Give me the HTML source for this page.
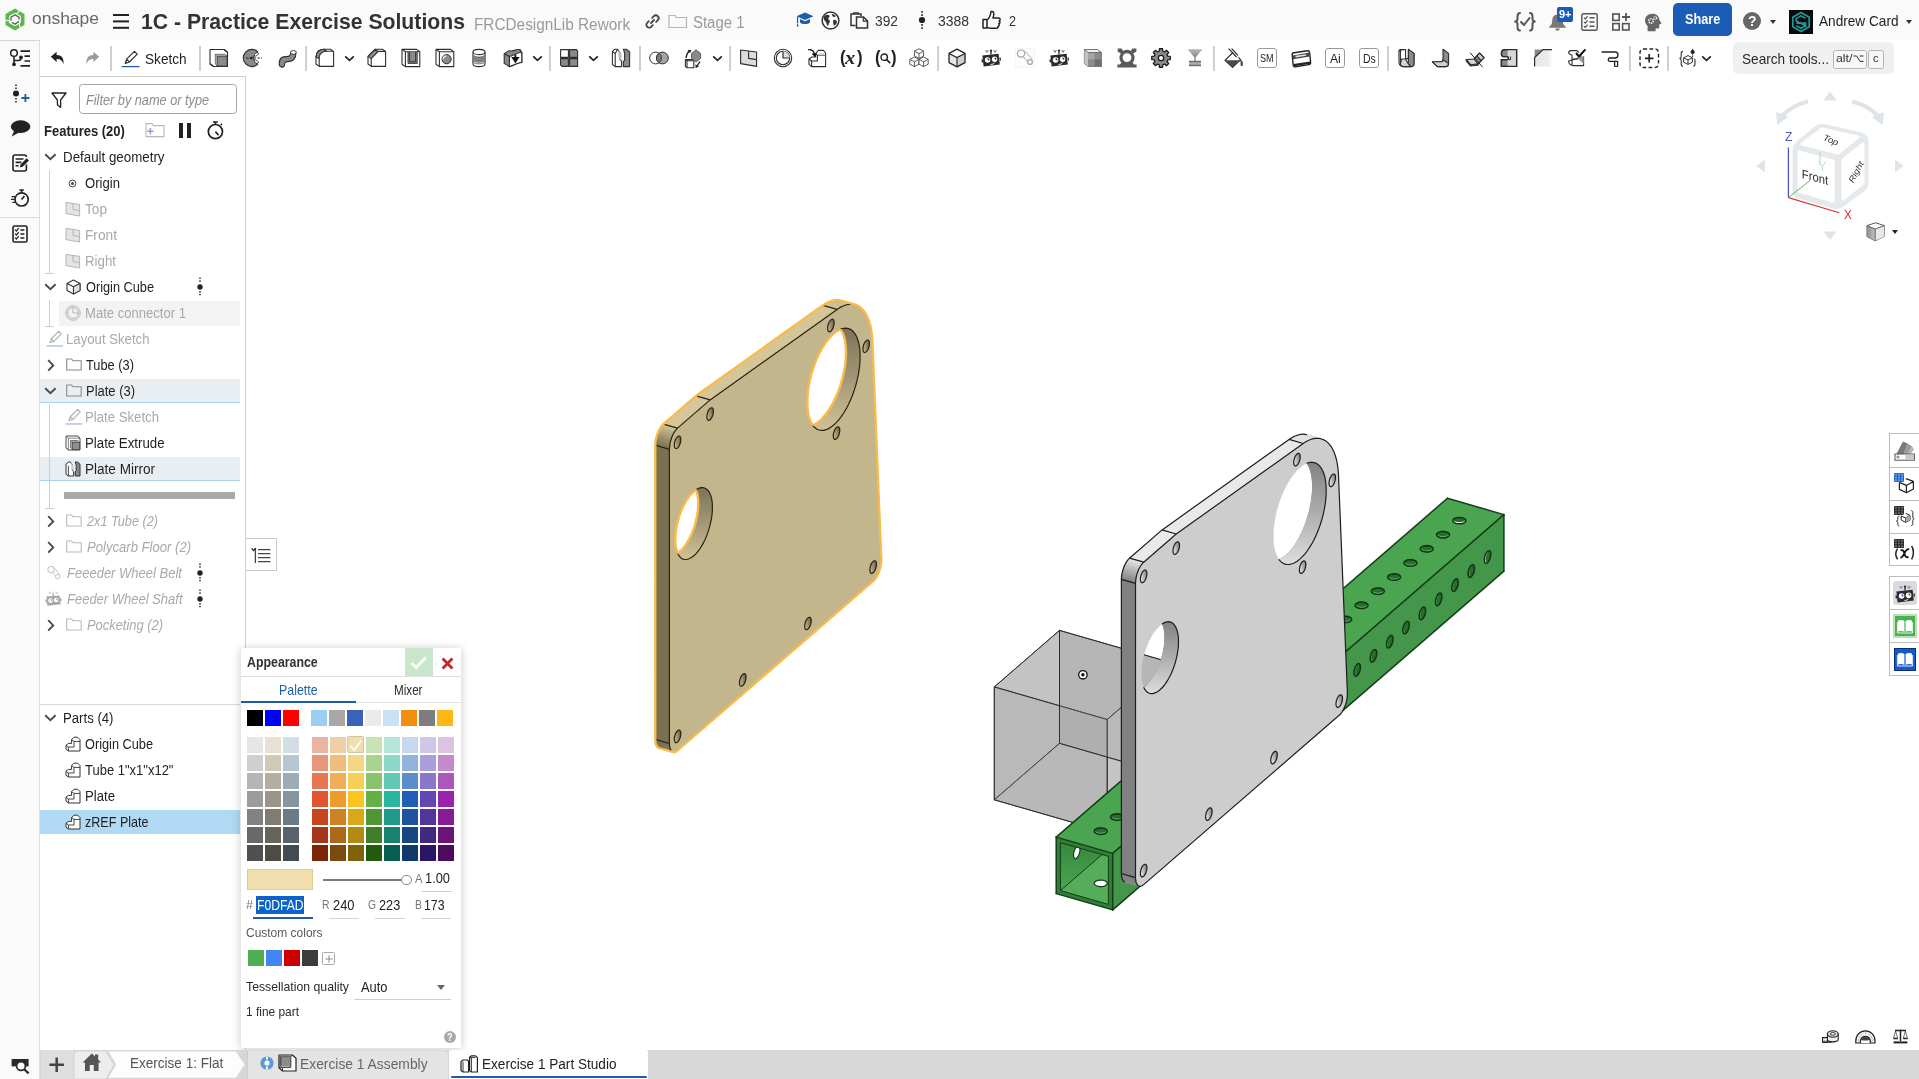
<!DOCTYPE html>
<html lang="en"><head><meta charset="utf-8"><title>1C - Practice Exercise Solutions</title>
<style>
html,body{margin:0;padding:0}
body{will-change:transform;width:1919px;height:1079px;overflow:hidden;position:relative;background:#fff;font-family:"Liberation Sans",sans-serif;font-size:14px;color:#1f1f1f}
.t{position:absolute;white-space:nowrap;line-height:1.2;transform-origin:0 50%}
.a{position:absolute}
svg{position:absolute;overflow:visible}
</style></head><body>

<!-- topbar -->
<div class="a" style="left:0;top:0;width:1919px;height:40px;background:#fafafa"></div>
<svg style="left:4.6px;top:8.4px" width="20" height="23" viewBox="0 0 20 23">
<path d="M10.0 0.5 L19.5 6.0 L19.5 17.0 L10.0 22.5 L0.5 17.0 L0.5 6.0Z M10.0 4.8 L15.8 8.1 L15.8 14.8 L10.0 18.2 L4.2 14.9 L4.2 8.1Z" fill="#5ab949" fill-rule="evenodd"/><path d="M10.9 6.6 L16.0 1.1" stroke="#fafafa" stroke-width="1.1"/><path d="M13.8 14.7 L16.0 21.9" stroke="#fafafa" stroke-width="1.1"/><path d="M5.3 13.2 L-2.0 11.5" stroke="#fafafa" stroke-width="1.1"/>
<path d="M6.0 12.8 L6.0 9.2 L10.0 6.9 L14.0 9.2 L14.0 11.4 M14.0 13.4 L10.0 16.1 L7.0 14.4" fill="none" stroke="#666" stroke-width="1.4"/>
</svg>
<span class="t" style="left:31.5px;top:8.7px;font-size:16.5px;color:#666;transform:scaleX(1.058);">onshape</span>
<div class="a" style="left:113px;top:14px;width:16px;height:2.3px;background:#222;box-shadow:0 6.4px 0 #222,0 12.8px 0 #222"></div>
<span class="t" style="left:141px;top:7.8px;font-size:22.5px;color:#333;font-weight:700;transform:scaleX(0.942);">1C - Practice Exercise Solutions</span>
<span class="t" style="left:474px;top:15.4px;font-size:16px;color:#9a9a9a;transform:scaleX(0.959);">FRCDesignLib Rework</span>
<svg style="left:644px;top:13px" width="17" height="17" viewBox="0 0 17 17" fill="none" stroke="#444" stroke-width="1.8" stroke-linecap="round">
<path d="M7 10 L10 7"/><path d="M8.2 4.8 L9.8 3.2 a2.8 2.8 0 0 1 4 4 L12.2 8.8"/><path d="M8.8 12.2 L7.2 13.8 a2.8 2.8 0 0 1 -4 -4 L4.8 8.2"/></svg>
<svg style="left:668px;top:14px" width="20" height="15" viewBox="0 0 20 15" fill="none" stroke="#b5b5b5" stroke-width="1.2"><path d="M1 13.5 V1.5 H7 L8.5 3.5 H18.5 V13.5Z"/></svg>
<span class="t" style="left:692.5px;top:13.2px;font-size:16px;color:#9a9a9a;transform:scaleX(0.934);">Stage 1</span>
<svg style="left:796px;top:12px" width="18" height="16" viewBox="0 0 18 16"><path d="M9 0.5 L17.5 4.2 L9 8 L0.5 4.2Z" fill="#1b5faa"/><path d="M4 7 V10.5 C6 12.6 12 12.6 14 10.5 V7 L9 9.3Z" fill="#1b5faa"/><path d="M1.6 5 V11" stroke="#1b5faa" stroke-width="1.2"/><path d="M0.6 14.5 L1.6 10.5 L2.6 14.5Z" fill="#1b5faa"/></svg>
<svg style="left:821px;top:10.5px" width="19" height="19" viewBox="0 0 19 19"><circle cx="9.5" cy="9.5" r="8.4" fill="#fafafa" stroke="#333" stroke-width="1.5"/><path d="M3 5.5 C5 3 7.5 3.5 8.5 4.5 C9 6 7.5 6.5 7 8 C8.5 9 9.5 10 8.5 11.5 C7.5 13 7.5 14.5 6.5 15 C5.5 13.5 5.5 11.5 4.5 10.5 C3 9.5 2.5 7.5 3 5.5Z" fill="#333"/><path d="M11 3 C12.5 3 14 4 15 5 C14 6 12.5 6.5 12 5.5 C11.3 4.6 10.6 3.8 11 3Z M12.5 9 C14 8.5 15.5 9.5 16 11 C15.5 13 14 14.5 12.8 14.8 C12.6 13 11.5 11 12.5 9Z" fill="#333"/></svg>
<svg style="left:850px;top:11.5px" width="19" height="17" viewBox="0 0 19 17" fill="none" stroke="#333" stroke-width="1.5"><path d="M5.5 13.5 H1 V2 H11 V4"/><path d="M3.8 2 V0.9 H8.2 V2" stroke-width="1.4"/><path d="M6.5 5 H13.5 L17.5 9 V16 H6.5Z"/><path d="M13.3 5 V9.2 H17.5" stroke-width="1.2"/></svg>
<span class="t" style="left:875.4px;top:11.5px;font-size:15px;color:#333;transform:scaleX(0.919);">392</span>
<svg style="left:916px;top:10px" width="12" height="20" viewBox="0 0 12 20"><circle cx="6" cy="10" r="3.1" fill="#222"/><path d="M6 1 V6 M6 14 V19" stroke="#222" stroke-width="1.6" stroke-dasharray="1.7 1.5"/></svg>
<span class="t" style="left:938px;top:11.5px;font-size:15px;color:#333;transform:scaleX(0.929);">3388</span>
<svg style="left:982px;top:10px" width="20" height="20" viewBox="0 0 20 20" fill="none" stroke="#222" stroke-width="1.5" stroke-linejoin="round"><path d="M1 9.5 H5 V18 H1Z"/><path d="M5 10 C7.5 8 8.5 5.5 8.8 2.2 C9 1 11.6 1 11.8 3.4 C12 5.2 11.5 6.6 11 8 H16.5 C18.6 8 18.6 10.6 17.2 11 C18.4 11.6 18.1 13.6 16.7 13.8 C17.6 14.6 17.2 16.3 15.9 16.4 C16.4 17.3 15.8 18.3 14.6 18.3 H8.5 C7 18.3 6 17.5 5 17.2"/></svg>
<span class="t" style="left:1008.8px;top:11.5px;font-size:15px;color:#333;transform:scaleX(0.839);">2</span>
<svg style="left:1514px;top:12px" width="22" height="20" viewBox="0 0 22 20" fill="none" stroke="#555" stroke-width="2" stroke-linecap="round" stroke-linejoin="round"><path d="M6 1 C3.5 1 3.5 2.5 3.5 4.5 V7 C3.5 8.5 2.5 9.3 1.2 9.5 C2.5 9.8 3.5 10.5 3.5 12 V15 C3.5 17 3.5 18.5 6 18.5"/><path d="M16 1 C18.5 1 18.5 2.5 18.5 4.5 V7 C18.5 8.5 19.5 9.3 20.8 9.5 C19.5 9.8 18.5 10.5 18.5 12 V15 C18.5 17 18.5 18.5 16 18.5"/><path d="M7 10 L10 13 L15.5 6"/></svg>
<svg style="left:1548px;top:14px" width="19" height="17" viewBox="0 0 19 17"><path d="M9.5 0.5 C5.5 0.5 4.2 3.8 4.2 7 C4.2 10 3 11.5 1.2 12.8 V13.8 H17.8 V12.8 C16 11.5 14.8 10 14.8 7 C14.8 3.8 13.5 0.5 9.5 0.5Z" fill="#777"/><path d="M7.3 14.6 a2.2 2.2 0 0 0 4.4 0Z" fill="#777"/></svg>
<div class="a" style="left:1557px;top:6.5px;width:16px;height:15.5px;background:#1a5ab8;border-radius:2px"></div>
<span class="t" style="left:1559px;top:7.7px;font-size:10.5px;color:#fff;font-weight:700;transform:scaleX(1.044);">9+</span>
<svg style="left:1581px;top:13px" width="17" height="18" viewBox="0 0 17 18" fill="none" stroke="#555" stroke-width="1.4"><rect x="0.8" y="0.8" width="15.4" height="16.4" rx="1.5"/><path d="M8.5 4.8 H13.5 M8.5 9 H13.5 M8.5 13.2 H13.5" stroke-width="1.5"/><path d="M3 4.6 L4.3 6 L6.6 3.2 M3 8.8 L4.3 10.2 L6.6 7.4 M3 13 L4.3 14.4 L6.6 11.6" stroke-width="1.2"/></svg>
<svg style="left:1612px;top:13px" width="19" height="18" viewBox="0 0 19 18" fill="none" stroke="#555" stroke-width="1.6"><rect x="0.8" y="1" width="6.4" height="6.4"/><rect x="0.8" y="10.6" width="6.4" height="6.4"/><rect x="10.6" y="10.6" width="6.4" height="6.4"/><path d="M14 0 V8 M10 4 H18" stroke-width="1.8"/></svg>
<svg style="left:1644px;top:12.5px" width="19" height="19" viewBox="0 0 19 19"><path d="M8.5 0.8 C3.8 0.8 1 4 1 7.6 C1 10.3 2.3 11.8 3.6 13 V18.2 H11.6 V15.6 H13.6 C14.8 15.6 15.2 15 15.2 14 V11.6 L17.6 10.4 L15.4 7 C15.2 3.4 12.6 0.8 8.5 0.8Z" fill="#666"/><circle cx="7" cy="8" r="2.3" fill="none" stroke="#fafafa" stroke-width="1.5" stroke-dasharray="1.3 0.9"/><circle cx="11.3" cy="5" r="1.4" fill="none" stroke="#fafafa" stroke-width="1.2" stroke-dasharray="1 0.7"/></svg>
<div class="a" style="left:1673px;top:3px;width:59px;height:33px;background:#1b5cb6;border-radius:5px"></div>
<span class="t" style="left:1685.2px;top:9.9px;font-size:15.5px;color:#fff;font-weight:700;transform:scaleX(0.819);">Share</span>
<div class="a" style="left:1743px;top:12px;width:18px;height:18px;border-radius:9px;background:#666"></div>
<span class="t" style="left:1747.8px;top:12.5px;font-size:14.5px;color:#fafafa;font-weight:700;transform:scaleX(0.971);">?</span>
<div class="a" style="left:1769.5px;top:19.8px;border:3.8px solid transparent;border-top:4.2px solid #333;border-bottom:0"></div>
<svg style="left:1789px;top:10px" width="24" height="24" viewBox="0 0 24 24"><rect width="24" height="24" fill="#0a0a0a"/><path d="M12 2.6 L20.2 7.3 V16.7 L12 21.4 L3.8 16.7 V7.3Z" fill="none" stroke="#1f9a9c" stroke-width="1.7"/><path d="M16.5 8.2 L12 5.8 L7.2 8.4 V11 L16.6 15.6 V13 L7.3 13.3 M7.3 15.8 L12 18.3 L16.6 15.6" fill="none" stroke="#1f9a9c" stroke-width="1.6"/></svg>
<span class="t" style="left:1819px;top:12px;font-size:15px;color:#222;transform:scaleX(0.908);">Andrew Card</span>
<div class="a" style="left:1906px;top:19.8px;border:3.8px solid transparent;border-top:4.2px solid #333;border-bottom:0"></div>
<!-- toolbar -->
<div class="a" style="left:0;top:40px;width:39.4px;height:1039px;background:#fafafa;border-right:1px solid #dedede"></div>
<div class="a" style="left:0;top:40px;width:40px;height:1px;background:#d4d4d4"></div>
<svg style="left:9px;top:48px" width="22" height="20" viewBox="0 0 22 20"><circle cx="5" cy="5" r="3.3" fill="none" stroke="#222" stroke-width="1.5"/><path d="M5 8.3 V15.5 M5 12.5 H9.5 C11.5 12.5 12 11.5 12 10" fill="none" stroke="#222" stroke-width="1.6"/><circle cx="5" cy="16.3" r="1.9" fill="#222"/><circle cx="12" cy="9.3" r="1.9" fill="#222"/><path d="M11.5 3.2 H21 M15.5 8.2 H21 M15.5 13 H21 M11.5 17.8 H21" stroke="#222" stroke-width="1.7"/></svg>
<svg style="left:49.5px;top:50.6px" width="15" height="14" viewBox="0 0 15 14"><path d="M0.8 5.8 L6.6 0.8 V3.9 C11.6 3.9 14.2 7 13.4 13.4 C12.4 9.6 10.4 8 6.6 8 V11Z" fill="#222"/></svg>
<svg style="left:85px;top:50.6px" width="15" height="14" viewBox="0 0 15 14"><path d="M14.2 5.8 L8.4 0.8 V3.9 C3.4 3.9 0.8 7 1.6 13.4 C2.6 9.6 4.6 8 8.4 8 V11Z" fill="#9c9c9c"/></svg>
<div class="a" style="left:110.2px;top:45.5px;width:1.6px;height:25px;background:#cfcfcf"></div>
<svg style="left:120.5px;top:49.5px" width="19" height="18" viewBox="0 0 19 18"><path d="M4.2 13.4 L5.6 9.2 L13.4 1.4 L16.2 4.2 L8.4 12Z M5.6 9.2 L8.4 12" fill="none" stroke="#333" stroke-width="1.2" stroke-linejoin="round"/><path d="M4.2 13.4 L5 11.4 L6.2 12.6Z" fill="#333"/><path d="M0.5 16.6 H18.5" stroke="#1b5faa" stroke-width="1.3"/></svg>
<span class="t" style="left:144.7px;top:50.1px;font-size:15.5px;color:#222;transform:scaleX(0.878);">Sketch</span>
<div class="a" style="left:199px;top:45.5px;width:1.6px;height:25px;background:#cfcfcf"></div>
<svg style="left:209px;top:48px" width="20" height="20" viewBox="0 0 20 20"><path d="M1 1.5 H15 L18.5 4.2 V18.5 H4.5 L1 15.8Z" fill="#fff" fill="none" stroke="#2e2e2e" stroke-width="1.1" stroke-linejoin="round"/><path d="M15 1.5 L18.5 4.2 M1 15.8 L4.5 18.5 M4.5 18.5" fill="none" stroke="#2e2e2e" stroke-width="1.1" stroke-linejoin="round"/><rect x="8" y="8" width="10.2" height="10.2" fill="#8a8a8a" stroke="#2e2e2e" stroke-width="1"/><path d="M6.4 6.4 H15.4 L18.2 8 M6.4 6.4 V15.4 L8 18.2 M6.4 6.4 L8 8" fill="none" stroke="#2e2e2e" stroke-width="0.9"/><path d="M6.4 6.4 H15.4 L18.2 8 H8Z M6.4 6.4 V15.4 L8 18.2 V8Z" fill="#a5a5a5"/></svg>
<svg style="left:243px;top:48px" width="20" height="20" viewBox="0 0 20 20"><path d="M14.6 3.6 A8.6 8.6 0 1 0 14.6 16.4 L9.8 10Z" fill="#8a8a8a" stroke="#2e2e2e" stroke-width="1.1"/><ellipse cx="13.4" cy="6.3" rx="2.3" ry="1.3" transform="rotate(-38 13.4 6.3)" fill="#fff" stroke="#2e2e2e" stroke-width="0.8"/><ellipse cx="13.4" cy="13.7" rx="2.3" ry="1.3" transform="rotate(38 13.4 13.7)" fill="#fff" stroke="#2e2e2e" stroke-width="0.8"/><path d="M3 10 H19" stroke="#222" stroke-width="1" stroke-dasharray="2.4 1.4"/><path d="M6.2 10 L9 8.4 V11.6Z" fill="#222"/></svg>
<svg style="left:276.5px;top:48.5px" width="21" height="20" viewBox="0 0 21 20"><path d="M2.2 14.5 C2.2 8.5 6 7.6 9.5 7.6 C12.5 7.6 13.8 6.5 13.8 3.2 L19 3.2 C19 9 17 12.6 11 12.6 C8.4 12.6 7.6 13.4 7.6 15.2 C7.6 19.4 2.2 19 2.2 14.5Z" fill="#8a8a8a" stroke="#2e2e2e" stroke-width="1.1"/><ellipse cx="16.4" cy="3.4" rx="2.7" ry="1.9" fill="#fff" stroke="#2e2e2e" stroke-width="0.9"/></svg>
<div class="a" style="left:305.2px;top:45.5px;width:1.6px;height:25px;background:#cfcfcf"></div>
<svg style="left:315px;top:48px" width="20" height="20" viewBox="0 0 20 20"><path d="M1 9 C1 4 4.5 1.3 9 1.3 H15.5 L18.6 3.6 V18.4 H4.2 L1 16Z" fill="#fff" fill="none" stroke="#2e2e2e" stroke-width="1.1" stroke-linejoin="round"/><path d="M1 9 C1 4 4.5 1.3 9 1.3 L11.6 3.2 C7.5 3.2 4.2 5.6 4.2 10.6Z" fill="#8a8a8a" fill="none" stroke="#2e2e2e" stroke-width="1.1" stroke-linejoin="round"/><path d="M4.2 10.6 V18.4 M11.6 3.2 H18.6" fill="none" stroke="#2e2e2e" stroke-width="1.1" stroke-linejoin="round"/></svg>
<svg style="left:344.2px;top:54.8px" width="11" height="7" viewBox="0 0 11 7"><path d="M1.2 1.4 L5.5 5.4 L9.8 1.4" fill="none" stroke="#222" stroke-width="1.7"/></svg>
<svg style="left:367px;top:48px" width="20" height="20" viewBox="0 0 20 20"><path d="M1 8.4 L8 1.3 H15.5 L18.6 3.6 V18.4 H4.2 L1 16Z" fill="#fff" fill="none" stroke="#2e2e2e" stroke-width="1.1" stroke-linejoin="round"/><path d="M1 8.4 L8 1.3 L11.2 3.4 L4.2 10.6Z" fill="#8a8a8a" fill="none" stroke="#2e2e2e" stroke-width="1.1" stroke-linejoin="round"/><path d="M4.2 10.6 V18.4 M11.2 3.4 H18.6" fill="none" stroke="#2e2e2e" stroke-width="1.1" stroke-linejoin="round"/></svg>
<svg style="left:401px;top:48px" width="20" height="20" viewBox="0 0 20 20"><path d="M1 1.4 H15.6 L18.8 3.8 V18.6 H4.4 L1 16.2Z" fill="#fff" fill="none" stroke="#2e2e2e" stroke-width="1.1" stroke-linejoin="round"/><path d="M4.4 3.8 H18.8 M4.4 3.8 V18.6 M1 1.4 L4.4 3.8" fill="none" stroke="#2e2e2e" stroke-width="1.1" stroke-linejoin="round"/><path d="M7 3.8 H16.2 V15.4 H7Z" fill="#8a8a8a"/><path d="M7 3.8 V15.4 H16.2 V3.8 M8.6 3.8 V13.8 H14.6 V3.8" fill="none" stroke="#2e2e2e" stroke-width="0.9"/></svg>
<svg style="left:435px;top:48px" width="20" height="20" viewBox="0 0 20 20"><path d="M1 1.4 H15.6 L18.8 3.8 V18.6 H4.4 L1 16.2Z" fill="#fff" fill="none" stroke="#2e2e2e" stroke-width="1.1" stroke-linejoin="round"/><path d="M4.4 3.8 H18.8 M4.4 3.8 V18.6 M1 1.4 L4.4 3.8" fill="none" stroke="#2e2e2e" stroke-width="1.1" stroke-linejoin="round"/><circle cx="11.6" cy="11.2" r="4.6" fill="#8a8a8a" stroke="#2e2e2e" stroke-width="1"/><path d="M8.2 11.6 A3.2 3.2 0 0 1 11.4 8" fill="none" stroke="#e8e8e8" stroke-width="1.4"/></svg>
<svg style="left:469px;top:48px" width="20" height="20" viewBox="0 0 20 20"><path d="M4 4 V16 A6 2.6 0 0 0 16 16 V4" fill="#fff" fill="none" stroke="#2e2e2e" stroke-width="1.1" stroke-linejoin="round"/><ellipse cx="10" cy="4" rx="6" ry="2.6" fill="#fff" fill="none" stroke="#2e2e2e" stroke-width="1.1" stroke-linejoin="round"/><path d="M4.2 6.6 A6 2.4 0 0 0 15.8 6.6 V12.6 A6 2.4 0 0 1 4.2 12.6Z" fill="#a8a8a8"/><path d="M4 7 A6 2.4 0 0 0 16 7 M4 8.6 A6 2.4 0 0 0 16 8.6 M4 10.2 A6 2.4 0 0 0 16 10.2 M4 11.8 A6 2.4 0 0 0 16 11.8 M4 13.4 A6 2.4 0 0 0 16 13.4" fill="none" stroke="#555" stroke-width="0.8"/></svg>
<svg style="left:503px;top:48px" width="20" height="20" viewBox="0 0 20 20"><path d="M1.2 5.6 L6 2.6 C9 4.6 12.6 0.6 17 1.6 L18.8 4.6 V14.6 C15.5 13.4 12 17.6 6.4 18.6 L1.2 15.4Z" fill="#8a8a8a" fill="none" stroke="#2e2e2e" stroke-width="1.1" stroke-linejoin="round"/><path d="M6.4 8.4 C10 8 13.6 4 18.8 4.6 V14.6 C15.5 13.4 12 17.6 6.4 18.6Z" fill="#fff" fill="none" stroke="#2e2e2e" stroke-width="1.1" stroke-linejoin="round"/><path d="M1.2 5.6 L6.4 8.4" fill="none" stroke="#2e2e2e" stroke-width="1.1" stroke-linejoin="round"/><path d="M12.4 6.6 V11.4 M10 10 L12.4 13.6 L14.8 10Z" fill="#111" stroke="#111" stroke-width="1.9"/></svg>
<svg style="left:532.2px;top:54.8px" width="11" height="7" viewBox="0 0 11 7"><path d="M1.2 1.4 L5.5 5.4 L9.8 1.4" fill="none" stroke="#222" stroke-width="1.7"/></svg>
<div class="a" style="left:549px;top:45.5px;width:1.6px;height:25px;background:#cfcfcf"></div>
<svg style="left:559px;top:48px" width="20" height="20" viewBox="0 0 20 20"><path d="M1.6 1.6 H9.4 V9.4 H1.6Z" fill="#fff" fill="none" stroke="#2e2e2e" stroke-width="1.1" stroke-linejoin="round"/><path d="M10.6 1.6 H17.4 L18.6 3 V9.4 H10.6Z M1.6 10.6 H9.4 V18.4 H3 L1.6 17Z M10.6 10.6 H18.6 V18.4 H10.6Z" fill="#8a8a8a" fill="none" stroke="#2e2e2e" stroke-width="1.1" stroke-linejoin="round"/></svg>
<svg style="left:588.2px;top:54.8px" width="11" height="7" viewBox="0 0 11 7"><path d="M1.2 1.4 L5.5 5.4 L9.8 1.4" fill="none" stroke="#222" stroke-width="1.7"/></svg>
<svg style="left:611px;top:48px" width="20" height="20" viewBox="0 0 20 20"><path d="M1.4 3.4 L4 1.2 H6.6 L9 5 V11.6 L10.6 13 V18.6 H4.2 L1.4 16.4Z" fill="#fff" fill="none" stroke="#2e2e2e" stroke-width="1.1" stroke-linejoin="round"/><path d="M4.2 5.6 V18.6 M1.4 3.4 L4.2 5.6 L6.6 1.4" fill="none" stroke="#2e2e2e" stroke-width="1.1" stroke-linejoin="round"/><path d="M12.4 1.2 H15.4 L18.6 4 V18.6 H12.4 V13.4 L13.6 12.4 V5Z" fill="#8a8a8a" fill="none" stroke="#2e2e2e" stroke-width="1.1" stroke-linejoin="round"/><path d="M7 2 L10.6 6.4 V13 L7.4 9.4Z" fill="#c8c8c8" opacity="0.8"/></svg>
<div class="a" style="left:639.2px;top:45.5px;width:1.6px;height:25px;background:#cfcfcf"></div>
<svg style="left:649px;top:48px" width="20" height="20" viewBox="0 0 20 20"><circle cx="6.6" cy="10" r="5.9" fill="#fff" stroke="#2e2e2e" stroke-width="1"/><circle cx="13.4" cy="10" r="5.9" fill="#9a9a9a" fill-opacity="0.9" stroke="#2e2e2e" stroke-width="1"/><path d="M10 5.2 A5.9 5.9 0 0 1 10 14.8 A5.9 5.9 0 0 1 10 5.2Z" fill="#7a7a7a" stroke="#2e2e2e" stroke-width="0.8"/></svg>
<svg style="left:683px;top:48.5px" width="20" height="20" viewBox="0 0 20 20"><path d="M2.4 10.6 H9.2 L10.8 11.8 V18.8 H4 L2.4 17.6Z" fill="#fff" fill="none" stroke="#2e2e2e" stroke-width="1.1" stroke-linejoin="round"/><path d="M4 11.8 H10.8 M4 11.8 V18.8 M2.4 10.6 L4 11.8" fill="none" stroke="#2e2e2e" stroke-width="1.1" stroke-linejoin="round"/><path d="M13 0.8 L17.6 4.4 V9.4 L13 13 L8.6 9.4 V4.4Z" fill="#8a8a8a" stroke="#555" stroke-width="0.9"/><path d="M3 9 C3.4 5.6 4.6 3.4 6.4 2" fill="none" stroke="#222" stroke-width="1.3"/><path d="M4.6 1 L8.4 1 L7 4.2Z" fill="#222"/><path d="M17 12.6 L14 17" stroke="#222" stroke-width="1.3"/><path d="M12.4 15.2 L12.6 19 L16 17.4Z" fill="#222"/></svg>
<svg style="left:712.2px;top:54.8px" width="11" height="7" viewBox="0 0 11 7"><path d="M1.2 1.4 L5.5 5.4 L9.8 1.4" fill="none" stroke="#222" stroke-width="1.7"/></svg>
<div class="a" style="left:729.2px;top:45.5px;width:1.6px;height:25px;background:#cfcfcf"></div>
<svg style="left:739px;top:48px" width="20" height="20" viewBox="0 0 20 20"><path d="M1.6 2 L17.6 4 V18.4 L1.6 15.6Z" fill="#dcdcdc" fill="none" stroke="#2e2e2e" stroke-width="1.1" stroke-linejoin="round"/><path d="M9.6 3 V10.4 L17.6 11.6" fill="none" stroke="#2e2e2e" stroke-width="1.1" stroke-linejoin="round"/></svg>
<svg style="left:773px;top:48px" width="20" height="20" viewBox="0 0 20 20"><circle cx="10" cy="10" r="8.7" fill="#fff" stroke="#2e2e2e" stroke-width="1.1"/><circle cx="10" cy="10" r="6.7" fill="#fff" stroke="#2e2e2e" stroke-width="1.1"/><path d="M10 10 V3.3 A6.7 6.7 0 0 1 16.7 10Z" fill="#dcdcdc"/><path d="M10 3.5 V10 H16.5" fill="none" stroke="#2e2e2e" stroke-width="1.2"/></svg>
<svg style="left:807px;top:48px" width="20" height="20" viewBox="0 0 20 20"><path d="M2 11 L5 9 H8.6 V5.6 L11.4 2.4 H16.4 L18.6 5 V18.6 H4.6 L2 16.4Z" fill="#fff" fill="none" stroke="#2e2e2e" stroke-width="1.1" stroke-linejoin="round"/><path d="M2 11 L4.6 13 H10.4 V7.4 H18.6 M4.6 13 V18.6 M10.4 7.4 L8.6 5.6" fill="none" stroke="#2e2e2e" stroke-width="1.1" stroke-linejoin="round"/><path d="M10.4 7.4 L12.8 5 H16.4 L18.6 7.4Z" fill="#d0d0d0"/><path d="M1.2 1.6 C5 1.4 7 3 7.4 6.4" fill="none" stroke="#111" stroke-width="1.4"/><path d="M4.6 5.6 L7.6 9 L10 5.4Z" fill="#111"/></svg>
<span class="t" style="left:840.2px;top:46.2px;font-size:19px;color:#222;font-weight:700;transform:scaleX(0.885);">(</span>
<span class="t" style="left:857.4px;top:46.2px;font-size:19px;color:#222;font-weight:700;transform:scaleX(0.885);">)</span>
<span class="t" style="left:845.4px;top:47px;font-size:19px;color:#222;font-weight:700;font-style:italic;transform:scaleX(1.088);font-family:'Liberation Serif',serif;">x</span>
<span class="t" style="left:874.6px;top:46.2px;font-size:19px;color:#222;font-weight:700;transform:scaleX(0.885);">(</span>
<span class="t" style="left:891.2px;top:46.2px;font-size:19px;color:#222;font-weight:700;transform:scaleX(0.885);">)</span>
<svg style="left:879.7px;top:52.7px" width="11" height="11" viewBox="0 0 11 11"><circle cx="4.2" cy="4.2" r="3.2" fill="none" stroke="#222" stroke-width="1.4"/><path d="M6.6 6.6 L10.2 10.2" stroke="#222" stroke-width="1.7"/></svg>
<svg style="left:909px;top:48px" width="20" height="20" viewBox="0 0 20 20"><g fill="#fff" stroke="#4a4a4a" stroke-width="0.9" stroke-linejoin="round"><path d="M10 0.8 L14.6 3.2 V8 L10 10.4 L5.4 8 V3.2Z M5.4 3.2 L10 5.6 L14.6 3.2 M10 5.6 V10.4"/><path d="M5.4 9 L10 11.4 V16.2 L5.4 18.6 L0.8 16.2 V11.4Z M0.8 11.4 L5.4 13.8 L10 11.4 M5.4 13.8 V18.6"/><path d="M14.6 9 L19.2 11.4 V16.2 L14.6 18.6 L10 16.2 V11.4Z M10 11.4 L14.6 13.8 L19.2 11.4 M14.6 13.8 V18.6"/></g></svg>
<div class="a" style="left:937.2px;top:45.5px;width:1.6px;height:25px;background:#cfcfcf"></div>
<svg style="left:947px;top:48px" width="20" height="20" viewBox="0 0 20 20"><path d="M10 1.2 L18 5.4 V14.6 L10 18.8 L2 14.6 V5.4Z" fill="#fff"/><path d="M2 5.4 L10 9.6 V18.8 L2 14.6Z" fill="#e6e6e6"/><path d="M10 9.6 L18 5.4 V14.6 L10 18.8Z" fill="#cfcfcf"/><path d="M2 5.4 L10 9.6 L18 5.4 M10 9.6 V18.8" fill="none" stroke="#222" stroke-width="1.1"/><path d="M10 1.2 L18 5.4 V14.6 L10 18.8 L2 14.6 V5.4Z" fill="none" stroke="#222" stroke-width="1.3" stroke-linejoin="round"/></svg>
<svg style="left:980.5px;top:48.5px" width="21" height="19" viewBox="0 0 21 19"><path d="M1.4 6.4 L17.6 4.8 L18.8 15.6 L2.6 17.6Z" fill="#2b2b2b"/><path d="M0.4 10.4 L1.8 10.2 L2.2 13.4 L0.8 13.6Z M18.4 8.6 L19.7 8.4 L20 11.6 L18.8 11.8Z" fill="#2b2b2b"/><circle cx="6.6" cy="11" r="2.7" fill="#fff"/><circle cx="13.6" cy="10.2" r="2.7" fill="#fff"/><path d="M6.6 11 L6.6 9.2 A1.8 1.8 0 0 1 8.2 11.6Z M13.6 10.2 L13.6 8.4 A1.8 1.8 0 0 1 15.2 10.8Z" fill="#2b2b2b"/><path d="M9.4 15.4 C11.4 15.6 13 14.8 13.6 13.6" fill="none" stroke="#fff" stroke-width="0.9"/><path d="M10 5.4 V1.4" stroke="#2b2b2b" stroke-width="1.3"/><circle cx="10" cy="1.6" r="1.1" fill="#2b2b2b"/><path d="M4.6 1 L6 3.4 L7.4 1 M12.6 1 L14 3.4 L15.4 1" fill="none" stroke="#666" stroke-width="0.9"/></svg>
<svg style="left:1015px;top:48px" width="20" height="20" viewBox="0 0 20 20"><rect x="0.5" y="0.5" width="19" height="19" fill="#fcfcfc" stroke="#f0f0f0" stroke-width="0.6"/><path d="M3.4 3.6 L13.8 14.6 M9 2.4 L17.4 11.2" stroke="#a8a8a8" stroke-width="1"/><circle cx="6" cy="5.6" r="3.6" fill="#fff" stroke="#a0a0a0" stroke-width="1.2"/><circle cx="15" cy="14" r="2.4" fill="#fff" stroke="#a0a0a0" stroke-width="1.2"/></svg>
<svg style="left:1048.5px;top:48.5px" width="21" height="19" viewBox="0 0 21 19"><path d="M1.4 6.4 L17.6 4.8 L18.8 15.6 L2.6 17.6Z" fill="#2b2b2b"/><path d="M0.4 10.4 L1.8 10.2 L2.2 13.4 L0.8 13.6Z M18.4 8.6 L19.7 8.4 L20 11.6 L18.8 11.8Z" fill="#2b2b2b"/><circle cx="6.6" cy="11" r="2.7" fill="#fff"/><circle cx="13.6" cy="10.2" r="2.7" fill="#fff"/><path d="M6.6 11 L6.6 9.2 A1.8 1.8 0 0 1 8.2 11.6Z M13.6 10.2 L13.6 8.4 A1.8 1.8 0 0 1 15.2 10.8Z" fill="#2b2b2b"/><path d="M9.4 15.4 C11.4 15.6 13 14.8 13.6 13.6" fill="none" stroke="#fff" stroke-width="0.9"/><path d="M10 5.4 V1.4" stroke="#2b2b2b" stroke-width="1.3"/><circle cx="10" cy="1.6" r="1.1" fill="#2b2b2b"/><path d="M4.6 1 L6 3.4 L7.4 1 M12.6 1 L14 3.4 L15.4 1" fill="none" stroke="#666" stroke-width="0.9"/></svg>
<svg style="left:1083px;top:48px" width="20" height="20" viewBox="0 0 20 20"><path d="M1.4 1.6 H14.4 L18.4 4.4 V18.4 H5 L1.4 15.6Z" fill="#fff" stroke="#555" stroke-width="0.9"/><path d="M5 4.4 H18.4 V18.4 H5Z" fill="#8c8c8c"/><path d="M5 4.4 H11.6 V11.4 H5Z" fill="#a6a6a6"/><path d="M11.6 11.4 H18.4 V18.4 H11.6Z" fill="#6e6e6e"/><path d="M1.4 1.6 L5 4.4 V18.4 L1.4 15.6Z" fill="#c4c4c4"/><path d="M1.4 1.6 L5 4.4 H18.4" fill="none" stroke="#555" stroke-width="0.8"/></svg>
<svg style="left:1117px;top:48px" width="20" height="20" viewBox="0 0 20 20"><path d="M0.6 0.6 H4.6 L6.2 3 A7 7 0 0 1 13.8 3 L15.4 0.6 L19.4 0.6 V3.6 L16.2 5.6 A7 7 0 0 1 15.6 14.6 L17 16.6 H19.6 V19.6 H0.4 V16.6 H3 L4.4 14.6 A7 7 0 0 1 3.8 5.6 L0.6 3.6Z" fill="#5a5a5a"/><circle cx="10" cy="9.6" r="4.4" fill="#fff"/></svg>
<svg style="left:1151px;top:48px" width="20" height="20" viewBox="0 0 20 20"><path d="M19.26,8.41 L19.26,11.59 L16.76,11.80 L16.06,13.51 L17.68,15.43 L15.43,17.68 L13.51,16.06 L11.80,16.76 L11.59,19.26 L8.41,19.26 L8.20,16.76 L6.49,16.06 L4.57,17.68 L2.32,15.43 L3.94,13.51 L3.24,11.80 L0.74,11.59 L0.74,8.41 L3.24,8.20 L3.94,6.49 L2.32,4.57 L4.57,2.32 L6.49,3.94 L8.20,3.24 L8.41,0.74 L11.59,0.74 L11.80,3.24 L13.51,3.94 L15.43,2.32 L17.68,4.57 L16.06,6.49 L16.76,8.20Z" fill="#8a8a8a" stroke="#1c1c1c" stroke-width="1.3" stroke-linejoin="round"/><circle cx="10" cy="10" r="2.7" fill="#fff" stroke="#1c1c1c" stroke-width="1.3"/></svg>
<svg style="left:1185px;top:48px" width="20" height="20" viewBox="0 0 20 20"><defs><linearGradient id="fg" x1="0" y1="0" x2="0" y2="1"><stop offset="0" stop-color="#b8b8b8"/><stop offset="1" stop-color="#6a6a6a"/></linearGradient></defs><path d="M3.4 2 H16.6 L10.6 9.4 V13 H9.4 V9.4Z" fill="url(#fg)"/><path d="M3.2 2 H16.8" stroke="#999" stroke-width="1"/><path d="M4 13.8 H16 M4 17.2 H16" stroke="#707070" stroke-width="1.9"/><path d="M4.4 15.5 H15.6" stroke="#b0b0b0" stroke-width="1.4"/></svg>
<div class="a" style="left:1213px;top:45.5px;width:1.6px;height:25px;background:#cfcfcf"></div>
<svg style="left:1222.5px;top:48px" width="21" height="20" viewBox="0 0 21 20"><path d="M5.6 0.6 L13.6 9 M8.6 0.6 L15 7.4" stroke="#222" stroke-width="1.1"/><path d="M9.8 4.6 L2 12.4 L9.6 19.4 L17.6 11.6 L15.4 9.4" fill="none" stroke="#222" stroke-width="1.2" stroke-linejoin="round"/><path d="M2.4 12.2 H17 L9.6 19.2Z" fill="#4a4a4a"/><path d="M17 11 C19.6 12.4 20.4 15 19.8 17.2 C19.4 18.6 17.6 18.4 17.6 17 C17.6 15 17.6 13 17 11Z" fill="#4a4a4a"/></svg>
<div class="a" style="left:1257.2px;top:48.2px;width:19.6px;height:19.6px;border:1px solid #9a9a9a;border-radius:3px;box-sizing:border-box;background:#fff"></div>
<span class="t" style="left:1260.4px;top:52px;font-size:11.5px;color:#222;transform:scaleX(0.788);">SM</span>
<svg style="left:1290.5px;top:48.5px" width="21" height="20" viewBox="0 0 21 20"><path d="M1.2 6 C1 4.6 1.6 4 3 3.8 L16.4 1.8 C17.8 1.6 18.4 2.2 18.6 3.6 L19.6 13.4 C19.8 14.8 19.2 15.4 17.8 15.6 L4.4 17.8 C3 18 2.4 17.4 2.2 16Z" fill="#fff" stroke="#222" stroke-width="1.4"/><path d="M1.4 6.4 L18.6 3.6 L19 7.4 L1.8 10.2Z" fill="#444"/><path d="M4.4 6.8 L15 5.2 L15.2 6.8 L4.6 8.4Z" fill="#e0e0e0"/><path d="M2.6 16.2 L19.6 13.6" stroke="#222" stroke-width="2.2"/></svg>
<div class="a" style="left:1325.2px;top:48.2px;width:19.6px;height:19.6px;border:1px solid #9a9a9a;border-radius:3px;box-sizing:border-box;background:#fff"></div>
<span class="t" style="left:1329.6px;top:51.7px;font-size:12px;color:#222;transform:scaleX(1.012);">Ai</span>
<div class="a" style="left:1359.2px;top:48.2px;width:19.6px;height:19.6px;border:1px solid #9a9a9a;border-radius:3px;box-sizing:border-box;background:#fff"></div>
<span class="t" style="left:1362.6px;top:51.7px;font-size:12px;color:#222;transform:scaleX(0.873);">Ds</span>
<div class="a" style="left:1387.2px;top:45.5px;width:1.6px;height:25px;background:#cfcfcf"></div>
<svg style="left:1397px;top:48px" width="20" height="20" viewBox="0 0 20 20"><path d="M2 3.6 C2 2.4 3 1.6 4.4 1.6 H8.6 V10.6 H11.4 V1.4 L17 5.4 V15.4 C17 17.6 15.6 18.6 13.6 18.6 H6.6 C3.6 18.6 2 16.6 2 14Z" fill="#fff" fill="none" stroke="#2e2e2e" stroke-width="1.1" stroke-linejoin="round"/><path d="M11.4 1.4 L17 5.4 V15.4 C17 17.6 15.6 18.6 13.6 18.6 L10.4 14.6 C11.2 14.4 11.4 13.8 11.4 13Z" fill="#8a8a8a" fill="none" stroke="#2e2e2e" stroke-width="1.1" stroke-linejoin="round"/><path d="M4.6 11 H8.6 L10.4 14.6 L13.6 18.6 H6.6 C4.6 18.6 3.4 17.6 3.4 15.6Z" fill="#d4d4d4" fill="none" stroke="#2e2e2e" stroke-width="1.1" stroke-linejoin="round"/><path d="M2 3.6 C2 2.4 3 1.6 4.4 1.6 C3.6 2.4 3.4 3 3.4 4.4 V15.6" fill="none" stroke="#2e2e2e" stroke-width="1.1" stroke-linejoin="round"/></svg>
<svg style="left:1431px;top:48px" width="20" height="20" viewBox="0 0 20 20"><path d="M12 1.2 L17.6 5.4 V15.6 C17.6 17.6 16.6 18.6 14.6 18.6 H6.4 L1.4 13.8 H10 C11.4 13.8 12 13.2 12 11.8Z" fill="#8a8a8a" fill="none" stroke="#2e2e2e" stroke-width="1.1" stroke-linejoin="round"/><path d="M1.4 13.8 H10 C11.4 13.8 12 13.2 12 11.8 L17.6 15.6 C17.6 17.6 16.6 18.6 14.6 18.6 H6.4Z" fill="#d0d0d0" fill="none" stroke="#2e2e2e" stroke-width="1.1" stroke-linejoin="round"/></svg>
<svg style="left:1465px;top:48.5px" width="20" height="20" viewBox="0 0 20 20"><path d="M1.2 10.6 L9 10 L14.6 4.2 L19 8.6 L13 15 L5.6 15.8Z" fill="#d6d6d6" fill="none" stroke="#2e2e2e" stroke-width="1.1" stroke-linejoin="round"/><path d="M9 10 L14.6 4.2 L19 8.6 L13 15Z" fill="#8a8a8a" fill="none" stroke="#2e2e2e" stroke-width="1.1" stroke-linejoin="round"/><path d="M11.8 7 L16.2 11.6 L19 8.6 L14.6 4.2Z" fill="#c8c8c8" fill="none" stroke="#2e2e2e" stroke-width="1.1" stroke-linejoin="round"/><path d="M1.2 10.6 L5.6 15.8 L13 15 L13 16.2 L5.4 17 L1.2 12Z" fill="#8a8a8a" fill="none" stroke="#2e2e2e" stroke-width="1.1" stroke-linejoin="round"/><path d="M5 3.6 L17.6 18.2" stroke="#222" stroke-width="1"/></svg>
<svg style="left:1499px;top:48px" width="20" height="20" viewBox="0 0 20 20"><path d="M2.4 5.4 C2.4 3 3.8 1.6 6.2 1.6 H17.6 V18.4 H2.4 V11.6 H8 C9.2 11.6 9.6 11 9.6 10 C9.6 9 9.2 8.6 8 8.6 H4.6 C3.2 8.6 2.4 7.6 2.4 5.4Z" fill="#8a8a8a" stroke="#2e2e2e" stroke-width="1.3"/><path d="M8.6 1.6 H17.6 V18.4 H8.6 V11.6 C9.4 11.4 9.6 10.8 9.6 10 C9.6 9.2 9.4 8.8 8.6 8.6Z" fill="#d8d8d8"/><path d="M11.6 8.6 V11.6 H8" fill="none" stroke="#2e2e2e" stroke-width="1"/><path d="M2.4 5.4 C2.4 3 3.8 1.6 6.2 1.6 H17.6 V18.4 H2.4 V11.6 H8 C9.2 11.6 9.6 11 9.6 10 C9.6 9 9.2 8.6 8 8.6 H4.6 C3.2 8.6 2.4 7.6 2.4 5.4Z" fill="none" stroke="#2e2e2e" stroke-width="1.3"/></svg>
<svg style="left:1533px;top:48px" width="20" height="20" viewBox="0 0 20 20"><defs><linearGradient id="cg" x1="0" y1="0" x2="1" y2="0"><stop offset="0" stop-color="#e6e6e6"/><stop offset="0.75" stop-color="#ececec"/><stop offset="1" stop-color="#fff"/></linearGradient></defs><path d="M2 9.4 L10 1.6 H19.6 V18.4 H2Z" fill="url(#cg)"/><path d="M1.6 1.6 H10 L1.6 9.8Z" fill="#8a8a8a"/><path d="M1.6 18.6 V9.6 L10 1.6 H19" fill="none" stroke="#2e2e2e" stroke-width="1.2"/></svg>
<svg style="left:1567px;top:48px" width="20" height="20" viewBox="0 0 20 20"><path d="M1.6 5 C1.6 3.4 2.6 2.6 4 2.6 H10 L12 4.6 M16.6 9 V17.6 H7 C3.6 17.6 1.6 16 1.6 13Z" fill="#fff" fill="none" stroke="#2e2e2e" stroke-width="1.1" stroke-linejoin="round"/><path d="M1.6 5 C2.4 6.6 3.6 7 5 7 V17.4 M5 11 H11" fill="none" stroke="#2e2e2e" stroke-width="1.1" stroke-linejoin="round"/><path d="M10 9.6 L16.6 16 V9.4 L13.6 6.4Z" fill="#9a9a9a"/><path d="M9 5 L12 8.4 L18.4 1.4" fill="none" stroke="#111" stroke-width="2.1"/></svg>
<svg style="left:1601px;top:48.5px" width="20" height="20" viewBox="0 0 20 20"><path d="M0.6 3 H14 C18 3 18 9 14 9 H9 C6.6 9 6.6 12.4 9 12.4 H16.6 V17.6 M13.6 12.6 V17.6" fill="none" stroke="#222" stroke-width="1.3"/><path d="M13.6 17.4 H16.6" stroke="#222" stroke-width="1.1"/></svg>
<div class="a" style="left:1629.2px;top:45.5px;width:1.6px;height:25px;background:#cfcfcf"></div>
<svg style="left:1638.75px;top:48.35px" width="20.5" height="20.5" viewBox="0 0 20.5 20.5"><rect x="1" y="1" width="18.5" height="18.5" rx="3.4" fill="none" stroke="#222" stroke-width="1.4" stroke-dasharray="3.7 2.4"/><path d="M10.2 6 V14.6 M5.9 10.3 H14.5" stroke="#222" stroke-width="1.7"/></svg>
<div class="a" style="left:1667.2px;top:45.5px;width:1.6px;height:25px;background:#cfcfcf"></div>
<svg style="left:1679px;top:48.5px" width="18" height="19" viewBox="0 0 18 19"><path d="M4 2.4 C2.4 2.4 2.2 3.4 2.2 4.6 V7.4 C2.2 8.6 1.6 9.2 0.6 9.4 C1.6 9.6 2.2 10.2 2.2 11.4 V15 C2.2 16.2 2.4 17.2 4 17.2 M15.4 9.6 C15.6 9.8 16 10.2 16 11.4 V15 C16 16.2 15.8 17.2 14.2 17.2" fill="none" stroke="#333" stroke-width="1.1"/><path d="M9 6.6 L13.4 8.8 V13.2 L9 15.4 L4.6 13.2 V8.8Z M4.6 8.8 L9 11 L13.4 8.8 M9 11 V15.4" fill="#fff" stroke="#333" stroke-width="1" stroke-linejoin="round"/><circle cx="13.6" cy="3" r="2.1" fill="#222"/><path d="M13.6 0 V8" stroke="#222" stroke-width="1.2" stroke-dasharray="1.2 1"/></svg>
<svg style="left:1700.7px;top:54.8px" width="11" height="7" viewBox="0 0 11 7"><path d="M1.2 1.4 L5.5 5.4 L9.8 1.4" fill="none" stroke="#222" stroke-width="1.7"/></svg>
<div class="a" style="left:1733px;top:42px;width:161px;height:32px;background:#f0f0f0;border-radius:5px"></div>
<span class="t" style="left:1742.4px;top:49.6px;font-size:15px;color:#2a2a2a;transform:scaleX(0.907);">Search tools...</span>
<div class="a" style="left:1833px;top:49.5px;width:33.5px;height:19px;border:1px solid #b4b4b4;border-radius:2.5px;box-sizing:border-box;background:#f7f7f7"></div>
<div class="a" style="left:1867.5px;top:49.5px;width:16.5px;height:19px;border:1px solid #b4b4b4;border-radius:2.5px;box-sizing:border-box;background:#f7f7f7"></div>
<span class="t" style="left:1836px;top:52.1px;font-size:11.5px;color:#333;transform:scaleX(1.069);">alt/</span>
<svg style="left:1853px;top:54px" width="11" height="9" viewBox="0 0 11 9"><path d="M0.5 2 H3.6 L7 7.4 H10.5 M6.6 2 H10.5" fill="none" stroke="#333" stroke-width="1"/></svg>
<span class="t" style="left:1873px;top:52.1px;font-size:11.5px;color:#333;transform:scaleX(0.974);">c</span>
<!-- leftpanel -->
<svg style="left:13px;top:83.5px" width="17" height="19" viewBox="0 0 17 19"><circle cx="3" cy="9.5" r="3" fill="#222"/><path d="M3 0.5 V5 M3 14 V18.6" stroke="#222" stroke-width="1.5" stroke-dasharray="1.6 1.4"/><path d="M12.4 10 V18 M8.4 14 H16.4" stroke="#1b5faa" stroke-width="1.8"/></svg>
<svg style="left:10px;top:119.5px" width="21" height="17" viewBox="0 0 21 17"><ellipse cx="10.6" cy="6.6" rx="9.8" ry="6.3" fill="#222"/><path d="M4.4 10.4 L1.6 16.4 L9.6 12.2Z" fill="#222"/></svg>
<svg style="left:12px;top:154px" width="18" height="18" viewBox="0 0 18 18"><path d="M14.4 10.6 V15 C14.4 16.4 13.6 17 12.4 17 H3 C1.6 17 1 16.4 1 15 V3 C1 1.6 1.6 1 3 1 H12.4 C13.6 1 14.4 1.6 14.4 3" fill="none" stroke="#222" stroke-width="1.6"/><path d="M3.6 5 H11.4 M3.6 8.4 H9.4 M3.6 11.8 H6.6" stroke="#222" stroke-width="1.6"/><path d="M7.8 13.4 L8.6 10.4 L14.6 4.2 L17 6.6 L11 12.6Z" fill="#222"/></svg>
<svg style="left:11px;top:189px" width="19" height="18.5" viewBox="0 0 19 18.5"><circle cx="10.6" cy="10.4" r="6.6" fill="none" stroke="#222" stroke-width="1.7"/><path d="M8.4 1 H12.8 M10.6 1 V3.6 M10.6 10.4 L13.4 7" stroke="#222" stroke-width="1.6"/><path d="M0.6 7.6 H4 M0 10.4 H3.4 M1.4 13.4 H4.4" stroke="#222" stroke-width="1.3"/></svg>
<div class="a" style="left:0;top:216.5px;width:40px;height:1px;background:#dcdcdc"></div>
<svg style="left:12px;top:225px" width="16" height="18" viewBox="0 0 16 18"><rect x="1" y="1" width="14" height="16" rx="1.6" fill="none" stroke="#222" stroke-width="1.6"/><path d="M8.4 5 H12.4 M8.4 9 H12.4 M8.4 13 H12.4" stroke="#222" stroke-width="1.7"/><path d="M3 4.6 L4.4 6 L6.8 3.2 M3 8.6 L4.4 10 L6.8 7.2 M3 12.6 L4.4 14 L6.8 11.2" fill="none" stroke="#222" stroke-width="1.2"/></svg>
<div class="a" style="left:40.4px;top:76px;width:204.6px;height:974px;background:#fff;border-top:1px solid #d0d0d0;border-right:1px solid #d0d0d0"></div>
<svg style="left:51px;top:91.5px" width="16" height="17" viewBox="0 0 16 17"><path d="M1 1 H15 L9.6 8 V15.4 L6.4 12.8 V8Z" fill="none" stroke="#222" stroke-width="1.3" stroke-linejoin="round"/></svg>
<div class="a" style="left:79px;top:84px;width:158px;height:29.6px;border:1px solid #a6a6a6;border-radius:3.5px;box-sizing:border-box;background:#fff"></div>
<span class="t" style="left:86px;top:92.4px;font-size:14px;color:#8c8c8c;font-style:italic;transform:scaleX(0.909);">Filter by name or type</span>
<span class="t" style="left:44px;top:122.98px;font-size:14.2px;color:#222;font-weight:700;transform:scaleX(0.916);">Features (20)</span>
<svg style="left:145px;top:122px" width="20" height="16" viewBox="0 0 20 16"><path d="M1 14.6 V1.6 H7 L8.6 3.6 H19 V14.6Z" fill="none" stroke="#b8b8b8" stroke-width="1.1"/><path d="M5.4 6 V12.4 M2.2 9.2 H8.6" stroke="#8f9bdc" stroke-width="1.5"/></svg>
<div class="a" style="left:178.5px;top:123px;width:4.4px;height:14.5px;background:#222"></div><div class="a" style="left:186.6px;top:123px;width:4.4px;height:14.5px;background:#222"></div>
<svg style="left:205.5px;top:120.5px" width="19" height="19" viewBox="0 0 19 19"><circle cx="9.4" cy="10.6" r="7.1" fill="none" stroke="#222" stroke-width="1.7"/><path d="M7 1 H11.8 M9.4 1 V3.4 M9.4 10.6 L12.6 14.2 M14.8 4 L16 2.8" stroke="#222" stroke-width="1.6"/></svg>
<div class="a" style="left:59px;top:300.5px;width:181px;height:25px;background:#f3f3f3"></div>
<div class="a" style="left:40px;top:379px;width:200px;height:23px;background:#e9eef2;border-bottom:1px solid #a7d3ee"></div>
<div class="a" style="left:40px;top:457px;width:200px;height:23px;background:#e9eef2;border-bottom:1px solid #a7d3ee"></div>
<div class="a" style="left:40px;top:810px;width:200px;height:24px;background:#b0daf3"></div>
<div class="a" style="left:49px;top:170px;width:1px;height:103px;background:#cfcfcf"></div>
<div class="a" style="left:45px;top:273px;width:9px;height:1px;background:#cfcfcf"></div>
<div class="a" style="left:49px;top:300px;width:1px;height:26px;background:#cfcfcf"></div>
<div class="a" style="left:45px;top:326px;width:9px;height:1px;background:#cfcfcf"></div>
<div class="a" style="left:49px;top:404px;width:1px;height:104px;background:#cfcfcf"></div>
<div class="a" style="left:45px;top:508px;width:9px;height:1px;background:#cfcfcf"></div>
<svg style="left:44px;top:153px" width="13" height="8" viewBox="0 0 13 8"><path d="M1.2 1.2 L6.4 6.2 L11.6 1.2" fill="none" stroke="#4a4a4a" stroke-width="1.9"/></svg>
<span class="t" style="left:63px;top:149.1px;font-size:14px;color:#1f1f1f;transform:scaleX(0.952);">Default geometry</span>
<svg style="left:67.5px;top:178.5px" width="9" height="9" viewBox="0 0 9 9"><circle cx="4.5" cy="4.5" r="3.4" fill="#fff" stroke="#444" stroke-width="1"/><circle cx="4.5" cy="4.5" r="1.5" fill="#444"/></svg>
<span class="t" style="left:85px;top:175.1px;font-size:14px;color:#1f1f1f;transform:scaleX(0.937);">Origin</span>
<svg style="left:65px;top:201px" width="16" height="16" viewBox="0 0 16 16"><path d="M1 1.4 L14.6 3.4 V15 L1 12.6Z" fill="#e4e4e4" stroke="#b4b4b4" stroke-width="1" stroke-linejoin="round"/><path d="M8 2.6 V8.6 L14.6 9.6" fill="none" stroke="#b4b4b4" stroke-width="1"/></svg>
<span class="t" style="left:85px;top:201.1px;font-size:14px;color:#a9a9a9;transform:scaleX(0.975);">Top</span>
<svg style="left:65px;top:227px" width="16" height="16" viewBox="0 0 16 16"><path d="M1 1.4 L14.6 3.4 V15 L1 12.6Z" fill="#e4e4e4" stroke="#b4b4b4" stroke-width="1" stroke-linejoin="round"/><path d="M8 2.6 V8.6 L14.6 9.6" fill="none" stroke="#b4b4b4" stroke-width="1"/></svg>
<span class="t" style="left:85px;top:227.1px;font-size:14px;color:#a9a9a9;transform:scaleX(0.979);">Front</span>
<svg style="left:65px;top:253px" width="16" height="16" viewBox="0 0 16 16"><path d="M1 1.4 L14.6 3.4 V15 L1 12.6Z" fill="#e4e4e4" stroke="#b4b4b4" stroke-width="1" stroke-linejoin="round"/><path d="M8 2.6 V8.6 L14.6 9.6" fill="none" stroke="#b4b4b4" stroke-width="1"/></svg>
<span class="t" style="left:85px;top:253.1px;font-size:14px;color:#a9a9a9;transform:scaleX(0.949);">Right</span>
<svg style="left:44px;top:283px" width="13" height="8" viewBox="0 0 13 8"><path d="M1.2 1.2 L6.4 6.2 L11.6 1.2" fill="none" stroke="#4a4a4a" stroke-width="1.9"/></svg>
<svg style="left:66px;top:279px" width="15" height="16" viewBox="0 0 15 16"><path d="M7.5 1 L14 4.4 V11.6 L7.5 15 L1 11.6 V4.4Z M1 4.4 L7.5 7.8 L14 4.4 M7.5 7.8 V15" fill="#fff" stroke="#333" stroke-width="1.1" stroke-linejoin="round"/><path d="M7.5 7.8 L14 4.4 V11.6 L7.5 15Z" fill="#e0e0e0" stroke="#333" stroke-width="1"/></svg>
<span class="t" style="left:86px;top:279.1px;font-size:14px;color:#1f1f1f;transform:scaleX(0.910);">Origin Cube</span>
<svg style="left:197px;top:277px" width="6" height="20" viewBox="0 0 6 20"><circle cx="3" cy="10" r="2.7" fill="#222"/><path d="M3 0.4 V6 M3 14 V19.6" stroke="#222" stroke-width="1.4" stroke-dasharray="1.5 1.3"/></svg>
<svg style="left:65px;top:305px" width="16" height="16" viewBox="0 0 16 16"><circle cx="8" cy="8" r="7.2" fill="none" stroke="#b4b4b4" stroke-width="1"/><circle cx="8" cy="8" r="5.4" fill="none" stroke="#b4b4b4" stroke-width="1"/><path d="M8 2.8 V8 H13.2" fill="none" stroke="#b4b4b4" stroke-width="1"/></svg>
<span class="t" style="left:85px;top:305.1px;font-size:14px;color:#a9a9a9;transform:scaleX(0.934);">Mate connector 1</span>
<svg style="left:45.5px;top:330px" width="17.5" height="17.5" viewBox="0 0 16 16"><path d="M3.6 11.6 L4.8 8 L11.6 1.2 L14 3.6 L7.2 10.4Z M4.8 8 L7.2 10.4" fill="none" stroke="#b0b0b0" stroke-width="1" stroke-linejoin="round"/><path d="M0.4 14.6 H15.6" stroke="#9fb4d8" stroke-width="1.1"/></svg>
<span class="t" style="left:66px;top:331.1px;font-size:14px;color:#a9a9a9;transform:scaleX(0.941);">Layout Sketch</span>
<svg style="left:46.5px;top:358.5px" width="8" height="13" viewBox="0 0 8 13"><path d="M1.2 1.2 L6.2 6.4 L1.2 11.6" fill="none" stroke="#4a4a4a" stroke-width="1.9"/></svg>
<svg style="left:66px;top:358px" width="16" height="13" viewBox="0 0 16 13"><path d="M0.7 12 V1 H5.6 L7 2.8 H15.2 V12Z" fill="none" stroke="#8a8a8a" stroke-width="1.1"/></svg>
<span class="t" style="left:86px;top:357.1px;font-size:14px;color:#1f1f1f;transform:scaleX(0.916);">Tube (3)</span>
<svg style="left:44px;top:387px" width="13" height="8" viewBox="0 0 13 8"><path d="M1.2 1.2 L6.4 6.2 L11.6 1.2" fill="none" stroke="#4a4a4a" stroke-width="1.9"/></svg>
<svg style="left:66px;top:384px" width="16" height="13" viewBox="0 0 16 13"><path d="M0.7 12 V1 H5.6 L7 2.8 H15.2 V12Z" fill="none" stroke="#8a8a8a" stroke-width="1.1"/></svg>
<span class="t" style="left:86px;top:383.1px;font-size:14px;color:#1f1f1f;transform:scaleX(0.926);">Plate (3)</span>
<svg style="left:64.5px;top:408px" width="17.5" height="17.5" viewBox="0 0 16 16"><path d="M3.6 11.6 L4.8 8 L11.6 1.2 L14 3.6 L7.2 10.4Z M4.8 8 L7.2 10.4" fill="none" stroke="#b0b0b0" stroke-width="1" stroke-linejoin="round"/><path d="M0.4 14.6 H15.6" stroke="#9fb4d8" stroke-width="1.1"/></svg>
<span class="t" style="left:85px;top:409.1px;font-size:14px;color:#a9a9a9;transform:scaleX(0.942);">Plate Sketch</span>
<svg style="left:65px;top:435px" width="16" height="16" viewBox="0 0 16 16"><path d="M1 1 H12.4 L15 3.2 V15 H3.4 L1 12.8Z" fill="#fff" stroke="#333" stroke-width="0.9" stroke-linejoin="round"/><path d="M12.4 1 L15 3.2 M1 12.8 L3.4 15 M3.4 3.2 H15 M3.4 3.2 V15 M1 1 L3.4 3.2" fill="none" stroke="#555" stroke-width="0.7"/><path d="M5.6 5.6 H12.6 L14.6 7.2 V14.6 H7.4 L5.6 13Z" fill="#b0b0b0" stroke="#444" stroke-width="0.7"/><rect x="7.4" y="7.4" width="7.2" height="7.2" fill="#8e8e8e" stroke="#444" stroke-width="0.7"/></svg>
<span class="t" style="left:85px;top:435.1px;font-size:14px;color:#1f1f1f;transform:scaleX(0.946);">Plate Extrude</span>
<svg style="left:65px;top:461px" width="16" height="16" viewBox="0 0 16 16"><path d="M1 3 L3.4 1 H5.4 L7.4 4 V9.6 L8.6 10.6 V15 H3.4 L1 13.2Z" fill="#fff" stroke="#333" stroke-width="1" stroke-linejoin="round"/><path d="M3.4 4.8 V15" stroke="#333" stroke-width="0.9"/><path d="M10.2 1 H12.6 L15 3.2 V15 H10.2 V10.8 L11.2 10 V4Z" fill="#8a8a8a" stroke="#333" stroke-width="1" stroke-linejoin="round"/><path d="M5.8 1.6 L8.8 5.4 V10.6 L6.2 7.6Z" fill="#d0d0d0"/></svg>
<span class="t" style="left:85px;top:461.1px;font-size:14px;color:#1f1f1f;transform:scaleX(0.968);">Plate Mirror</span>
<div class="a" style="left:64px;top:492px;width:171px;height:6.5px;background:#a9a9a9"></div>
<svg style="left:46.5px;top:514.5px" width="8" height="13" viewBox="0 0 8 13"><path d="M1.2 1.2 L6.2 6.4 L1.2 11.6" fill="none" stroke="#4a4a4a" stroke-width="1.9"/></svg>
<svg style="left:66px;top:514px" width="16" height="13" viewBox="0 0 16 13"><path d="M0.7 12 V1 H5.6 L7 2.8 H15.2 V12Z" fill="none" stroke="#b9b9b9" stroke-width="1.1"/></svg>
<span class="t" style="left:87px;top:513.1px;font-size:14px;color:#a9a9a9;font-style:italic;transform:scaleX(0.906);">2x1 Tube (2)</span>
<svg style="left:46.5px;top:540.5px" width="8" height="13" viewBox="0 0 8 13"><path d="M1.2 1.2 L6.2 6.4 L1.2 11.6" fill="none" stroke="#4a4a4a" stroke-width="1.9"/></svg>
<svg style="left:66px;top:540px" width="16" height="13" viewBox="0 0 16 13"><path d="M0.7 12 V1 H5.6 L7 2.8 H15.2 V12Z" fill="none" stroke="#b9b9b9" stroke-width="1.1"/></svg>
<span class="t" style="left:87px;top:539.1px;font-size:14px;color:#a9a9a9;font-style:italic;transform:scaleX(0.935);">Polycarb Floor (2)</span>
<svg style="left:46px;top:565px" width="15" height="16" viewBox="0 0 15 16"><path d="M3 2 L11 12.6 M7.4 1.6 L13.6 9.4" stroke="#c4c4c4" stroke-width="0.9"/><circle cx="5" cy="4.6" r="3.2" fill="#fff" stroke="#c0c0c0" stroke-width="1"/><circle cx="11.6" cy="11.6" r="2.2" fill="#fff" stroke="#c0c0c0" stroke-width="1"/></svg>
<span class="t" style="left:67px;top:565.1px;font-size:14px;color:#a9a9a9;font-style:italic;transform:scaleX(0.929);">Feeeder Wheel Belt</span>
<svg style="left:197px;top:563px" width="6" height="20" viewBox="0 0 6 20"><circle cx="3" cy="10" r="2.7" fill="#222"/><path d="M3 0.4 V6 M3 14 V19.6" stroke="#222" stroke-width="1.4" stroke-dasharray="1.5 1.3"/></svg>
<svg style="left:45px;top:590.5px" width="17" height="16" viewBox="0 0 17 16"><path d="M1.4 5.6 L14.6 4.4 L15.6 13.2 L2.4 14.8Z" fill="#a6a6a6"/><path d="M0.2 8.6 L1.6 8.4 L2 11.4 L0.6 11.6Z M15 7.4 L16.4 7.2 L16.8 10 L15.4 10.2Z" fill="#a6a6a6"/><circle cx="5.6" cy="9.6" r="2.3" fill="#fff"/><circle cx="11.2" cy="9" r="2.3" fill="#fff"/><path d="M5.6 9.6 V8 A1.6 1.6 0 0 1 7 10.2Z M11.2 9 V7.4 A1.6 1.6 0 0 1 12.6 9.6Z" fill="#a6a6a6"/><path d="M8.2 5 V1.4" stroke="#a6a6a6" stroke-width="1.2"/><path d="M3.6 0.8 L4.8 2.8 L6 0.8 M10.6 0.8 L11.8 2.8 L13 0.8" fill="none" stroke="#bbb" stroke-width="0.8"/></svg>
<span class="t" style="left:67px;top:591.1px;font-size:14px;color:#a9a9a9;font-style:italic;transform:scaleX(0.928);">Feeder Wheel Shaft</span>
<svg style="left:197px;top:589px" width="6" height="20" viewBox="0 0 6 20"><circle cx="3" cy="10" r="2.7" fill="#222"/><path d="M3 0.4 V6 M3 14 V19.6" stroke="#222" stroke-width="1.4" stroke-dasharray="1.5 1.3"/></svg>
<svg style="left:46.5px;top:618.5px" width="8" height="13" viewBox="0 0 8 13"><path d="M1.2 1.2 L6.2 6.4 L1.2 11.6" fill="none" stroke="#4a4a4a" stroke-width="1.9"/></svg>
<svg style="left:66px;top:618px" width="16" height="13" viewBox="0 0 16 13"><path d="M0.7 12 V1 H5.6 L7 2.8 H15.2 V12Z" fill="none" stroke="#b9b9b9" stroke-width="1.1"/></svg>
<span class="t" style="left:87px;top:617.1px;font-size:14px;color:#a9a9a9;font-style:italic;transform:scaleX(0.921);">Pocketing (2)</span>
<div class="a" style="left:40.4px;top:704px;width:199.6px;height:1px;background:#d8d8d8"></div>
<svg style="left:44px;top:714px" width="13" height="8" viewBox="0 0 13 8"><path d="M1.2 1.2 L6.4 6.2 L11.6 1.2" fill="none" stroke="#4a4a4a" stroke-width="1.9"/></svg>
<span class="t" style="left:63px;top:710.1px;font-size:14px;color:#1f1f1f;transform:scaleX(0.941);">Parts (4)</span>
<svg style="left:65px;top:736px" width="16" height="16" viewBox="0 0 16 16"><path d="M1 9.2 L3.4 7.4 H6.6 V3.6 L9 1.2 H12.6 L15 3.6 V15 H3.4 L1 13.2Z" fill="#fff" stroke="#333" stroke-width="1" stroke-linejoin="round"/><path d="M1 9.2 L3.4 11 H9 V5.4 H15 M3.4 11 V15 M9 5.4 L6.6 3.6" fill="none" stroke="#333" stroke-width="0.9"/></svg>
<span class="t" style="left:85px;top:736.1px;font-size:14px;color:#1f1f1f;transform:scaleX(0.910);">Origin Cube</span>
<svg style="left:65px;top:762px" width="16" height="16" viewBox="0 0 16 16"><path d="M1 9.2 L3.4 7.4 H6.6 V3.6 L9 1.2 H12.6 L15 3.6 V15 H3.4 L1 13.2Z" fill="#fff" stroke="#333" stroke-width="1" stroke-linejoin="round"/><path d="M1 9.2 L3.4 11 H9 V5.4 H15 M3.4 11 V15 M9 5.4 L6.6 3.6" fill="none" stroke="#333" stroke-width="0.9"/></svg>
<span class="t" style="left:85px;top:762.1px;font-size:14px;color:#1f1f1f;transform:scaleX(0.928);">Tube 1"x1"x12"</span>
<svg style="left:65px;top:788px" width="16" height="16" viewBox="0 0 16 16"><path d="M1 9.2 L3.4 7.4 H6.6 V3.6 L9 1.2 H12.6 L15 3.6 V15 H3.4 L1 13.2Z" fill="#fff" stroke="#333" stroke-width="1" stroke-linejoin="round"/><path d="M1 9.2 L3.4 11 H9 V5.4 H15 M3.4 11 V15 M9 5.4 L6.6 3.6" fill="none" stroke="#333" stroke-width="0.9"/></svg>
<span class="t" style="left:85px;top:788.1px;font-size:14px;color:#1f1f1f;transform:scaleX(0.940);">Plate</span>
<svg style="left:65px;top:814px" width="16" height="16" viewBox="0 0 16 16"><path d="M1 9.2 L3.4 7.4 H6.6 V3.6 L9 1.2 H12.6 L15 3.6 V15 H3.4 L1 13.2Z" fill="#fff" stroke="#333" stroke-width="1" stroke-linejoin="round"/><path d="M1 9.2 L3.4 11 H9 V5.4 H15 M3.4 11 V15 M9 5.4 L6.6 3.6" fill="none" stroke="#333" stroke-width="0.9"/></svg>
<span class="t" style="left:85px;top:814.1px;font-size:14px;color:#1f1f1f;transform:scaleX(0.897);">zREF Plate</span>
<div class="a" style="left:246px;top:538px;width:31px;height:33px;border:1px solid #c9c9c9;border-left:0;box-sizing:border-box;background:#fff"></div>
<svg style="left:251px;top:547px" width="20" height="17" viewBox="0 0 20 17"><path d="M7 2.6 H19.4 M7 6.6 H19.4 M7 10.6 H19.4 M7 14.6 H19.4" stroke="#444" stroke-width="1.2"/><path d="M4.4 1 V16" stroke="#444" stroke-width="1.3"/><path d="M0.6 1.4 L2.6 3.6 L4.4 1.4" fill="none" stroke="#222" stroke-width="1.3"/></svg>
<!-- canvas -->
<svg style="left:0;top:0" width="1919" height="260" viewBox="0 0 1919 260"><g fill="#dfe4e8"><path d="M1830 91.5 L1836.5 100.5 H1823.5Z"/><path d="M1830 240 L1836.5 231.5 H1823.5Z"/><path d="M1756.5 166 L1765 159.5 V172.5Z"/><path d="M1903.5 166 L1895 159.5 V172.5Z"/></g><path d="M1781 117 C1789 108 1797 104 1808 101.5" fill="none" stroke="#dfe4e8" stroke-width="4.2"/><path d="M1776 112 L1788 117 L1777.5 125Z" fill="#dfe4e8"/><path d="M1879 117 C1871 108 1863 104 1852 101.5" fill="none" stroke="#dfe4e8" stroke-width="4.2"/><path d="M1884 112 L1872 117 L1882.5 125Z" fill="#dfe4e8"/><path d="M1824 124.5 L1862 133 Q1868 135 1868 141 V183 Q1868 188 1864 191 L1842 207 Q1838 209.5 1833 208 L1797 197.5 Q1793 196 1793 191 V150 Q1793 145 1797 141.5 L1816 126 Q1820 123.5 1824 124.5Z" fill="#e5e9ec" stroke="#e3e8eb" stroke-width="1"/><path d="M1822 129 L1858 137 L1838 153 L1802 144Z" fill="#fff" stroke="#fff" stroke-width="3" stroke-linejoin="round"/><path d="M1799 152 L1833 161 V201 L1799 191Z" fill="#fff" stroke="#fff" stroke-width="3" stroke-linejoin="round"/><path d="M1843 160 L1863 144 V183 L1843 199Z" fill="#fff" stroke="#fff" stroke-width="3" stroke-linejoin="round"/><path d="M1788.4 197.6 L1810 180.5" stroke="#5cb85c" stroke-width="1"/><path d="M1788.4 197.6 V147.5" stroke="#4a4ac6" stroke-width="1.2"/><path d="M1788.4 197.6 L1839.3 212.8" stroke="#dc3535" stroke-width="1.2"/><path d="M1820 152 V165 M1818.6 161.5 L1822.4 166.5 V171 M1826 161.5 L1822.4 166.5" fill="none" stroke="#b7d9c8" stroke-width="1"/></svg>
<span class="t" style="left:1785px;top:129.7px;font-size:12.5px;color:#5555cc;transform:scaleX(0.969);">Z</span>
<span class="t" style="left:1844.3px;top:206.6px;font-size:13px;color:#dc3030;transform:scaleX(0.900);">X</span>
<span class="t" style="left:1814.8px;top:178.2px;font-size:12.5px;color:#2e2e2e;transform-origin:50% 50%;transform:translate(-50%,-50%) matrix(0.9,0.235,0,1,0,0)">Front</span>
<span class="t" style="left:1830.6px;top:139.6px;font-size:10.5px;font-style:italic;color:#333;transform-origin:50% 50%;transform:translate(-50%,-50%) matrix(0.84,0.36,-0.32,0.78,0,0)">Top</span>
<span class="t" style="left:1855.6px;top:172.4px;font-size:10.5px;font-style:italic;color:#333;transform-origin:50% 50%;transform:translate(-50%,-50%) rotate(-62deg) scale(0.92,0.8)">Right</span>
<svg style="left:1865.5px;top:222px" width="19.5" height="19.5" viewBox="0 0 19.5 19.5"><defs><linearGradient id="vcg" x1="0" y1="0" x2="1" y2="0"><stop offset="0" stop-color="#8a8a8a"/><stop offset="1" stop-color="#c4c4c4"/></linearGradient></defs><path d="M9.6 0.8 L18.4 3.6 V14.4 L9.2 18.8 L1 14.6 V3.6Z" fill="#fff" stroke="#555" stroke-width="1" stroke-linejoin="round"/><path d="M1 3.6 L9.2 7 V18.8 L1 14.6Z" fill="url(#vcg)"/><path d="M9.2 7 L18.4 3.6 V14.4 L9.2 18.8Z" fill="#e8e8e8"/><path d="M1 3.6 L9.2 7 L18.4 3.6 M9.2 7 V18.8" fill="none" stroke="#555" stroke-width="0.9"/></svg>
<div class="a" style="left:1892.4px;top:229.8px;border:3.8px solid transparent;border-top:4.2px solid #222;border-bottom:0"></div>
<div class="a" style="left:1888.5px;top:433px;width:32px;height:132.5px;border:1px solid #bdbdbd;box-sizing:border-box;background:#fff"></div>
<div class="a" style="left:1888.5px;top:466.5px;width:31px;height:1px;background:#bdbdbd"></div>
<div class="a" style="left:1888.5px;top:499.5px;width:31px;height:1px;background:#bdbdbd"></div>
<div class="a" style="left:1888.5px;top:532.5px;width:31px;height:1px;background:#bdbdbd"></div>
<div class="a" style="left:1888.5px;top:576px;width:32px;height:99.5px;border:1px solid #bdbdbd;box-sizing:border-box;background:#fff"></div>
<div class="a" style="left:1888.5px;top:609px;width:31px;height:1px;background:#bdbdbd"></div>
<div class="a" style="left:1888.5px;top:642px;width:31px;height:1px;background:#bdbdbd"></div>
<svg style="left:1894px;top:440px" width="21" height="21" viewBox="0 0 21 21"><path d="M2.4 14 L9 1.6 L13.6 3.4 L9.8 14Z" fill="#7a7a7a"/><path d="M9.8 14 L13.6 3.4 L18.2 6.6 L13.4 14Z" fill="#9a9a9a"/><path d="M13.4 14 L18.2 6.6 L20 9.6 L16.6 14Z" fill="#b8b8b8"/><rect x="1" y="14" width="19.4" height="6.2" fill="#fff" stroke="#555" stroke-width="1"/><rect x="11.4" y="14.5" width="8.6" height="5.2" fill="#c8c8c8"/><circle cx="4" cy="17" r="1.1" fill="none" stroke="#555" stroke-width="0.8"/></svg>
<svg style="left:1894px;top:473px" width="21" height="21" viewBox="0 0 21 21"><path d="M0.5 0.5 H9.5 V8.5 H0.5Z M3.5 0.5 V8.5 M6.5 0.5 V8.5 M0.5 3.2 H9.5 M0.5 5.8 H9.5" fill="#6d9be0" stroke="#1b5fcc" stroke-width="0.9"/><path d="M11.8 5.6 L19.4 8.4 V16 L12.4 19.8 L5.4 16.4 V9.4 M5.4 9.4 L12.4 12.4 L19.4 8.4 M12.4 12.4 V19.8" fill="none" stroke="#222" stroke-width="1.2" stroke-linejoin="round"/></svg>
<svg style="left:1894px;top:506px" width="21" height="21" viewBox="0 0 21 21"><path d="M0.5 0.5 H9.5 V8.5 H0.5Z M3.5 0.5 V8.5 M6.5 0.5 V8.5 M0.5 3.2 H9.5 M0.5 5.8 H9.5" fill="#666" stroke="#222" stroke-width="0.9"/><path d="M11.6 7.4 L16 9.4 V14 L11.6 16.4 L7.2 14 V10 M7.2 10 L11.6 12 L16 9.4 M11.6 12 V16.4" fill="#fff" stroke="#222" stroke-width="1" stroke-linejoin="round"/><path d="M11.6 12 L16 9.4 V14 L11.6 16.4Z" fill="#aaa"/><path d="M5.4 10 C4 10 3.8 11 3.8 12 V13.4 C3.8 14.2 3.2 14.8 2.4 15 C3.2 15.2 3.8 15.8 3.8 16.6 V18 C3.8 19 4 20 5.4 20 M17.2 4.6 C18.6 4.6 18.8 5.6 18.8 6.6 V11 C18.8 12 19.4 12.4 20.2 12.6 C19.4 12.8 18.8 13.4 18.8 14.2 V17.6 C18.8 18.6 18.6 19.6 17.2 19.6" fill="none" stroke="#333" stroke-width="1"/></svg>
<svg style="left:1894px;top:539px" width="21" height="21" viewBox="0 0 21 21"><path d="M0.5 0.5 H9.5 V8.5 H0.5Z M3.5 0.5 V8.5 M6.5 0.5 V8.5 M0.5 3.2 H9.5 M0.5 5.8 H9.5" fill="#666" stroke="#222" stroke-width="0.9"/><path d="M3.6 9.6 C1.4 12.6 1.4 17 3.6 20.4 M17.6 7 C20 10.4 20 16.4 17.6 20.4" fill="none" stroke="#222" stroke-width="1.5"/><path d="M6.4 18.6 C8 18.8 9 17.4 10.4 14.4 C11.6 11.6 13 9.8 15.2 10.2 M6.6 11.4 C8.6 10.4 9.8 11.6 10.4 14.4 C11 17.4 12.2 18.8 14.6 18" fill="none" stroke="#111" stroke-width="1.8"/></svg>
<div class="a" style="left:1893px;top:581px;width:24px;height:24px;border-radius:3px;background:#dadada"></div>
<svg style="left:1894.5px;top:584.5px" width="21" height="19" viewBox="0 0 21 19"><path d="M1.4 6.4 L17.6 4.8 L18.8 15.6 L2.6 17.6Z" fill="#2b2b2b"/><path d="M0.4 10.4 L1.8 10.2 L2.2 13.4 L0.8 13.6Z M18.4 8.6 L19.7 8.4 L20 11.6 L18.8 11.8Z" fill="#2b2b2b"/><circle cx="6.6" cy="11" r="2.8" fill="#fff"/><circle cx="13.6" cy="10.2" r="2.8" fill="#fff"/><path d="M6.6 11 L6.6 9 A2 2 0 0 1 8.4 11.8Z M13.6 10.2 L13.6 8.2 A2 2 0 0 1 15.4 11Z" fill="#2a6fd0"/><path d="M9.4 15.4 C11.4 15.6 13 14.8 13.6 13.6" fill="none" stroke="#fff" stroke-width="0.9"/><path d="M10 5.4 V1.4" stroke="#2b2b2b" stroke-width="1.3"/><circle cx="10" cy="1.6" r="1.1" fill="#2b2b2b"/><path d="M4.6 1 L6 3.4 L7.4 1 M12.6 1 L14 3.4 L15.4 1" fill="none" stroke="#4a7fd0" stroke-width="0.9"/></svg>
<div class="a" style="left:1893px;top:614px;width:23.5px;height:23.5px;box-sizing:border-box;border:2px solid #b9e0bb;background:#4caf50"></div>
<svg style="left:1896.8px;top:618.5px" width="16" height="15" viewBox="0 0 16 15"><path d="M1 1.6 C3.4 0.6 5.6 0.8 7.4 2 V13 C5.6 11.8 3.4 11.6 1 12.6Z M15 1.6 C12.6 0.6 10.4 0.8 8.6 2 V13 C10.4 11.8 12.6 11.6 15 12.6Z" fill="#fff"/><path d="M0.4 3 V14 H15.6 V3" fill="none" stroke="#e8f5e9" stroke-width="1"/></svg>
<div class="a" style="left:1894px;top:648px;width:21.5px;height:22.5px;box-sizing:border-box;border:1.6px solid #0c2f70;background:#1559cf"></div>
<svg style="left:1896.8px;top:652px" width="16" height="15" viewBox="0 0 16 15"><path d="M1 1.6 C3.4 0.6 5.6 0.8 7.4 2 V13 C5.6 11.8 3.4 11.6 1 12.6Z M15 1.6 C12.6 0.6 10.4 0.8 8.6 2 V13 C10.4 11.8 12.6 11.6 15 12.6Z" fill="#fff"/><path d="M0.4 3 V14 H15.6 V3" fill="none" stroke="#e3ecfb" stroke-width="1"/></svg>
<svg style="left:1822px;top:1029.5px" width="17" height="13" viewBox="0 0 17 13"><path d="M5.4 4 V9.6 C5.4 12.6 16.2 12.6 16.2 9.6 V4Z" fill="#f0f0f0" stroke="#222" stroke-width="1.1"/><path d="M0.6 7.6 H5.4 V12.2 H0.6Z" fill="#f4f4f4" stroke="#222" stroke-width="1.1"/><path d="M0.6 12.2 H9.6" stroke="#222" stroke-width="1.1"/><ellipse cx="10.8" cy="4" rx="5.4" ry="3.2" fill="#dcdcdc" stroke="#222" stroke-width="1.1"/><ellipse cx="10.8" cy="3.9" rx="2.5" ry="1.3" fill="#fff" stroke="#222" stroke-width="0.9"/><path d="M2.2 10.4 V12 M3.8 10.4 V12 M6.8 10.8 V12.2 M9 11.2 V12.4 M11.4 11.2 V12.4 M13.6 10.8 V12" stroke="#333" stroke-width="0.6"/></svg>
<svg style="left:1855px;top:1029.5px" width="21" height="14" viewBox="0 0 21 14"><path d="M0.8 13 V11 C0.8 5 5 0.8 10.4 0.8 C15.8 0.8 20 5 20 11 V13Z" fill="#eee" stroke="#222" stroke-width="1.2"/><path d="M5.4 13 C5 9 7 6.4 10.4 6.4 C13.8 6.4 15.8 9 15.4 13" fill="#fff" stroke="#222" stroke-width="1.3"/><path d="M6 9.4 C7 7.4 8.6 6.6 10.4 6.6 C12.2 6.6 13.8 7.4 14.8 9.4 L13 10.4 H7.8Z" fill="#444"/><path d="M3 10 L4 10.2 M3.8 6.8 L4.8 7.4 M6 4.4 L6.6 5.2 M10.4 2.6 V3.6 M14.8 4.4 L14.2 5.2 M17 6.8 L16 7.4 M17.8 10 L16.8 10.2" stroke="#555" stroke-width="0.6"/></svg>
<svg style="left:1892.5px;top:1028.5px" width="15" height="15" viewBox="0 0 15 15"><path d="M2 1.6 H13 M7.5 0.6 V12" stroke="#222" stroke-width="1.5"/><path d="M0.6 9 L2.6 2 L4.6 9Z M10.4 9 L12.4 2 L14.4 9Z" fill="none" stroke="#333" stroke-width="0.7"/><path d="M0.4 9 H4.8 V10.2 H0.4Z M10.2 9 H14.6 V10.2 H10.2Z" fill="#222"/><path d="M0.6 13.4 H14.4" stroke="#222" stroke-width="2"/></svg>
<svg id="scene" width="1919" height="1079" viewBox="0 0 1919 1079" style="position:absolute;left:0;top:0">
<path d="M663.4,746.5 L661.8,747.6 L660.3,748.1 L658.9,748.0 L657.7,747.3 L656.7,746.1 L655.9,744.3 L655.4,742.0 L655.3,739.4 L655.3,445.2 L655.4,442.3 L655.9,439.3 L656.7,436.2 L657.7,433.2 L658.9,430.4 L660.3,427.8 L661.8,425.7 L663.4,424.1 L696.0,395.8 L823.0,305.3 L824.4,304.4 L825.7,303.6 L827.1,302.8 L828.4,302.1 L829.8,301.6 L831.1,301.1 L832.4,300.7 L833.7,300.4 L834.9,300.2 L836.2,300.1 L837.4,300.1 L838.6,300.2 L839.8,300.4 L841.0,300.6 L842.1,301.0 L843.2,301.5 L844.3,302.0 L845.3,302.6 L846.3,303.4 L847.3,304.2 L848.2,305.1 L849.1,306.1 L850.0,307.2 L850.8,308.4 L851.6,309.6 L852.4,310.9 L853.1,312.4 L853.8,313.9 L854.4,315.4 L855.0,317.1 L855.5,318.8 L856.0,320.6 L856.5,322.4 L856.9,324.4 L857.2,326.3 L857.5,328.4 L857.8,330.5 L858.0,332.7 L858.2,334.9 L858.3,337.1 L867.2,555.0 L867.1,557.9 L866.7,561.0 L866.0,564.3 L865.0,567.4 L863.7,570.4 L862.3,573.1 L860.7,575.3 L859.0,577.1ZM846.0,352.4 L845.9,348.0 L845.5,343.9 L844.9,340.1 L844.0,336.6 L842.9,333.5 L841.5,330.8 L840.0,328.5 L838.3,326.7 L836.3,325.4 L834.3,324.5 L832.0,324.1 L829.7,324.2 L827.3,324.8 L824.7,325.9 L822.2,327.5 L819.6,329.5 L817.0,331.9 L814.4,334.8 L811.9,338.1 L809.5,341.7 L807.1,345.7 L804.9,349.9 L802.8,354.4 L800.9,359.1 L799.2,363.9 L797.6,368.8 L796.3,373.8 L795.2,378.8 L794.3,383.8 L793.7,388.7 L793.3,393.5 L793.2,398.1 L793.3,402.5 L793.7,406.6 L794.3,410.4 L795.2,413.9 L796.3,416.9 L797.6,419.6 L799.2,421.9 L800.9,423.7 L802.8,425.1 L804.9,426.0 L807.1,426.3 L809.5,426.2 L811.9,425.6 L814.4,424.5 L817.0,423.0 L819.6,421.0 L822.2,418.5 L824.7,415.6 L827.3,412.3 L829.7,408.7 L832.0,404.8 L834.3,400.5 L836.3,396.1 L838.3,391.4 L840.0,386.6 L841.5,381.6 L842.9,376.6 L844.0,371.6 L844.9,366.6 L845.5,361.7 L845.9,356.9ZM698.3,503.4 L698.2,499.3 L697.7,495.6 L696.9,492.3 L695.8,489.5 L694.5,487.1 L692.9,485.3 L691.0,484.2 L689.0,483.6 L686.8,483.6 L684.5,484.2 L682.2,485.5 L679.7,487.3 L677.3,489.7 L674.9,492.6 L672.6,495.9 L670.4,499.7 L668.4,503.7 L666.6,508.1 L665.0,512.7 L663.6,517.3 L662.6,522.0 L661.8,526.7 L661.3,531.2 L661.2,535.6 L661.3,539.6 L661.8,543.4 L662.6,546.7 L663.6,549.5 L665.0,551.8 L666.6,553.6 L668.4,554.8 L670.4,555.4 L672.6,555.4 L674.9,554.7 L677.3,553.5 L679.7,551.7 L682.2,549.3 L684.5,546.4 L686.8,543.1 L689.0,539.3 L691.0,535.2 L692.9,530.9 L694.5,526.3 L695.8,521.6 L696.9,516.9 L697.7,512.3 L698.2,507.7Z" fill="rgb(121,113,87)" fill-rule="evenodd"/>
<path d="M658.9,748.0 L657.7,747.3 L671.8,751.4 L673.0,752.1Z" fill="rgb(139,129,93)" stroke="rgb(139,129,93)" stroke-width="0.6"/>
<path d="M657.7,747.3 L656.7,746.1 L670.8,750.1 L671.8,751.4Z" fill="rgb(132,123,88)" stroke="rgb(132,123,88)" stroke-width="0.6"/>
<path d="M656.7,746.1 L655.9,744.3 L670.0,748.3 L670.8,750.1Z" fill="rgb(127,118,85)" stroke="rgb(127,118,85)" stroke-width="0.6"/>
<path d="M655.9,744.3 L655.4,742.0 L669.6,746.1 L670.0,748.3Z" fill="rgb(123,115,82)" stroke="rgb(123,115,82)" stroke-width="0.6"/>
<path d="M655.4,742.0 L655.3,739.4 L669.4,743.5 L669.6,746.1Z" fill="rgb(122,113,81)" stroke="rgb(122,113,81)" stroke-width="0.6"/>
<path d="M655.3,739.4 L655.3,445.2 L669.4,449.3 L669.4,743.5Z" fill="rgb(121,113,81)" stroke="rgb(121,113,81)" stroke-width="0.6"/>
<path d="M655.3,445.2 L655.4,442.3 L669.6,446.4 L669.4,449.3Z" fill="rgb(126,117,84)" stroke="rgb(126,117,84)" stroke-width="0.6"/>
<path d="M655.4,442.3 L655.9,439.3 L670.0,443.4 L669.6,446.4Z" fill="rgb(137,127,91)" stroke="rgb(137,127,91)" stroke-width="0.6"/>
<path d="M655.9,439.3 L656.7,436.2 L670.8,440.3 L670.0,443.4Z" fill="rgb(148,138,99)" stroke="rgb(148,138,99)" stroke-width="0.6"/>
<path d="M656.7,436.2 L657.7,433.2 L671.8,437.3 L670.8,440.3Z" fill="rgb(161,149,107)" stroke="rgb(161,149,107)" stroke-width="0.6"/>
<path d="M657.7,433.2 L658.9,430.4 L673.0,434.4 L671.8,437.3Z" fill="rgb(174,161,125)" stroke="rgb(174,161,125)" stroke-width="0.6"/>
<path d="M658.9,430.4 L660.3,427.8 L674.4,431.9 L673.0,434.4Z" fill="rgb(186,173,134)" stroke="rgb(186,173,134)" stroke-width="0.6"/>
<path d="M660.3,427.8 L661.8,425.7 L676.0,429.8 L674.4,431.9Z" fill="rgb(198,184,143)" stroke="rgb(198,184,143)" stroke-width="0.6"/>
<path d="M661.8,425.7 L663.4,424.1 L677.5,428.1 L676.0,429.8Z" fill="rgb(209,194,150)" stroke="rgb(209,194,150)" stroke-width="0.6"/>
<path d="M663.4,424.1 L696.0,395.8 L710.1,399.9 L677.5,428.1Z" fill="rgb(214,199,154)" stroke="rgb(214,199,154)" stroke-width="0.6"/>
<path d="M696.0,395.8 L823.0,305.3 L837.1,309.4 L710.1,399.9Z" fill="rgb(213,198,153)" stroke="rgb(213,198,153)" stroke-width="0.6"/>
<path d="M823.0,305.3 L824.4,304.4 L838.5,308.5 L837.1,309.4Z" fill="rgb(213,197,153)" stroke="rgb(213,197,153)" stroke-width="0.6"/>
<path d="M824.4,304.4 L825.7,303.6 L839.8,307.6 L838.5,308.5Z" fill="rgb(212,197,152)" stroke="rgb(212,197,152)" stroke-width="0.6"/>
<path d="M825.7,303.6 L827.1,302.8 L841.2,306.9 L839.8,307.6Z" fill="rgb(211,196,152)" stroke="rgb(211,196,152)" stroke-width="0.6"/>
<path d="M827.1,302.8 L828.4,302.1 L842.5,306.2 L841.2,306.9Z" fill="rgb(211,196,151)" stroke="rgb(211,196,151)" stroke-width="0.6"/>
<path d="M828.4,302.1 L829.8,301.6 L843.9,305.7 L842.5,306.2Z" fill="rgb(210,195,151)" stroke="rgb(210,195,151)" stroke-width="0.6"/>
<path d="M829.8,301.6 L831.1,301.1 L845.2,305.2 L843.9,305.7Z" fill="rgb(209,194,150)" stroke="rgb(209,194,150)" stroke-width="0.6"/>
<path d="M831.1,301.1 L832.4,300.7 L846.5,304.8 L845.2,305.2Z" fill="rgb(208,193,150)" stroke="rgb(208,193,150)" stroke-width="0.6"/>
<path d="M832.4,300.7 L833.7,300.4 L847.8,304.5 L846.5,304.8Z" fill="rgb(207,192,149)" stroke="rgb(207,192,149)" stroke-width="0.6"/>
<path d="M833.7,300.4 L834.9,300.2 L849.0,304.3 L847.8,304.5Z" fill="rgb(206,192,148)" stroke="rgb(206,192,148)" stroke-width="0.6"/>
<path d="M834.9,300.2 L836.2,300.1 L850.3,304.2 L849.0,304.3Z" fill="rgb(205,191,148)" stroke="rgb(205,191,148)" stroke-width="0.6"/>
<path d="M836.2,300.1 L837.4,300.1 L851.5,304.2 L850.3,304.2Z" fill="rgb(204,190,147)" stroke="rgb(204,190,147)" stroke-width="0.6"/>
<path d="M837.4,300.1 L838.6,300.2 L852.7,304.3 L851.5,304.2Z" fill="rgb(203,189,146)" stroke="rgb(203,189,146)" stroke-width="0.6"/>
<path d="M838.6,300.2 L839.8,300.4 L853.9,304.4 L852.7,304.3Z" fill="rgb(202,188,145)" stroke="rgb(202,188,145)" stroke-width="0.6"/>
<path d="M839.8,300.4 L841.0,300.6 L855.1,304.7 L853.9,304.4Z" fill="rgb(201,186,144)" stroke="rgb(201,186,144)" stroke-width="0.6"/>
<clipPath id="tpc0"><path d="M860.1,356.4 L860.0,352.1 L859.6,347.9 L859.0,344.1 L858.1,340.7 L857.0,337.6 L855.7,334.9 L854.1,332.6 L852.4,330.8 L850.5,329.4 L848.4,328.6 L846.2,328.2 L843.8,328.3 L841.4,328.9 L838.9,330.0 L836.3,331.5 L833.7,333.6 L831.1,336.0 L828.6,338.9 L826.0,342.2 L823.6,345.8 L821.3,349.7 L819.0,354.0 L817.0,358.4 L815.0,363.1 L813.3,368.0 L811.7,372.9 L810.4,377.9 L809.3,382.9 L808.4,387.9 L807.8,392.8 L807.4,397.6 L807.3,402.2 L807.4,406.5 L807.8,410.6 L808.4,414.5 L809.3,417.9 L810.4,421.0 L811.7,423.7 L813.3,426.0 L815.0,427.8 L817.0,429.2 L819.0,430.0 L821.3,430.4 L823.6,430.3 L826.0,429.7 L828.6,428.6 L831.1,427.1 L833.7,425.0 L836.3,422.6 L838.9,419.7 L841.4,416.4 L843.8,412.8 L846.2,408.9 L848.4,404.6 L850.5,400.1 L852.4,395.5 L854.1,390.6 L855.7,385.7 L857.0,380.7 L858.1,375.7 L859.0,370.7 L859.6,365.8 L860.0,361.0Z"/></clipPath>
<linearGradient id="tpc0g" x1="0" y1="328.2" x2="0" y2="430.4" gradientUnits="userSpaceOnUse"><stop offset="0" stop-color="rgb(124,115,89)"/><stop offset="0.45" stop-color="rgb(159,148,115)"/><stop offset="1" stop-color="rgb(209,194,150)"/></linearGradient>
<path d="M860.1,356.4 L860.0,352.1 L859.6,347.9 L859.0,344.1 L858.1,340.7 L857.0,337.6 L855.7,334.9 L854.1,332.6 L852.4,330.8 L850.5,329.4 L848.4,328.6 L846.2,328.2 L843.8,328.3 L841.4,328.9 L838.9,330.0 L836.3,331.5 L833.7,333.6 L831.1,336.0 L828.6,338.9 L826.0,342.2 L823.6,345.8 L821.3,349.7 L819.0,354.0 L817.0,358.4 L815.0,363.1 L813.3,368.0 L811.7,372.9 L810.4,377.9 L809.3,382.9 L808.4,387.9 L807.8,392.8 L807.4,397.6 L807.3,402.2 L807.4,406.5 L807.8,410.6 L808.4,414.5 L809.3,417.9 L810.4,421.0 L811.7,423.7 L813.3,426.0 L815.0,427.8 L817.0,429.2 L819.0,430.0 L821.3,430.4 L823.6,430.3 L826.0,429.7 L828.6,428.6 L831.1,427.1 L833.7,425.0 L836.3,422.6 L838.9,419.7 L841.4,416.4 L843.8,412.8 L846.2,408.9 L848.4,404.6 L850.5,400.1 L852.4,395.5 L854.1,390.6 L855.7,385.7 L857.0,380.7 L858.1,375.7 L859.0,370.7 L859.6,365.8 L860.0,361.0ZM846.0,352.4 L845.9,348.0 L845.5,343.9 L844.9,340.1 L844.0,336.6 L842.9,333.5 L841.5,330.8 L840.0,328.5 L838.3,326.7 L836.3,325.4 L834.3,324.5 L832.0,324.1 L829.7,324.2 L827.3,324.8 L824.7,325.9 L822.2,327.5 L819.6,329.5 L817.0,331.9 L814.4,334.8 L811.9,338.1 L809.5,341.7 L807.1,345.7 L804.9,349.9 L802.8,354.4 L800.9,359.1 L799.2,363.9 L797.6,368.8 L796.3,373.8 L795.2,378.8 L794.3,383.8 L793.7,388.7 L793.3,393.5 L793.2,398.1 L793.3,402.5 L793.7,406.6 L794.3,410.4 L795.2,413.9 L796.3,416.9 L797.6,419.6 L799.2,421.9 L800.9,423.7 L802.8,425.1 L804.9,426.0 L807.1,426.3 L809.5,426.2 L811.9,425.6 L814.4,424.5 L817.0,423.0 L819.6,421.0 L822.2,418.5 L824.7,415.6 L827.3,412.3 L829.7,408.7 L832.0,404.8 L834.3,400.5 L836.3,396.1 L838.3,391.4 L840.0,386.6 L841.5,381.6 L842.9,376.6 L844.0,371.6 L844.9,366.6 L845.5,361.7 L845.9,356.9Z" fill="url(#tpc0g)" fill-rule="evenodd" clip-path="url(#tpc0)"/>
<clipPath id="tpc1"><path d="M712.4,507.5 L712.3,503.4 L711.8,499.7 L711.0,496.4 L709.9,493.5 L708.6,491.2 L707.0,489.4 L705.2,488.2 L703.1,487.6 L701.0,487.7 L698.7,488.3 L696.3,489.6 L693.9,491.4 L691.4,493.8 L689.0,496.6 L686.7,500.0 L684.6,503.7 L682.5,507.8 L680.7,512.2 L679.1,516.7 L677.8,521.4 L676.7,526.1 L675.9,530.8 L675.4,535.3 L675.3,539.7 L675.4,543.7 L675.9,547.4 L676.7,550.7 L677.8,553.6 L679.1,555.9 L680.7,557.7 L682.5,558.9 L684.6,559.5 L686.7,559.5 L689.0,558.8 L691.4,557.6 L693.9,555.7 L696.3,553.4 L698.7,550.5 L701.0,547.1 L703.1,543.4 L705.2,539.3 L707.0,534.9 L708.6,530.4 L709.9,525.7 L711.0,521.0 L711.8,516.3 L712.3,511.8Z"/></clipPath>
<linearGradient id="tpc1g" x1="0" y1="487.6" x2="0" y2="559.5" gradientUnits="userSpaceOnUse"><stop offset="0" stop-color="rgb(124,115,89)"/><stop offset="0.45" stop-color="rgb(159,148,115)"/><stop offset="1" stop-color="rgb(209,194,150)"/></linearGradient>
<path d="M712.4,507.5 L712.3,503.4 L711.8,499.7 L711.0,496.4 L709.9,493.5 L708.6,491.2 L707.0,489.4 L705.2,488.2 L703.1,487.6 L701.0,487.7 L698.7,488.3 L696.3,489.6 L693.9,491.4 L691.4,493.8 L689.0,496.6 L686.7,500.0 L684.6,503.7 L682.5,507.8 L680.7,512.2 L679.1,516.7 L677.8,521.4 L676.7,526.1 L675.9,530.8 L675.4,535.3 L675.3,539.7 L675.4,543.7 L675.9,547.4 L676.7,550.7 L677.8,553.6 L679.1,555.9 L680.7,557.7 L682.5,558.9 L684.6,559.5 L686.7,559.5 L689.0,558.8 L691.4,557.6 L693.9,555.7 L696.3,553.4 L698.7,550.5 L701.0,547.1 L703.1,543.4 L705.2,539.3 L707.0,534.9 L708.6,530.4 L709.9,525.7 L711.0,521.0 L711.8,516.3 L712.3,511.8ZM698.3,503.4 L698.2,499.3 L697.7,495.6 L696.9,492.3 L695.8,489.5 L694.5,487.1 L692.9,485.3 L691.0,484.2 L689.0,483.6 L686.8,483.6 L684.5,484.2 L682.2,485.5 L679.7,487.3 L677.3,489.7 L674.9,492.6 L672.6,495.9 L670.4,499.7 L668.4,503.7 L666.6,508.1 L665.0,512.7 L663.6,517.3 L662.6,522.0 L661.8,526.7 L661.3,531.2 L661.2,535.6 L661.3,539.6 L661.8,543.4 L662.6,546.7 L663.6,549.5 L665.0,551.8 L666.6,553.6 L668.4,554.8 L670.4,555.4 L672.6,555.4 L674.9,554.7 L677.3,553.5 L679.7,551.7 L682.2,549.3 L684.5,546.4 L686.8,543.1 L689.0,539.3 L691.0,535.2 L692.9,530.9 L694.5,526.3 L695.8,521.6 L696.9,516.9 L697.7,512.3 L698.2,507.7Z" fill="url(#tpc1g)" fill-rule="evenodd" clip-path="url(#tpc1)"/>
<path d="M677.5,750.5 L676.0,751.6 L674.4,752.2 L673.0,752.1 L671.8,751.4 L670.8,750.1 L670.0,748.3 L669.6,746.1 L669.4,743.5 L669.4,449.3 L669.6,446.4 L670.0,443.4 L670.8,440.3 L671.8,437.3 L673.0,434.4 L674.4,431.9 L676.0,429.8 L677.5,428.1 L710.1,399.9 L837.1,309.4 L838.5,308.5 L839.8,307.6 L841.2,306.9 L842.5,306.2 L843.9,305.7 L845.2,305.2 L846.5,304.8 L847.8,304.5 L849.0,304.3 L850.3,304.2 L851.5,304.2 L852.7,304.3 L853.9,304.4 L855.1,304.7 L856.2,305.1 L857.3,305.5 L858.4,306.1 L859.4,306.7 L860.4,307.5 L861.4,308.3 L862.4,309.2 L863.3,310.2 L864.1,311.3 L865.0,312.4 L865.8,313.7 L866.5,315.0 L867.2,316.4 L867.9,317.9 L868.5,319.5 L869.1,321.1 L869.6,322.9 L870.1,324.6 L870.6,326.5 L871.0,328.4 L871.3,330.4 L871.6,332.5 L871.9,334.6 L872.1,336.7 L872.3,338.9 L872.4,341.2 L881.3,559.0 L881.2,562.0 L880.8,565.1 L880.1,568.3 L879.1,571.5 L877.8,574.5 L876.4,577.2 L874.8,579.4 L873.1,581.2ZM860.1,356.4 L860.0,352.1 L859.6,347.9 L859.0,344.1 L858.1,340.7 L857.0,337.6 L855.7,334.9 L854.1,332.6 L852.4,330.8 L850.5,329.4 L848.4,328.6 L846.2,328.2 L843.8,328.3 L841.4,328.9 L838.9,330.0 L836.3,331.5 L833.7,333.6 L831.1,336.0 L828.6,338.9 L826.0,342.2 L823.6,345.8 L821.3,349.7 L819.0,354.0 L817.0,358.4 L815.0,363.1 L813.3,368.0 L811.7,372.9 L810.4,377.9 L809.3,382.9 L808.4,387.9 L807.8,392.8 L807.4,397.6 L807.3,402.2 L807.4,406.5 L807.8,410.6 L808.4,414.5 L809.3,417.9 L810.4,421.0 L811.7,423.7 L813.3,426.0 L815.0,427.8 L817.0,429.2 L819.0,430.0 L821.3,430.4 L823.6,430.3 L826.0,429.7 L828.6,428.6 L831.1,427.1 L833.7,425.0 L836.3,422.6 L838.9,419.7 L841.4,416.4 L843.8,412.8 L846.2,408.9 L848.4,404.6 L850.5,400.1 L852.4,395.5 L854.1,390.6 L855.7,385.7 L857.0,380.7 L858.1,375.7 L859.0,370.7 L859.6,365.8 L860.0,361.0ZM712.4,507.5 L712.3,503.4 L711.8,499.7 L711.0,496.4 L709.9,493.5 L708.6,491.2 L707.0,489.4 L705.2,488.2 L703.1,487.6 L701.0,487.7 L698.7,488.3 L696.3,489.6 L693.9,491.4 L691.4,493.8 L689.0,496.6 L686.7,500.0 L684.6,503.7 L682.5,507.8 L680.7,512.2 L679.1,516.7 L677.8,521.4 L676.7,526.1 L675.9,530.8 L675.4,535.3 L675.3,539.7 L675.4,543.7 L675.9,547.4 L676.7,550.7 L677.8,553.6 L679.1,555.9 L680.7,557.7 L682.5,558.9 L684.6,559.5 L686.7,559.5 L689.0,558.8 L691.4,557.6 L693.9,555.7 L696.3,553.4 L698.7,550.5 L701.0,547.1 L703.1,543.4 L705.2,539.3 L707.0,534.9 L708.6,530.4 L709.9,525.7 L711.0,521.0 L711.8,516.3 L712.3,511.8Z" fill="rgb(195,181,140)" fill-rule="evenodd"/>
<linearGradient id="tpsh" x1="0" y1="0.7" x2="1" y2="0.3"><stop offset="0" stop-color="rgb(200,186,144)"/><stop offset="0.45" stop-color="rgb(157,146,113)"/><stop offset="1" stop-color="rgb(107,99,77)"/></linearGradient>
<path d="M680.8,733.6 L680.7,732.0 L680.2,730.8 L679.5,730.2 L678.6,730.2 L677.5,730.8 L676.5,731.9 L675.6,733.5 L674.9,735.4 L674.4,737.4 L674.3,739.2 L674.4,740.9 L674.9,742.0 L675.6,742.7 L676.5,742.7 L677.5,742.1 L678.6,740.9 L679.5,739.3 L680.2,737.5 L680.7,735.5Z" fill="url(#tpsh)" stroke="#2b2410" stroke-width="1.2"/>
<path d="M746.0,677.1 L745.9,675.5 L745.4,674.4 L744.7,673.7 L743.8,673.7 L742.8,674.3 L741.7,675.5 L740.8,677.1 L740.1,678.9 L739.6,680.9 L739.5,682.8 L739.6,684.4 L740.1,685.6 L740.8,686.2 L741.7,686.2 L742.8,685.6 L743.8,684.5 L744.7,682.9 L745.4,681.0 L745.9,679.0Z" fill="url(#tpsh)" stroke="#2b2410" stroke-width="1.2"/>
<path d="M811.2,620.7 L811.1,619.1 L810.6,617.9 L809.9,617.3 L809.0,617.3 L808.0,617.9 L806.9,619.0 L806.0,620.6 L805.3,622.5 L804.8,624.4 L804.7,626.3 L804.8,627.9 L805.3,629.1 L806.0,629.7 L806.9,629.7 L808.0,629.1 L809.0,628.0 L809.9,626.4 L810.6,624.5 L811.1,622.6Z" fill="url(#tpsh)" stroke="#2b2410" stroke-width="1.2"/>
<path d="M876.4,564.2 L876.3,562.6 L875.8,561.4 L875.1,560.8 L874.2,560.8 L873.1,561.4 L872.1,562.5 L871.2,564.1 L870.5,566.0 L870.0,568.0 L869.9,569.9 L870.0,571.5 L870.5,572.6 L871.2,573.3 L872.1,573.3 L873.1,572.7 L874.2,571.5 L875.1,569.9 L875.8,568.1 L876.3,566.1Z" fill="url(#tpsh)" stroke="#2b2410" stroke-width="1.2"/>
<path d="M680.8,439.4 L680.7,437.8 L680.2,436.7 L679.5,436.0 L678.6,436.0 L677.5,436.6 L676.5,437.8 L675.6,439.3 L674.9,441.2 L674.4,443.2 L674.3,445.1 L674.4,446.7 L674.9,447.9 L675.6,448.5 L676.5,448.5 L677.5,447.9 L678.6,446.8 L679.5,445.2 L680.2,443.3 L680.7,441.3Z" fill="url(#tpsh)" stroke="#2b2410" stroke-width="1.2"/>
<path d="M713.4,411.2 L713.3,409.6 L712.8,408.4 L712.1,407.8 L711.2,407.8 L710.1,408.4 L709.1,409.5 L708.2,411.1 L707.5,413.0 L707.0,415.0 L706.9,416.8 L707.0,418.5 L707.5,419.6 L708.2,420.2 L709.1,420.3 L710.1,419.7 L711.2,418.5 L712.1,416.9 L712.8,415.1 L713.3,413.1Z" fill="url(#tpsh)" stroke="#2b2410" stroke-width="1.2"/>
<path d="M869.4,343.4 L869.3,341.8 L868.8,340.6 L868.1,340.0 L867.2,340.0 L866.2,340.6 L865.2,341.8 L864.3,343.3 L863.5,345.2 L863.1,347.2 L862.9,349.1 L863.1,350.7 L863.5,351.9 L864.3,352.5 L865.2,352.5 L866.2,351.9 L867.2,350.7 L868.1,349.2 L868.8,347.3 L869.3,345.3Z" fill="url(#tpsh)" stroke="#2b2410" stroke-width="1.2"/>
<path d="M834.1,322.7 L834.0,321.1 L833.5,319.9 L832.8,319.3 L831.9,319.3 L830.9,319.9 L829.9,321.0 L828.9,322.6 L828.2,324.5 L827.8,326.4 L827.6,328.3 L827.8,329.9 L828.2,331.1 L828.9,331.7 L829.9,331.8 L830.9,331.2 L831.9,330.0 L832.8,328.4 L833.5,326.5 L834.0,324.6Z" fill="url(#tpsh)" stroke="#2b2410" stroke-width="1.2"/>
<path d="M839.8,430.3 L839.6,428.7 L839.2,427.5 L838.5,426.9 L837.6,426.8 L836.5,427.4 L835.5,428.6 L834.6,430.2 L833.9,432.0 L833.4,434.0 L833.3,435.9 L833.4,437.5 L833.9,438.7 L834.6,439.3 L835.5,439.3 L836.5,438.7 L837.6,437.6 L838.5,436.0 L839.2,434.1 L839.6,432.1Z" fill="url(#tpsh)" stroke="#2b2410" stroke-width="1.2"/>
<path d="M673.0,752.1 L671.8,751.4 L670.8,750.1 L670.0,748.3 L669.6,746.1 L669.4,743.5 L669.4,449.3 L669.6,446.4 L670.0,443.4 L670.8,440.3 L671.8,437.3 L673.0,434.4 L674.4,431.9 L676.0,429.8 L677.5,428.1 L710.1,399.9 L837.1,309.4 L838.5,308.5 L839.8,307.6 L841.2,306.9 L842.5,306.2 L843.9,305.7 L845.2,305.2 L846.5,304.8 L847.8,304.5 L849.0,304.3 L850.3,304.2 L851.5,304.2 L852.7,304.3 L853.9,304.4 L855.1,304.7" fill="none" stroke="#2b2410" stroke-width="1.2" stroke-linejoin="round"/>
<path d="M655.3,739.4 L669.4,743.5" stroke="#2b2410" stroke-width="1.3"/>
<path d="M655.3,445.2 L669.4,449.3" stroke="#2b2410" stroke-width="1.3"/>
<path d="M663.4,424.1 L677.5,428.1" stroke="#2b2410" stroke-width="1.3"/>
<path d="M696.0,395.8 L710.1,399.9" stroke="#2b2410" stroke-width="1.3"/>
<path d="M823.0,305.3 L837.1,309.4" stroke="#2b2410" stroke-width="1.3"/>
<clipPath id="tpc0x"><path d="M0,0 H1919 V1079 H0Z M846.0,352.4 L845.9,348.0 L845.5,343.9 L844.9,340.1 L844.0,336.6 L842.9,333.5 L841.5,330.8 L840.0,328.5 L838.3,326.7 L836.3,325.4 L834.3,324.5 L832.0,324.1 L829.7,324.2 L827.3,324.8 L824.7,325.9 L822.2,327.5 L819.6,329.5 L817.0,331.9 L814.4,334.8 L811.9,338.1 L809.5,341.7 L807.1,345.7 L804.9,349.9 L802.8,354.4 L800.9,359.1 L799.2,363.9 L797.6,368.8 L796.3,373.8 L795.2,378.8 L794.3,383.8 L793.7,388.7 L793.3,393.5 L793.2,398.1 L793.3,402.5 L793.7,406.6 L794.3,410.4 L795.2,413.9 L796.3,416.9 L797.6,419.6 L799.2,421.9 L800.9,423.7 L802.8,425.1 L804.9,426.0 L807.1,426.3 L809.5,426.2 L811.9,425.6 L814.4,424.5 L817.0,423.0 L819.6,421.0 L822.2,418.5 L824.7,415.6 L827.3,412.3 L829.7,408.7 L832.0,404.8 L834.3,400.5 L836.3,396.1 L838.3,391.4 L840.0,386.6 L841.5,381.6 L842.9,376.6 L844.0,371.6 L844.9,366.6 L845.5,361.7 L845.9,356.9Z" clip-rule="evenodd"/></clipPath>
<path d="M860.1,356.4 L860.0,352.1 L859.6,347.9 L859.0,344.1 L858.1,340.7 L857.0,337.6 L855.7,334.9 L854.1,332.6 L852.4,330.8 L850.5,329.4 L848.4,328.6 L846.2,328.2 L843.8,328.3 L841.4,328.9 L838.9,330.0 L836.3,331.5 L833.7,333.6 L831.1,336.0 L828.6,338.9 L826.0,342.2 L823.6,345.8 L821.3,349.7 L819.0,354.0 L817.0,358.4 L815.0,363.1 L813.3,368.0 L811.7,372.9 L810.4,377.9 L809.3,382.9 L808.4,387.9 L807.8,392.8 L807.4,397.6 L807.3,402.2 L807.4,406.5 L807.8,410.6 L808.4,414.5 L809.3,417.9 L810.4,421.0 L811.7,423.7 L813.3,426.0 L815.0,427.8 L817.0,429.2 L819.0,430.0 L821.3,430.4 L823.6,430.3 L826.0,429.7 L828.6,428.6 L831.1,427.1 L833.7,425.0 L836.3,422.6 L838.9,419.7 L841.4,416.4 L843.8,412.8 L846.2,408.9 L848.4,404.6 L850.5,400.1 L852.4,395.5 L854.1,390.6 L855.7,385.7 L857.0,380.7 L858.1,375.7 L859.0,370.7 L859.6,365.8 L860.0,361.0Z" fill="none" stroke="#2b2410" stroke-width="1.2" clip-path="url(#tpc0x)"/>
<clipPath id="tpc1x"><path d="M0,0 H1919 V1079 H0Z M698.3,503.4 L698.2,499.3 L697.7,495.6 L696.9,492.3 L695.8,489.5 L694.5,487.1 L692.9,485.3 L691.0,484.2 L689.0,483.6 L686.8,483.6 L684.5,484.2 L682.2,485.5 L679.7,487.3 L677.3,489.7 L674.9,492.6 L672.6,495.9 L670.4,499.7 L668.4,503.7 L666.6,508.1 L665.0,512.7 L663.6,517.3 L662.6,522.0 L661.8,526.7 L661.3,531.2 L661.2,535.6 L661.3,539.6 L661.8,543.4 L662.6,546.7 L663.6,549.5 L665.0,551.8 L666.6,553.6 L668.4,554.8 L670.4,555.4 L672.6,555.4 L674.9,554.7 L677.3,553.5 L679.7,551.7 L682.2,549.3 L684.5,546.4 L686.8,543.1 L689.0,539.3 L691.0,535.2 L692.9,530.9 L694.5,526.3 L695.8,521.6 L696.9,516.9 L697.7,512.3 L698.2,507.7Z" clip-rule="evenodd"/></clipPath>
<path d="M712.4,507.5 L712.3,503.4 L711.8,499.7 L711.0,496.4 L709.9,493.5 L708.6,491.2 L707.0,489.4 L705.2,488.2 L703.1,487.6 L701.0,487.7 L698.7,488.3 L696.3,489.6 L693.9,491.4 L691.4,493.8 L689.0,496.6 L686.7,500.0 L684.6,503.7 L682.5,507.8 L680.7,512.2 L679.1,516.7 L677.8,521.4 L676.7,526.1 L675.9,530.8 L675.4,535.3 L675.3,539.7 L675.4,543.7 L675.9,547.4 L676.7,550.7 L677.8,553.6 L679.1,555.9 L680.7,557.7 L682.5,558.9 L684.6,559.5 L686.7,559.5 L689.0,558.8 L691.4,557.6 L693.9,555.7 L696.3,553.4 L698.7,550.5 L701.0,547.1 L703.1,543.4 L705.2,539.3 L707.0,534.9 L708.6,530.4 L709.9,525.7 L711.0,521.0 L711.8,516.3 L712.3,511.8Z" fill="none" stroke="#2b2410" stroke-width="1.2" clip-path="url(#tpc1x)"/>
<path d="M677.5,750.5 L676.0,751.6 L674.4,752.2 L673.0,752.1 L658.9,748.0 L657.7,747.3 L656.7,746.1 L655.9,744.3 L655.4,742.0 L655.3,739.4 L655.3,445.2 L655.4,442.3 L655.9,439.3 L656.7,436.2 L657.7,433.2 L658.9,430.4 L660.3,427.8 L661.8,425.7 L663.4,424.1 L696.0,395.8 L823.0,305.3 L824.4,304.4 L825.7,303.6 L827.1,302.8 L828.4,302.1 L829.8,301.6 L831.1,301.1 L832.4,300.7 L833.7,300.4 L834.9,300.2 L836.2,300.1 L837.4,300.1 L838.6,300.2 L839.8,300.4 L841.0,300.6 L855.1,304.7 L856.2,305.1 L857.3,305.5 L858.4,306.1 L859.4,306.7 L860.4,307.5 L861.4,308.3 L862.4,309.2 L863.3,310.2 L864.1,311.3 L865.0,312.4 L865.8,313.7 L866.5,315.0 L867.2,316.4 L867.9,317.9 L868.5,319.5 L869.1,321.1 L869.6,322.9 L870.1,324.6 L870.6,326.5 L871.0,328.4 L871.3,330.4 L871.6,332.5 L871.9,334.6 L872.1,336.7 L872.3,338.9 L872.4,341.2 L881.3,559.0 L881.2,562.0 L880.8,565.1 L880.1,568.3 L879.1,571.5 L877.8,574.5 L876.4,577.2 L874.8,579.4 L873.1,581.2 L677.5,750.5Z" fill="none" stroke="#f8bb4c" stroke-width="2.3" stroke-linejoin="round"/>
<clipPath id="tpc0b"><path d="M846.0,352.4 L845.9,348.0 L845.5,343.9 L844.9,340.1 L844.0,336.6 L842.9,333.5 L841.5,330.8 L840.0,328.5 L838.3,326.7 L836.3,325.4 L834.3,324.5 L832.0,324.1 L829.7,324.2 L827.3,324.8 L824.7,325.9 L822.2,327.5 L819.6,329.5 L817.0,331.9 L814.4,334.8 L811.9,338.1 L809.5,341.7 L807.1,345.7 L804.9,349.9 L802.8,354.4 L800.9,359.1 L799.2,363.9 L797.6,368.8 L796.3,373.8 L795.2,378.8 L794.3,383.8 L793.7,388.7 L793.3,393.5 L793.2,398.1 L793.3,402.5 L793.7,406.6 L794.3,410.4 L795.2,413.9 L796.3,416.9 L797.6,419.6 L799.2,421.9 L800.9,423.7 L802.8,425.1 L804.9,426.0 L807.1,426.3 L809.5,426.2 L811.9,425.6 L814.4,424.5 L817.0,423.0 L819.6,421.0 L822.2,418.5 L824.7,415.6 L827.3,412.3 L829.7,408.7 L832.0,404.8 L834.3,400.5 L836.3,396.1 L838.3,391.4 L840.0,386.6 L841.5,381.6 L842.9,376.6 L844.0,371.6 L844.9,366.6 L845.5,361.7 L845.9,356.9Z"/></clipPath>
<path d="M860.1,356.4 L860.0,352.1 L859.6,347.9 L859.0,344.1 L858.1,340.7 L857.0,337.6 L855.7,334.9 L854.1,332.6 L852.4,330.8 L850.5,329.4 L848.4,328.6 L846.2,328.2 L843.8,328.3 L841.4,328.9 L838.9,330.0 L836.3,331.5 L833.7,333.6 L831.1,336.0 L828.6,338.9 L826.0,342.2 L823.6,345.8 L821.3,349.7 L819.0,354.0 L817.0,358.4 L815.0,363.1 L813.3,368.0 L811.7,372.9 L810.4,377.9 L809.3,382.9 L808.4,387.9 L807.8,392.8 L807.4,397.6 L807.3,402.2 L807.4,406.5 L807.8,410.6 L808.4,414.5 L809.3,417.9 L810.4,421.0 L811.7,423.7 L813.3,426.0 L815.0,427.8 L817.0,429.2 L819.0,430.0 L821.3,430.4 L823.6,430.3 L826.0,429.7 L828.6,428.6 L831.1,427.1 L833.7,425.0 L836.3,422.6 L838.9,419.7 L841.4,416.4 L843.8,412.8 L846.2,408.9 L848.4,404.6 L850.5,400.1 L852.4,395.5 L854.1,390.6 L855.7,385.7 L857.0,380.7 L858.1,375.7 L859.0,370.7 L859.6,365.8 L860.0,361.0Z" fill="none" stroke="#f8bb4c" stroke-width="2.4" clip-path="url(#tpc0b)"/>
<path d="M846.0,352.4 L845.9,348.0 L845.5,343.9 L844.9,340.1 L844.0,336.6 L842.9,333.5 L841.5,330.8 L840.0,328.5 L838.3,326.7 L836.3,325.4 L834.3,324.5 L832.0,324.1 L829.7,324.2 L827.3,324.8 L824.7,325.9 L822.2,327.5 L819.6,329.5 L817.0,331.9 L814.4,334.8 L811.9,338.1 L809.5,341.7 L807.1,345.7 L804.9,349.9 L802.8,354.4 L800.9,359.1 L799.2,363.9 L797.6,368.8 L796.3,373.8 L795.2,378.8 L794.3,383.8 L793.7,388.7 L793.3,393.5 L793.2,398.1 L793.3,402.5 L793.7,406.6 L794.3,410.4 L795.2,413.9 L796.3,416.9 L797.6,419.6 L799.2,421.9 L800.9,423.7 L802.8,425.1 L804.9,426.0 L807.1,426.3 L809.5,426.2 L811.9,425.6 L814.4,424.5 L817.0,423.0 L819.6,421.0 L822.2,418.5 L824.7,415.6 L827.3,412.3 L829.7,408.7 L832.0,404.8 L834.3,400.5 L836.3,396.1 L838.3,391.4 L840.0,386.6 L841.5,381.6 L842.9,376.6 L844.0,371.6 L844.9,366.6 L845.5,361.7 L845.9,356.9Z" fill="none" stroke="#f8bb4c" stroke-width="2.4" clip-path="url(#tpc0)"/>
<clipPath id="tpc1b"><path d="M698.3,503.4 L698.2,499.3 L697.7,495.6 L696.9,492.3 L695.8,489.5 L694.5,487.1 L692.9,485.3 L691.0,484.2 L689.0,483.6 L686.8,483.6 L684.5,484.2 L682.2,485.5 L679.7,487.3 L677.3,489.7 L674.9,492.6 L672.6,495.9 L670.4,499.7 L668.4,503.7 L666.6,508.1 L665.0,512.7 L663.6,517.3 L662.6,522.0 L661.8,526.7 L661.3,531.2 L661.2,535.6 L661.3,539.6 L661.8,543.4 L662.6,546.7 L663.6,549.5 L665.0,551.8 L666.6,553.6 L668.4,554.8 L670.4,555.4 L672.6,555.4 L674.9,554.7 L677.3,553.5 L679.7,551.7 L682.2,549.3 L684.5,546.4 L686.8,543.1 L689.0,539.3 L691.0,535.2 L692.9,530.9 L694.5,526.3 L695.8,521.6 L696.9,516.9 L697.7,512.3 L698.2,507.7Z"/></clipPath>
<path d="M712.4,507.5 L712.3,503.4 L711.8,499.7 L711.0,496.4 L709.9,493.5 L708.6,491.2 L707.0,489.4 L705.2,488.2 L703.1,487.6 L701.0,487.7 L698.7,488.3 L696.3,489.6 L693.9,491.4 L691.4,493.8 L689.0,496.6 L686.7,500.0 L684.6,503.7 L682.5,507.8 L680.7,512.2 L679.1,516.7 L677.8,521.4 L676.7,526.1 L675.9,530.8 L675.4,535.3 L675.3,539.7 L675.4,543.7 L675.9,547.4 L676.7,550.7 L677.8,553.6 L679.1,555.9 L680.7,557.7 L682.5,558.9 L684.6,559.5 L686.7,559.5 L689.0,558.8 L691.4,557.6 L693.9,555.7 L696.3,553.4 L698.7,550.5 L701.0,547.1 L703.1,543.4 L705.2,539.3 L707.0,534.9 L708.6,530.4 L709.9,525.7 L711.0,521.0 L711.8,516.3 L712.3,511.8Z" fill="none" stroke="#f8bb4c" stroke-width="2.4" clip-path="url(#tpc1b)"/>
<path d="M698.3,503.4 L698.2,499.3 L697.7,495.6 L696.9,492.3 L695.8,489.5 L694.5,487.1 L692.9,485.3 L691.0,484.2 L689.0,483.6 L686.8,483.6 L684.5,484.2 L682.2,485.5 L679.7,487.3 L677.3,489.7 L674.9,492.6 L672.6,495.9 L670.4,499.7 L668.4,503.7 L666.6,508.1 L665.0,512.7 L663.6,517.3 L662.6,522.0 L661.8,526.7 L661.3,531.2 L661.2,535.6 L661.3,539.6 L661.8,543.4 L662.6,546.7 L663.6,549.5 L665.0,551.8 L666.6,553.6 L668.4,554.8 L670.4,555.4 L672.6,555.4 L674.9,554.7 L677.3,553.5 L679.7,551.7 L682.2,549.3 L684.5,546.4 L686.8,543.1 L689.0,539.3 L691.0,535.2 L692.9,530.9 L694.5,526.3 L695.8,521.6 L696.9,516.9 L697.7,512.3 L698.2,507.7Z" fill="none" stroke="#f8bb4c" stroke-width="2.4" clip-path="url(#tpc1)"/>
<path d="M1059.5,630.4 L994.3,686.9 L1107.2,719.5 L1172.4,663.0Z" fill="rgba(120,120,120,0.27)" stroke="#2b2b2b" stroke-width="0.9" stroke-linejoin="round"/>
<path d="M1059.5,743.3 L994.3,799.8 L1107.2,832.4 L1172.4,775.9Z" fill="rgba(120,120,120,0.25)" stroke="#2b2b2b" stroke-width="0.9" stroke-linejoin="round"/>
<path d="M1059.5,630.4 L994.3,686.9 L994.3,799.8 L1059.5,743.3Z" fill="rgba(120,120,120,0.24)" stroke="#2b2b2b" stroke-width="0.9" stroke-linejoin="round"/>
<path d="M1172.4,663.0 L1107.2,719.5 L1107.2,832.4 L1172.4,775.9Z" fill="rgba(120,120,120,0.24)" stroke="#2b2b2b" stroke-width="0.9" stroke-linejoin="round"/>
<path d="M994.3,686.9 L1107.2,719.5 L1107.2,832.4 L994.3,799.8Z" fill="rgba(120,120,120,0.36)" stroke="#2b2b2b" stroke-width="0.9" stroke-linejoin="round"/>
<path d="M1059.5,630.4 L1172.4,663.0 L1172.4,775.9 L1059.5,743.3Z" fill="rgba(120,120,120,0.36)" stroke="#2b2b2b" stroke-width="0.9" stroke-linejoin="round"/>
<circle cx="1082.9" cy="674.8" r="4.2" fill="#fff" stroke="#111" stroke-width="1.3"/><circle cx="1082.9" cy="674.8" r="1.7" fill="#111"/>
<path d="M1056.2,837.1 L1447.4,498.3 L1503.9,514.6 L1112.7,853.4Z" fill="#4ba44f"/>
<path d="M1112.7,853.4 L1503.9,514.6 L1503.9,571.1 L1112.7,909.9Z" fill="#43964a"/>
<path d="M1056.2,837.1 L1112.7,853.4 L1112.7,909.9 L1056.2,893.6Z" fill="#2f7f37"/>
<clipPath id="tubeop"><path d="M1060.4,842.6 L1108.4,856.4 L1108.4,904.4 L1060.4,890.6Z"/></clipPath>
<g clip-path="url(#tubeop)"><linearGradient id="tubeg" x1="0" y1="842.6" x2="0" y2="890.6" gradientUnits="userSpaceOnUse"><stop offset="0" stop-color="#36873d"/><stop offset="1" stop-color="#4da552"/></linearGradient><path d="M1060.4,842.6 L1451.6,503.8 L1451.6,551.8 L1060.4,890.6Z" fill="url(#tubeg)"/><path d="M1060.4,890.6 L1451.6,551.8 L1499.6,565.6 L1108.4,904.4Z" fill="#55ad5a"/><path d="M1060.4,890.6 L1451.6,551.8" stroke="#143d18" stroke-width="1"/><path d="M1080.0,849.6 L1079.8,848.0 L1079.4,846.8 L1078.7,846.2 L1077.7,846.2 L1076.7,846.8 L1075.7,847.9 L1074.8,849.5 L1074.1,851.4 L1073.6,853.4 L1073.5,855.3 L1073.6,856.9 L1074.1,858.0 L1074.8,858.7 L1075.7,858.7 L1076.7,858.1 L1077.7,856.9 L1078.7,855.3 L1079.4,853.5 L1079.8,851.5Z" fill="#ffffff" stroke="#143d18" stroke-width="1.2"/><path d="M1104.0,880.5 L1105.6,881.2 L1106.7,882.0 L1107.2,883.0 L1107.1,884.0 L1106.4,885.0 L1105.1,885.8 L1103.4,886.3 L1101.4,886.6 L1099.4,886.6 L1097.5,886.2 L1095.9,885.5 L1094.8,884.7 L1094.2,883.7 L1094.4,882.7 L1095.1,881.7 L1096.4,880.9 L1098.1,880.4 L1100.1,880.1 L1102.1,880.2Z" fill="#ffffff" stroke="#143d18" stroke-width="1.2"/><path d="M1096.3,835.5 L1096.1,833.9 L1095.7,832.7 L1095.0,832.1 L1094.0,832.1 L1093.0,832.7 L1092.0,833.8 L1091.1,835.4 L1090.4,837.3 L1089.9,839.3 L1089.8,841.1 L1089.9,842.8 L1090.4,843.9 L1091.1,844.5 L1092.0,844.6 L1093.0,844.0 L1094.0,842.8 L1095.0,841.2 L1095.7,839.4 L1096.1,837.4Z" fill="#ffffff" stroke="#143d18" stroke-width="1.2"/><path d="M1120.3,866.4 L1121.9,867.1 L1123.0,867.9 L1123.5,868.9 L1123.4,869.9 L1122.7,870.9 L1121.4,871.7 L1119.7,872.2 L1117.7,872.5 L1115.7,872.4 L1113.8,872.1 L1112.2,871.4 L1111.1,870.6 L1110.5,869.6 L1110.7,868.6 L1111.4,867.6 L1112.7,866.8 L1114.4,866.3 L1116.4,866.0 L1118.4,866.1Z" fill="#ffffff" stroke="#143d18" stroke-width="1.2"/><path d="M1112.6,821.4 L1112.4,819.8 L1112.0,818.6 L1111.3,818.0 L1110.3,818.0 L1109.3,818.6 L1108.3,819.7 L1107.4,821.3 L1106.7,823.2 L1106.2,825.1 L1106.1,827.0 L1106.2,828.6 L1106.7,829.8 L1107.4,830.4 L1108.3,830.4 L1109.3,829.9 L1110.3,828.7 L1111.3,827.1 L1112.0,825.2 L1112.4,823.3Z" fill="#ffffff" stroke="#143d18" stroke-width="1.2"/><path d="M1136.6,852.3 L1138.2,852.9 L1139.3,853.8 L1139.8,854.8 L1139.7,855.8 L1139.0,856.8 L1137.7,857.6 L1136.0,858.1 L1134.0,858.4 L1132.0,858.3 L1130.1,858.0 L1128.5,857.3 L1127.4,856.5 L1126.8,855.5 L1127.0,854.5 L1127.7,853.5 L1129.0,852.7 L1130.7,852.2 L1132.7,851.9 L1134.7,851.9Z" fill="#ffffff" stroke="#143d18" stroke-width="1.2"/><path d="M1128.9,807.3 L1128.7,805.7 L1128.3,804.5 L1127.6,803.9 L1126.6,803.8 L1125.6,804.4 L1124.6,805.6 L1123.7,807.2 L1123.0,809.1 L1122.5,811.0 L1122.4,812.9 L1122.5,814.5 L1123.0,815.7 L1123.7,816.3 L1124.6,816.3 L1125.6,815.7 L1126.6,814.6 L1127.6,813.0 L1128.3,811.1 L1128.7,809.2Z" fill="#ffffff" stroke="#143d18" stroke-width="1.2"/><path d="M1152.9,838.2 L1154.5,838.8 L1155.6,839.7 L1156.1,840.7 L1156.0,841.7 L1155.3,842.6 L1154.0,843.4 L1152.3,844.0 L1150.3,844.3 L1148.3,844.2 L1146.4,843.8 L1144.8,843.2 L1143.7,842.3 L1143.1,841.4 L1143.3,840.3 L1144.0,839.4 L1145.3,838.6 L1147.0,838.0 L1149.0,837.8 L1151.0,837.8Z" fill="#ffffff" stroke="#143d18" stroke-width="1.2"/><path d="M1145.2,793.2 L1145.0,791.5 L1144.6,790.4 L1143.9,789.7 L1142.9,789.7 L1141.9,790.3 L1140.9,791.5 L1140.0,793.1 L1139.3,794.9 L1138.8,796.9 L1138.7,798.8 L1138.8,800.4 L1139.3,801.6 L1140.0,802.2 L1140.9,802.2 L1141.9,801.6 L1142.9,800.5 L1143.9,798.9 L1144.6,797.0 L1145.0,795.0Z" fill="#ffffff" stroke="#143d18" stroke-width="1.2"/><path d="M1169.2,824.1 L1170.8,824.7 L1171.9,825.6 L1172.4,826.6 L1172.3,827.6 L1171.6,828.5 L1170.3,829.3 L1168.6,829.9 L1166.6,830.1 L1164.6,830.1 L1162.7,829.7 L1161.1,829.1 L1160.0,828.2 L1159.4,827.2 L1159.6,826.2 L1160.3,825.3 L1161.6,824.5 L1163.3,823.9 L1165.3,823.7 L1167.3,823.7Z" fill="#ffffff" stroke="#143d18" stroke-width="1.2"/><path d="M1161.5,779.0 L1161.3,777.4 L1160.9,776.3 L1160.2,775.6 L1159.2,775.6 L1158.2,776.2 L1157.2,777.4 L1156.3,779.0 L1155.6,780.8 L1155.1,782.8 L1155.0,784.7 L1155.1,786.3 L1155.6,787.5 L1156.3,788.1 L1157.2,788.1 L1158.2,787.5 L1159.2,786.4 L1160.2,784.8 L1160.9,782.9 L1161.3,780.9Z" fill="#ffffff" stroke="#143d18" stroke-width="1.2"/><path d="M1185.5,810.0 L1187.1,810.6 L1188.2,811.5 L1188.7,812.4 L1188.6,813.5 L1187.9,814.4 L1186.6,815.2 L1184.9,815.8 L1182.9,816.0 L1180.9,816.0 L1179.0,815.6 L1177.4,815.0 L1176.3,814.1 L1175.7,813.1 L1175.9,812.1 L1176.6,811.2 L1177.9,810.4 L1179.6,809.8 L1181.6,809.5 L1183.6,809.6Z" fill="#ffffff" stroke="#143d18" stroke-width="1.2"/><path d="M1177.8,764.9 L1177.6,763.3 L1177.2,762.1 L1176.5,761.5 L1175.5,761.5 L1174.5,762.1 L1173.5,763.2 L1172.6,764.8 L1171.9,766.7 L1171.4,768.7 L1171.3,770.6 L1171.4,772.2 L1171.9,773.3 L1172.6,774.0 L1173.5,774.0 L1174.5,773.4 L1175.5,772.2 L1176.5,770.7 L1177.2,768.8 L1177.6,766.8Z" fill="#ffffff" stroke="#143d18" stroke-width="1.2"/><path d="M1201.8,795.8 L1203.4,796.5 L1204.5,797.3 L1205.0,798.3 L1204.9,799.3 L1204.2,800.3 L1202.9,801.1 L1201.2,801.6 L1199.2,801.9 L1197.2,801.9 L1195.3,801.5 L1193.7,800.8 L1192.6,800.0 L1192.0,799.0 L1192.2,798.0 L1192.9,797.0 L1194.2,796.2 L1195.9,795.7 L1197.9,795.4 L1199.9,795.5Z" fill="#ffffff" stroke="#143d18" stroke-width="1.2"/></g>
<path d="M1060.4,842.6 L1108.4,856.4 L1108.4,904.4 L1060.4,890.6Z" fill="none" stroke="#143d18" stroke-width="1"/>
<clipPath id="tt1"><path d="M1104.0,828.3 L1105.9,829.1 L1107.0,830.3 L1107.2,831.6 L1106.4,832.8 L1104.7,833.7 L1102.4,834.3 L1099.9,834.4 L1097.5,834.0 L1095.6,833.1 L1094.4,832.0 L1094.3,830.7 L1095.1,829.5 L1096.8,828.5 L1099.0,828.0 L1101.6,827.9Z"/></clipPath>
<path d="M1104.0,828.3 L1105.9,829.1 L1107.0,830.3 L1107.2,831.6 L1106.4,832.8 L1104.7,833.7 L1102.4,834.3 L1099.9,834.4 L1097.5,834.0 L1095.6,833.1 L1094.4,832.0 L1094.3,830.7 L1095.1,829.5 L1096.8,828.5 L1099.0,828.0 L1101.6,827.9Z" fill="#5cb562"/>
<path d="M1104.0,826.6 L1105.9,827.4 L1107.0,828.6 L1107.2,829.9 L1106.4,831.1 L1104.7,832.0 L1102.4,832.6 L1099.9,832.7 L1097.5,832.3 L1095.6,831.4 L1094.4,830.3 L1094.3,829.0 L1095.1,827.8 L1096.8,826.8 L1099.0,826.3 L1101.6,826.2Z" fill="#286c2f" clip-path="url(#tt1)"/>
<path d="M1104.0,828.3 L1105.9,829.1 L1107.0,830.3 L1107.2,831.6 L1106.4,832.8 L1104.7,833.7 L1102.4,834.3 L1099.9,834.4 L1097.5,834.0 L1095.6,833.1 L1094.4,832.0 L1094.3,830.7 L1095.1,829.5 L1096.8,828.5 L1099.0,828.0 L1101.6,827.9Z" fill="none" stroke="#0f3513" stroke-width="1.5"/>
<clipPath id="ts1"><path d="M1132.2,864.7 L1132.0,862.7 L1131.3,861.5 L1130.2,861.2 L1129.0,861.9 L1127.7,863.4 L1126.7,865.5 L1126.0,868.0 L1125.7,870.3 L1126.0,872.3 L1126.7,873.5 L1127.7,873.8 L1129.0,873.2 L1130.2,871.7 L1131.3,869.5 L1132.0,867.1Z"/></clipPath>
<path d="M1132.2,864.7 L1132.0,862.7 L1131.3,861.5 L1130.2,861.2 L1129.0,861.9 L1127.7,863.4 L1126.7,865.5 L1126.0,868.0 L1125.7,870.3 L1126.0,872.3 L1126.7,873.5 L1127.7,873.8 L1129.0,873.2 L1130.2,871.7 L1131.3,869.5 L1132.0,867.1Z" fill="#55ac5b"/>
<path d="M1133.5,864.2 L1133.3,862.2 L1132.6,861.0 L1131.5,860.7 L1130.3,861.4 L1129.0,862.9 L1128.0,865.0 L1127.3,867.5 L1127.0,869.8 L1127.3,871.8 L1128.0,873.0 L1129.0,873.3 L1130.3,872.7 L1131.5,871.2 L1132.6,869.0 L1133.3,866.6Z" fill="#286c2f" clip-path="url(#ts1)"/>
<path d="M1132.2,864.7 L1132.0,862.7 L1131.3,861.5 L1130.2,861.2 L1129.0,861.9 L1127.7,863.4 L1126.7,865.5 L1126.0,868.0 L1125.7,870.3 L1126.0,872.3 L1126.7,873.5 L1127.7,873.8 L1129.0,873.2 L1130.2,871.7 L1131.3,869.5 L1132.0,867.1Z" fill="none" stroke="#0f3513" stroke-width="1.5"/>
<clipPath id="tt2"><path d="M1120.3,814.2 L1122.2,815.0 L1123.3,816.2 L1123.5,817.4 L1122.7,818.6 L1121.0,819.6 L1118.7,820.2 L1116.2,820.3 L1113.8,819.8 L1111.9,819.0 L1110.7,817.9 L1110.6,816.6 L1111.4,815.4 L1113.1,814.4 L1115.3,813.9 L1117.9,813.8Z"/></clipPath>
<path d="M1120.3,814.2 L1122.2,815.0 L1123.3,816.2 L1123.5,817.4 L1122.7,818.6 L1121.0,819.6 L1118.7,820.2 L1116.2,820.3 L1113.8,819.8 L1111.9,819.0 L1110.7,817.9 L1110.6,816.6 L1111.4,815.4 L1113.1,814.4 L1115.3,813.9 L1117.9,813.8Z" fill="#5cb562"/>
<path d="M1120.3,812.5 L1122.2,813.3 L1123.3,814.5 L1123.5,815.7 L1122.7,816.9 L1121.0,817.9 L1118.7,818.5 L1116.2,818.6 L1113.8,818.1 L1111.9,817.3 L1110.7,816.2 L1110.6,814.9 L1111.4,813.7 L1113.1,812.7 L1115.3,812.2 L1117.9,812.1Z" fill="#286c2f" clip-path="url(#tt2)"/>
<path d="M1120.3,814.2 L1122.2,815.0 L1123.3,816.2 L1123.5,817.4 L1122.7,818.6 L1121.0,819.6 L1118.7,820.2 L1116.2,820.3 L1113.8,819.8 L1111.9,819.0 L1110.7,817.9 L1110.6,816.6 L1111.4,815.4 L1113.1,814.4 L1115.3,813.9 L1117.9,813.8Z" fill="none" stroke="#0f3513" stroke-width="1.5"/>
<clipPath id="ts2"><path d="M1148.5,850.6 L1148.3,848.6 L1147.6,847.4 L1146.5,847.1 L1145.3,847.8 L1144.0,849.3 L1143.0,851.4 L1142.3,853.8 L1142.0,856.2 L1142.3,858.2 L1143.0,859.4 L1144.0,859.7 L1145.3,859.0 L1146.5,857.5 L1147.6,855.4 L1148.3,853.0Z"/></clipPath>
<path d="M1148.5,850.6 L1148.3,848.6 L1147.6,847.4 L1146.5,847.1 L1145.3,847.8 L1144.0,849.3 L1143.0,851.4 L1142.3,853.8 L1142.0,856.2 L1142.3,858.2 L1143.0,859.4 L1144.0,859.7 L1145.3,859.0 L1146.5,857.5 L1147.6,855.4 L1148.3,853.0Z" fill="#55ac5b"/>
<path d="M1149.8,850.1 L1149.6,848.1 L1148.9,846.9 L1147.8,846.6 L1146.6,847.3 L1145.3,848.8 L1144.3,850.9 L1143.6,853.3 L1143.3,855.7 L1143.6,857.7 L1144.3,858.9 L1145.3,859.2 L1146.6,858.5 L1147.8,857.0 L1148.9,854.9 L1149.6,852.5Z" fill="#286c2f" clip-path="url(#ts2)"/>
<path d="M1148.5,850.6 L1148.3,848.6 L1147.6,847.4 L1146.5,847.1 L1145.3,847.8 L1144.0,849.3 L1143.0,851.4 L1142.3,853.8 L1142.0,856.2 L1142.3,858.2 L1143.0,859.4 L1144.0,859.7 L1145.3,859.0 L1146.5,857.5 L1147.6,855.4 L1148.3,853.0Z" fill="none" stroke="#0f3513" stroke-width="1.5"/>
<clipPath id="tt3"><path d="M1136.6,800.1 L1138.5,800.9 L1139.6,802.1 L1139.8,803.3 L1139.0,804.5 L1137.3,805.5 L1135.0,806.1 L1132.5,806.1 L1130.1,805.7 L1128.2,804.9 L1127.0,803.7 L1126.9,802.5 L1127.7,801.3 L1129.4,800.3 L1131.6,799.8 L1134.2,799.7Z"/></clipPath>
<path d="M1136.6,800.1 L1138.5,800.9 L1139.6,802.1 L1139.8,803.3 L1139.0,804.5 L1137.3,805.5 L1135.0,806.1 L1132.5,806.1 L1130.1,805.7 L1128.2,804.9 L1127.0,803.7 L1126.9,802.5 L1127.7,801.3 L1129.4,800.3 L1131.6,799.8 L1134.2,799.7Z" fill="#5cb562"/>
<path d="M1136.6,798.4 L1138.5,799.2 L1139.6,800.4 L1139.8,801.6 L1139.0,802.8 L1137.3,803.8 L1135.0,804.4 L1132.5,804.4 L1130.1,804.0 L1128.2,803.2 L1127.0,802.0 L1126.9,800.8 L1127.7,799.6 L1129.4,798.6 L1131.6,798.1 L1134.2,798.0Z" fill="#286c2f" clip-path="url(#tt3)"/>
<path d="M1136.6,800.1 L1138.5,800.9 L1139.6,802.1 L1139.8,803.3 L1139.0,804.5 L1137.3,805.5 L1135.0,806.1 L1132.5,806.1 L1130.1,805.7 L1128.2,804.9 L1127.0,803.7 L1126.9,802.5 L1127.7,801.3 L1129.4,800.3 L1131.6,799.8 L1134.2,799.7Z" fill="none" stroke="#0f3513" stroke-width="1.5"/>
<clipPath id="ts3"><path d="M1164.8,836.5 L1164.6,834.5 L1163.9,833.3 L1162.8,833.0 L1161.6,833.6 L1160.3,835.1 L1159.3,837.3 L1158.6,839.7 L1158.3,842.1 L1158.6,844.1 L1159.3,845.3 L1160.3,845.6 L1161.6,844.9 L1162.8,843.4 L1163.9,841.3 L1164.6,838.8Z"/></clipPath>
<path d="M1164.8,836.5 L1164.6,834.5 L1163.9,833.3 L1162.8,833.0 L1161.6,833.6 L1160.3,835.1 L1159.3,837.3 L1158.6,839.7 L1158.3,842.1 L1158.6,844.1 L1159.3,845.3 L1160.3,845.6 L1161.6,844.9 L1162.8,843.4 L1163.9,841.3 L1164.6,838.8Z" fill="#55ac5b"/>
<path d="M1166.1,836.0 L1165.9,834.0 L1165.2,832.8 L1164.1,832.5 L1162.9,833.1 L1161.6,834.6 L1160.6,836.8 L1159.9,839.2 L1159.6,841.6 L1159.9,843.6 L1160.6,844.8 L1161.6,845.1 L1162.9,844.4 L1164.1,842.9 L1165.2,840.8 L1165.9,838.3Z" fill="#286c2f" clip-path="url(#ts3)"/>
<path d="M1164.8,836.5 L1164.6,834.5 L1163.9,833.3 L1162.8,833.0 L1161.6,833.6 L1160.3,835.1 L1159.3,837.3 L1158.6,839.7 L1158.3,842.1 L1158.6,844.1 L1159.3,845.3 L1160.3,845.6 L1161.6,844.9 L1162.8,843.4 L1163.9,841.3 L1164.6,838.8Z" fill="none" stroke="#0f3513" stroke-width="1.5"/>
<clipPath id="tt4"><path d="M1152.9,786.0 L1154.8,786.8 L1155.9,787.9 L1156.1,789.2 L1155.3,790.4 L1153.6,791.4 L1151.3,791.9 L1148.8,792.0 L1146.4,791.6 L1144.5,790.8 L1143.3,789.6 L1143.2,788.4 L1144.0,787.2 L1145.7,786.2 L1147.9,785.6 L1150.5,785.6Z"/></clipPath>
<path d="M1152.9,786.0 L1154.8,786.8 L1155.9,787.9 L1156.1,789.2 L1155.3,790.4 L1153.6,791.4 L1151.3,791.9 L1148.8,792.0 L1146.4,791.6 L1144.5,790.8 L1143.3,789.6 L1143.2,788.4 L1144.0,787.2 L1145.7,786.2 L1147.9,785.6 L1150.5,785.6Z" fill="#5cb562"/>
<path d="M1152.9,784.3 L1154.8,785.1 L1155.9,786.2 L1156.1,787.5 L1155.3,788.7 L1153.6,789.7 L1151.3,790.2 L1148.8,790.3 L1146.4,789.9 L1144.5,789.1 L1143.3,787.9 L1143.2,786.7 L1144.0,785.5 L1145.7,784.5 L1147.9,783.9 L1150.5,783.9Z" fill="#286c2f" clip-path="url(#tt4)"/>
<path d="M1152.9,786.0 L1154.8,786.8 L1155.9,787.9 L1156.1,789.2 L1155.3,790.4 L1153.6,791.4 L1151.3,791.9 L1148.8,792.0 L1146.4,791.6 L1144.5,790.8 L1143.3,789.6 L1143.2,788.4 L1144.0,787.2 L1145.7,786.2 L1147.9,785.6 L1150.5,785.6Z" fill="none" stroke="#0f3513" stroke-width="1.5"/>
<clipPath id="ts4"><path d="M1181.1,822.3 L1180.9,820.4 L1180.2,819.2 L1179.1,818.9 L1177.9,819.5 L1176.6,821.0 L1175.6,823.2 L1174.9,825.6 L1174.6,828.0 L1174.9,829.9 L1175.6,831.2 L1176.6,831.5 L1177.9,830.8 L1179.1,829.3 L1180.2,827.2 L1180.9,824.7Z"/></clipPath>
<path d="M1181.1,822.3 L1180.9,820.4 L1180.2,819.2 L1179.1,818.9 L1177.9,819.5 L1176.6,821.0 L1175.6,823.2 L1174.9,825.6 L1174.6,828.0 L1174.9,829.9 L1175.6,831.2 L1176.6,831.5 L1177.9,830.8 L1179.1,829.3 L1180.2,827.2 L1180.9,824.7Z" fill="#55ac5b"/>
<path d="M1182.4,821.8 L1182.2,819.9 L1181.5,818.7 L1180.4,818.4 L1179.2,819.0 L1177.9,820.5 L1176.9,822.7 L1176.2,825.1 L1175.9,827.5 L1176.2,829.4 L1176.9,830.7 L1177.9,831.0 L1179.2,830.3 L1180.4,828.8 L1181.5,826.7 L1182.2,824.2Z" fill="#286c2f" clip-path="url(#ts4)"/>
<path d="M1181.1,822.3 L1180.9,820.4 L1180.2,819.2 L1179.1,818.9 L1177.9,819.5 L1176.6,821.0 L1175.6,823.2 L1174.9,825.6 L1174.6,828.0 L1174.9,829.9 L1175.6,831.2 L1176.6,831.5 L1177.9,830.8 L1179.1,829.3 L1180.2,827.2 L1180.9,824.7Z" fill="none" stroke="#0f3513" stroke-width="1.5"/>
<clipPath id="tt5"><path d="M1169.2,771.8 L1171.1,772.7 L1172.2,773.8 L1172.4,775.1 L1171.6,776.3 L1169.9,777.3 L1167.6,777.8 L1165.1,777.9 L1162.7,777.5 L1160.8,776.7 L1159.6,775.5 L1159.5,774.2 L1160.3,773.0 L1162.0,772.1 L1164.2,771.5 L1166.8,771.4Z"/></clipPath>
<path d="M1169.2,771.8 L1171.1,772.7 L1172.2,773.8 L1172.4,775.1 L1171.6,776.3 L1169.9,777.3 L1167.6,777.8 L1165.1,777.9 L1162.7,777.5 L1160.8,776.7 L1159.6,775.5 L1159.5,774.2 L1160.3,773.0 L1162.0,772.1 L1164.2,771.5 L1166.8,771.4Z" fill="#5cb562"/>
<path d="M1169.2,770.1 L1171.1,771.0 L1172.2,772.1 L1172.4,773.4 L1171.6,774.6 L1169.9,775.6 L1167.6,776.1 L1165.1,776.2 L1162.7,775.8 L1160.8,775.0 L1159.6,773.8 L1159.5,772.5 L1160.3,771.3 L1162.0,770.4 L1164.2,769.8 L1166.8,769.7Z" fill="#286c2f" clip-path="url(#tt5)"/>
<path d="M1169.2,771.8 L1171.1,772.7 L1172.2,773.8 L1172.4,775.1 L1171.6,776.3 L1169.9,777.3 L1167.6,777.8 L1165.1,777.9 L1162.7,777.5 L1160.8,776.7 L1159.6,775.5 L1159.5,774.2 L1160.3,773.0 L1162.0,772.1 L1164.2,771.5 L1166.8,771.4Z" fill="none" stroke="#0f3513" stroke-width="1.5"/>
<clipPath id="ts5"><path d="M1197.4,808.2 L1197.2,806.3 L1196.5,805.1 L1195.4,804.8 L1194.2,805.4 L1192.9,806.9 L1191.9,809.1 L1191.2,811.5 L1190.9,813.9 L1191.2,815.8 L1191.9,817.0 L1192.9,817.3 L1194.2,816.7 L1195.4,815.2 L1196.5,813.0 L1197.2,810.6Z"/></clipPath>
<path d="M1197.4,808.2 L1197.2,806.3 L1196.5,805.1 L1195.4,804.8 L1194.2,805.4 L1192.9,806.9 L1191.9,809.1 L1191.2,811.5 L1190.9,813.9 L1191.2,815.8 L1191.9,817.0 L1192.9,817.3 L1194.2,816.7 L1195.4,815.2 L1196.5,813.0 L1197.2,810.6Z" fill="#55ac5b"/>
<path d="M1198.7,807.7 L1198.5,805.8 L1197.8,804.6 L1196.7,804.3 L1195.5,804.9 L1194.2,806.4 L1193.2,808.6 L1192.5,811.0 L1192.2,813.4 L1192.5,815.3 L1193.2,816.5 L1194.2,816.8 L1195.5,816.2 L1196.7,814.7 L1197.8,812.5 L1198.5,810.1Z" fill="#286c2f" clip-path="url(#ts5)"/>
<path d="M1197.4,808.2 L1197.2,806.3 L1196.5,805.1 L1195.4,804.8 L1194.2,805.4 L1192.9,806.9 L1191.9,809.1 L1191.2,811.5 L1190.9,813.9 L1191.2,815.8 L1191.9,817.0 L1192.9,817.3 L1194.2,816.7 L1195.4,815.2 L1196.5,813.0 L1197.2,810.6Z" fill="none" stroke="#0f3513" stroke-width="1.5"/>
<clipPath id="tt6"><path d="M1185.5,757.7 L1187.4,758.6 L1188.5,759.7 L1188.7,761.0 L1187.9,762.2 L1186.2,763.1 L1183.9,763.7 L1181.4,763.8 L1179.0,763.4 L1177.1,762.5 L1175.9,761.4 L1175.8,760.1 L1176.6,758.9 L1178.3,758.0 L1180.5,757.4 L1183.1,757.3Z"/></clipPath>
<path d="M1185.5,757.7 L1187.4,758.6 L1188.5,759.7 L1188.7,761.0 L1187.9,762.2 L1186.2,763.1 L1183.9,763.7 L1181.4,763.8 L1179.0,763.4 L1177.1,762.5 L1175.9,761.4 L1175.8,760.1 L1176.6,758.9 L1178.3,758.0 L1180.5,757.4 L1183.1,757.3Z" fill="#5cb562"/>
<path d="M1185.5,756.0 L1187.4,756.9 L1188.5,758.0 L1188.7,759.3 L1187.9,760.5 L1186.2,761.4 L1183.9,762.0 L1181.4,762.1 L1179.0,761.7 L1177.1,760.8 L1175.9,759.7 L1175.8,758.4 L1176.6,757.2 L1178.3,756.3 L1180.5,755.7 L1183.1,755.6Z" fill="#286c2f" clip-path="url(#tt6)"/>
<path d="M1185.5,757.7 L1187.4,758.6 L1188.5,759.7 L1188.7,761.0 L1187.9,762.2 L1186.2,763.1 L1183.9,763.7 L1181.4,763.8 L1179.0,763.4 L1177.1,762.5 L1175.9,761.4 L1175.8,760.1 L1176.6,758.9 L1178.3,758.0 L1180.5,757.4 L1183.1,757.3Z" fill="none" stroke="#0f3513" stroke-width="1.5"/>
<clipPath id="ts6"><path d="M1213.7,794.1 L1213.5,792.2 L1212.8,790.9 L1211.7,790.6 L1210.5,791.3 L1209.2,792.8 L1208.2,794.9 L1207.5,797.4 L1207.2,799.8 L1207.5,801.7 L1208.2,802.9 L1209.2,803.2 L1210.5,802.6 L1211.7,801.1 L1212.8,798.9 L1213.5,796.5Z"/></clipPath>
<path d="M1213.7,794.1 L1213.5,792.2 L1212.8,790.9 L1211.7,790.6 L1210.5,791.3 L1209.2,792.8 L1208.2,794.9 L1207.5,797.4 L1207.2,799.8 L1207.5,801.7 L1208.2,802.9 L1209.2,803.2 L1210.5,802.6 L1211.7,801.1 L1212.8,798.9 L1213.5,796.5Z" fill="#55ac5b"/>
<path d="M1215.0,793.6 L1214.8,791.7 L1214.1,790.4 L1213.0,790.1 L1211.8,790.8 L1210.5,792.3 L1209.5,794.4 L1208.8,796.9 L1208.5,799.3 L1208.8,801.2 L1209.5,802.4 L1210.5,802.7 L1211.8,802.1 L1213.0,800.6 L1214.1,798.4 L1214.8,796.0Z" fill="#286c2f" clip-path="url(#ts6)"/>
<path d="M1213.7,794.1 L1213.5,792.2 L1212.8,790.9 L1211.7,790.6 L1210.5,791.3 L1209.2,792.8 L1208.2,794.9 L1207.5,797.4 L1207.2,799.8 L1207.5,801.7 L1208.2,802.9 L1209.2,803.2 L1210.5,802.6 L1211.7,801.1 L1212.8,798.9 L1213.5,796.5Z" fill="none" stroke="#0f3513" stroke-width="1.5"/>
<clipPath id="tt7"><path d="M1201.8,743.6 L1203.7,744.5 L1204.8,745.6 L1205.0,746.9 L1204.2,748.1 L1202.5,749.0 L1200.2,749.6 L1197.7,749.7 L1195.3,749.3 L1193.4,748.4 L1192.2,747.3 L1192.1,746.0 L1192.9,744.8 L1194.6,743.9 L1196.8,743.3 L1199.4,743.2Z"/></clipPath>
<path d="M1201.8,743.6 L1203.7,744.5 L1204.8,745.6 L1205.0,746.9 L1204.2,748.1 L1202.5,749.0 L1200.2,749.6 L1197.7,749.7 L1195.3,749.3 L1193.4,748.4 L1192.2,747.3 L1192.1,746.0 L1192.9,744.8 L1194.6,743.9 L1196.8,743.3 L1199.4,743.2Z" fill="#5cb562"/>
<path d="M1201.8,741.9 L1203.7,742.8 L1204.8,743.9 L1205.0,745.2 L1204.2,746.4 L1202.5,747.3 L1200.2,747.9 L1197.7,748.0 L1195.3,747.6 L1193.4,746.7 L1192.2,745.6 L1192.1,744.3 L1192.9,743.1 L1194.6,742.2 L1196.8,741.6 L1199.4,741.5Z" fill="#286c2f" clip-path="url(#tt7)"/>
<path d="M1201.8,743.6 L1203.7,744.5 L1204.8,745.6 L1205.0,746.9 L1204.2,748.1 L1202.5,749.0 L1200.2,749.6 L1197.7,749.7 L1195.3,749.3 L1193.4,748.4 L1192.2,747.3 L1192.1,746.0 L1192.9,744.8 L1194.6,743.9 L1196.8,743.3 L1199.4,743.2Z" fill="none" stroke="#0f3513" stroke-width="1.5"/>
<clipPath id="ts7"><path d="M1230.0,780.0 L1229.8,778.1 L1229.1,776.8 L1228.0,776.5 L1226.8,777.2 L1225.5,778.7 L1224.5,780.8 L1223.8,783.3 L1223.5,785.6 L1223.8,787.6 L1224.5,788.8 L1225.5,789.1 L1226.8,788.5 L1228.0,787.0 L1229.1,784.8 L1229.8,782.4Z"/></clipPath>
<path d="M1230.0,780.0 L1229.8,778.1 L1229.1,776.8 L1228.0,776.5 L1226.8,777.2 L1225.5,778.7 L1224.5,780.8 L1223.8,783.3 L1223.5,785.6 L1223.8,787.6 L1224.5,788.8 L1225.5,789.1 L1226.8,788.5 L1228.0,787.0 L1229.1,784.8 L1229.8,782.4Z" fill="#55ac5b"/>
<path d="M1231.3,779.5 L1231.1,777.6 L1230.4,776.3 L1229.3,776.0 L1228.1,776.7 L1226.8,778.2 L1225.8,780.3 L1225.1,782.8 L1224.8,785.1 L1225.1,787.1 L1225.8,788.3 L1226.8,788.6 L1228.1,788.0 L1229.3,786.5 L1230.4,784.3 L1231.1,781.9Z" fill="#286c2f" clip-path="url(#ts7)"/>
<path d="M1230.0,780.0 L1229.8,778.1 L1229.1,776.8 L1228.0,776.5 L1226.8,777.2 L1225.5,778.7 L1224.5,780.8 L1223.8,783.3 L1223.5,785.6 L1223.8,787.6 L1224.5,788.8 L1225.5,789.1 L1226.8,788.5 L1228.0,787.0 L1229.1,784.8 L1229.8,782.4Z" fill="none" stroke="#0f3513" stroke-width="1.5"/>
<clipPath id="tt8"><path d="M1218.1,729.5 L1220.0,730.3 L1221.1,731.5 L1221.3,732.7 L1220.5,734.0 L1218.8,734.9 L1216.5,735.5 L1214.0,735.6 L1211.6,735.1 L1209.7,734.3 L1208.5,733.2 L1208.4,731.9 L1209.2,730.7 L1210.9,729.7 L1213.1,729.2 L1215.7,729.1Z"/></clipPath>
<path d="M1218.1,729.5 L1220.0,730.3 L1221.1,731.5 L1221.3,732.7 L1220.5,734.0 L1218.8,734.9 L1216.5,735.5 L1214.0,735.6 L1211.6,735.1 L1209.7,734.3 L1208.5,733.2 L1208.4,731.9 L1209.2,730.7 L1210.9,729.7 L1213.1,729.2 L1215.7,729.1Z" fill="#5cb562"/>
<path d="M1218.1,727.8 L1220.0,728.6 L1221.1,729.8 L1221.3,731.0 L1220.5,732.3 L1218.8,733.2 L1216.5,733.8 L1214.0,733.9 L1211.6,733.4 L1209.7,732.6 L1208.5,731.5 L1208.4,730.2 L1209.2,729.0 L1210.9,728.0 L1213.1,727.5 L1215.7,727.4Z" fill="#286c2f" clip-path="url(#tt8)"/>
<path d="M1218.1,729.5 L1220.0,730.3 L1221.1,731.5 L1221.3,732.7 L1220.5,734.0 L1218.8,734.9 L1216.5,735.5 L1214.0,735.6 L1211.6,735.1 L1209.7,734.3 L1208.5,733.2 L1208.4,731.9 L1209.2,730.7 L1210.9,729.7 L1213.1,729.2 L1215.7,729.1Z" fill="none" stroke="#0f3513" stroke-width="1.5"/>
<clipPath id="ts8"><path d="M1246.3,765.9 L1246.1,763.9 L1245.4,762.7 L1244.3,762.4 L1243.1,763.1 L1241.8,764.6 L1240.8,766.7 L1240.1,769.2 L1239.8,771.5 L1240.1,773.5 L1240.8,774.7 L1241.8,775.0 L1243.1,774.4 L1244.3,772.8 L1245.4,770.7 L1246.1,768.3Z"/></clipPath>
<path d="M1246.3,765.9 L1246.1,763.9 L1245.4,762.7 L1244.3,762.4 L1243.1,763.1 L1241.8,764.6 L1240.8,766.7 L1240.1,769.2 L1239.8,771.5 L1240.1,773.5 L1240.8,774.7 L1241.8,775.0 L1243.1,774.4 L1244.3,772.8 L1245.4,770.7 L1246.1,768.3Z" fill="#55ac5b"/>
<path d="M1247.6,765.4 L1247.4,763.4 L1246.7,762.2 L1245.6,761.9 L1244.4,762.6 L1243.1,764.1 L1242.1,766.2 L1241.4,768.7 L1241.1,771.0 L1241.4,773.0 L1242.1,774.2 L1243.1,774.5 L1244.4,773.9 L1245.6,772.3 L1246.7,770.2 L1247.4,767.8Z" fill="#286c2f" clip-path="url(#ts8)"/>
<path d="M1246.3,765.9 L1246.1,763.9 L1245.4,762.7 L1244.3,762.4 L1243.1,763.1 L1241.8,764.6 L1240.8,766.7 L1240.1,769.2 L1239.8,771.5 L1240.1,773.5 L1240.8,774.7 L1241.8,775.0 L1243.1,774.4 L1244.3,772.8 L1245.4,770.7 L1246.1,768.3Z" fill="none" stroke="#0f3513" stroke-width="1.5"/>
<clipPath id="tt9"><path d="M1234.4,715.4 L1236.3,716.2 L1237.4,717.4 L1237.6,718.6 L1236.8,719.8 L1235.1,720.8 L1232.8,721.4 L1230.3,721.4 L1227.9,721.0 L1226.0,720.2 L1224.8,719.1 L1224.7,717.8 L1225.5,716.6 L1227.2,715.6 L1229.4,715.1 L1232.0,715.0Z"/></clipPath>
<path d="M1234.4,715.4 L1236.3,716.2 L1237.4,717.4 L1237.6,718.6 L1236.8,719.8 L1235.1,720.8 L1232.8,721.4 L1230.3,721.4 L1227.9,721.0 L1226.0,720.2 L1224.8,719.1 L1224.7,717.8 L1225.5,716.6 L1227.2,715.6 L1229.4,715.1 L1232.0,715.0Z" fill="#5cb562"/>
<path d="M1234.4,713.7 L1236.3,714.5 L1237.4,715.7 L1237.6,716.9 L1236.8,718.1 L1235.1,719.1 L1232.8,719.7 L1230.3,719.7 L1227.9,719.3 L1226.0,718.5 L1224.8,717.4 L1224.7,716.1 L1225.5,714.9 L1227.2,713.9 L1229.4,713.4 L1232.0,713.3Z" fill="#286c2f" clip-path="url(#tt9)"/>
<path d="M1234.4,715.4 L1236.3,716.2 L1237.4,717.4 L1237.6,718.6 L1236.8,719.8 L1235.1,720.8 L1232.8,721.4 L1230.3,721.4 L1227.9,721.0 L1226.0,720.2 L1224.8,719.1 L1224.7,717.8 L1225.5,716.6 L1227.2,715.6 L1229.4,715.1 L1232.0,715.0Z" fill="none" stroke="#0f3513" stroke-width="1.5"/>
<clipPath id="ts9"><path d="M1262.6,751.8 L1262.4,749.8 L1261.7,748.6 L1260.6,748.3 L1259.4,748.9 L1258.1,750.5 L1257.1,752.6 L1256.4,755.0 L1256.1,757.4 L1256.4,759.4 L1257.1,760.6 L1258.1,760.9 L1259.4,760.2 L1260.6,758.7 L1261.7,756.6 L1262.4,754.1Z"/></clipPath>
<path d="M1262.6,751.8 L1262.4,749.8 L1261.7,748.6 L1260.6,748.3 L1259.4,748.9 L1258.1,750.5 L1257.1,752.6 L1256.4,755.0 L1256.1,757.4 L1256.4,759.4 L1257.1,760.6 L1258.1,760.9 L1259.4,760.2 L1260.6,758.7 L1261.7,756.6 L1262.4,754.1Z" fill="#55ac5b"/>
<path d="M1263.9,751.3 L1263.7,749.3 L1263.0,748.1 L1261.9,747.8 L1260.7,748.4 L1259.4,750.0 L1258.4,752.1 L1257.7,754.5 L1257.4,756.9 L1257.7,758.9 L1258.4,760.1 L1259.4,760.4 L1260.7,759.7 L1261.9,758.2 L1263.0,756.1 L1263.7,753.6Z" fill="#286c2f" clip-path="url(#ts9)"/>
<path d="M1262.6,751.8 L1262.4,749.8 L1261.7,748.6 L1260.6,748.3 L1259.4,748.9 L1258.1,750.5 L1257.1,752.6 L1256.4,755.0 L1256.1,757.4 L1256.4,759.4 L1257.1,760.6 L1258.1,760.9 L1259.4,760.2 L1260.6,758.7 L1261.7,756.6 L1262.4,754.1Z" fill="none" stroke="#0f3513" stroke-width="1.5"/>
<clipPath id="tt10"><path d="M1250.7,701.3 L1252.6,702.1 L1253.7,703.2 L1253.9,704.5 L1253.1,705.7 L1251.4,706.7 L1249.1,707.2 L1246.6,707.3 L1244.2,706.9 L1242.3,706.1 L1241.1,704.9 L1241.0,703.7 L1241.8,702.5 L1243.5,701.5 L1245.7,700.9 L1248.3,700.9Z"/></clipPath>
<path d="M1250.7,701.3 L1252.6,702.1 L1253.7,703.2 L1253.9,704.5 L1253.1,705.7 L1251.4,706.7 L1249.1,707.2 L1246.6,707.3 L1244.2,706.9 L1242.3,706.1 L1241.1,704.9 L1241.0,703.7 L1241.8,702.5 L1243.5,701.5 L1245.7,700.9 L1248.3,700.9Z" fill="#5cb562"/>
<path d="M1250.7,699.6 L1252.6,700.4 L1253.7,701.5 L1253.9,702.8 L1253.1,704.0 L1251.4,705.0 L1249.1,705.5 L1246.6,705.6 L1244.2,705.2 L1242.3,704.4 L1241.1,703.2 L1241.0,702.0 L1241.8,700.8 L1243.5,699.8 L1245.7,699.2 L1248.3,699.2Z" fill="#286c2f" clip-path="url(#tt10)"/>
<path d="M1250.7,701.3 L1252.6,702.1 L1253.7,703.2 L1253.9,704.5 L1253.1,705.7 L1251.4,706.7 L1249.1,707.2 L1246.6,707.3 L1244.2,706.9 L1242.3,706.1 L1241.1,704.9 L1241.0,703.7 L1241.8,702.5 L1243.5,701.5 L1245.7,700.9 L1248.3,700.9Z" fill="none" stroke="#0f3513" stroke-width="1.5"/>
<clipPath id="ts10"><path d="M1278.9,737.7 L1278.7,735.7 L1278.0,734.5 L1276.9,734.2 L1275.7,734.8 L1274.4,736.3 L1273.4,738.5 L1272.7,740.9 L1272.4,743.3 L1272.7,745.2 L1273.4,746.5 L1274.4,746.8 L1275.7,746.1 L1276.9,744.6 L1278.0,742.5 L1278.7,740.0Z"/></clipPath>
<path d="M1278.9,737.7 L1278.7,735.7 L1278.0,734.5 L1276.9,734.2 L1275.7,734.8 L1274.4,736.3 L1273.4,738.5 L1272.7,740.9 L1272.4,743.3 L1272.7,745.2 L1273.4,746.5 L1274.4,746.8 L1275.7,746.1 L1276.9,744.6 L1278.0,742.5 L1278.7,740.0Z" fill="#55ac5b"/>
<path d="M1280.2,737.2 L1280.0,735.2 L1279.3,734.0 L1278.2,733.7 L1277.0,734.3 L1275.7,735.8 L1274.7,738.0 L1274.0,740.4 L1273.7,742.8 L1274.0,744.7 L1274.7,746.0 L1275.7,746.3 L1277.0,745.6 L1278.2,744.1 L1279.3,742.0 L1280.0,739.5Z" fill="#286c2f" clip-path="url(#ts10)"/>
<path d="M1278.9,737.7 L1278.7,735.7 L1278.0,734.5 L1276.9,734.2 L1275.7,734.8 L1274.4,736.3 L1273.4,738.5 L1272.7,740.9 L1272.4,743.3 L1272.7,745.2 L1273.4,746.5 L1274.4,746.8 L1275.7,746.1 L1276.9,744.6 L1278.0,742.5 L1278.7,740.0Z" fill="none" stroke="#0f3513" stroke-width="1.5"/>
<clipPath id="tt11"><path d="M1267.0,687.2 L1268.9,688.0 L1270.0,689.1 L1270.2,690.4 L1269.4,691.6 L1267.7,692.6 L1265.4,693.1 L1262.9,693.2 L1260.5,692.8 L1258.6,692.0 L1257.4,690.8 L1257.3,689.6 L1258.1,688.3 L1259.8,687.4 L1262.0,686.8 L1264.6,686.7Z"/></clipPath>
<path d="M1267.0,687.2 L1268.9,688.0 L1270.0,689.1 L1270.2,690.4 L1269.4,691.6 L1267.7,692.6 L1265.4,693.1 L1262.9,693.2 L1260.5,692.8 L1258.6,692.0 L1257.4,690.8 L1257.3,689.6 L1258.1,688.3 L1259.8,687.4 L1262.0,686.8 L1264.6,686.7Z" fill="#5cb562"/>
<path d="M1267.0,685.5 L1268.9,686.3 L1270.0,687.4 L1270.2,688.7 L1269.4,689.9 L1267.7,690.9 L1265.4,691.4 L1262.9,691.5 L1260.5,691.1 L1258.6,690.3 L1257.4,689.1 L1257.3,687.9 L1258.1,686.6 L1259.8,685.7 L1262.0,685.1 L1264.6,685.0Z" fill="#286c2f" clip-path="url(#tt11)"/>
<path d="M1267.0,687.2 L1268.9,688.0 L1270.0,689.1 L1270.2,690.4 L1269.4,691.6 L1267.7,692.6 L1265.4,693.1 L1262.9,693.2 L1260.5,692.8 L1258.6,692.0 L1257.4,690.8 L1257.3,689.6 L1258.1,688.3 L1259.8,687.4 L1262.0,686.8 L1264.6,686.7Z" fill="none" stroke="#0f3513" stroke-width="1.5"/>
<clipPath id="ts11"><path d="M1295.2,723.5 L1295.0,721.6 L1294.3,720.4 L1293.2,720.1 L1292.0,720.7 L1290.7,722.2 L1289.7,724.4 L1289.0,726.8 L1288.7,729.2 L1289.0,731.1 L1289.7,732.3 L1290.7,732.7 L1292.0,732.0 L1293.2,730.5 L1294.3,728.4 L1295.0,725.9Z"/></clipPath>
<path d="M1295.2,723.5 L1295.0,721.6 L1294.3,720.4 L1293.2,720.1 L1292.0,720.7 L1290.7,722.2 L1289.7,724.4 L1289.0,726.8 L1288.7,729.2 L1289.0,731.1 L1289.7,732.3 L1290.7,732.7 L1292.0,732.0 L1293.2,730.5 L1294.3,728.4 L1295.0,725.9Z" fill="#55ac5b"/>
<path d="M1296.5,723.0 L1296.3,721.1 L1295.6,719.9 L1294.5,719.6 L1293.3,720.2 L1292.0,721.7 L1291.0,723.9 L1290.3,726.3 L1290.0,728.7 L1290.3,730.6 L1291.0,731.8 L1292.0,732.2 L1293.3,731.5 L1294.5,730.0 L1295.6,727.9 L1296.3,725.4Z" fill="#286c2f" clip-path="url(#ts11)"/>
<path d="M1295.2,723.5 L1295.0,721.6 L1294.3,720.4 L1293.2,720.1 L1292.0,720.7 L1290.7,722.2 L1289.7,724.4 L1289.0,726.8 L1288.7,729.2 L1289.0,731.1 L1289.7,732.3 L1290.7,732.7 L1292.0,732.0 L1293.2,730.5 L1294.3,728.4 L1295.0,725.9Z" fill="none" stroke="#0f3513" stroke-width="1.5"/>
<clipPath id="tt12"><path d="M1283.3,673.0 L1285.2,673.9 L1286.3,675.0 L1286.5,676.3 L1285.7,677.5 L1284.0,678.4 L1281.7,679.0 L1279.2,679.1 L1276.8,678.7 L1274.9,677.8 L1273.7,676.7 L1273.6,675.4 L1274.4,674.2 L1276.1,673.3 L1278.3,672.7 L1280.9,672.6Z"/></clipPath>
<path d="M1283.3,673.0 L1285.2,673.9 L1286.3,675.0 L1286.5,676.3 L1285.7,677.5 L1284.0,678.4 L1281.7,679.0 L1279.2,679.1 L1276.8,678.7 L1274.9,677.8 L1273.7,676.7 L1273.6,675.4 L1274.4,674.2 L1276.1,673.3 L1278.3,672.7 L1280.9,672.6Z" fill="#5cb562"/>
<path d="M1283.3,671.3 L1285.2,672.2 L1286.3,673.3 L1286.5,674.6 L1285.7,675.8 L1284.0,676.7 L1281.7,677.3 L1279.2,677.4 L1276.8,677.0 L1274.9,676.1 L1273.7,675.0 L1273.6,673.7 L1274.4,672.5 L1276.1,671.6 L1278.3,671.0 L1280.9,670.9Z" fill="#286c2f" clip-path="url(#tt12)"/>
<path d="M1283.3,673.0 L1285.2,673.9 L1286.3,675.0 L1286.5,676.3 L1285.7,677.5 L1284.0,678.4 L1281.7,679.0 L1279.2,679.1 L1276.8,678.7 L1274.9,677.8 L1273.7,676.7 L1273.6,675.4 L1274.4,674.2 L1276.1,673.3 L1278.3,672.7 L1280.9,672.6Z" fill="none" stroke="#0f3513" stroke-width="1.5"/>
<clipPath id="ts12"><path d="M1311.5,709.4 L1311.3,707.5 L1310.6,706.3 L1309.5,705.9 L1308.3,706.6 L1307.0,708.1 L1306.0,710.2 L1305.3,712.7 L1305.0,715.1 L1305.3,717.0 L1306.0,718.2 L1307.0,718.5 L1308.3,717.9 L1309.5,716.4 L1310.6,714.2 L1311.3,711.8Z"/></clipPath>
<path d="M1311.5,709.4 L1311.3,707.5 L1310.6,706.3 L1309.5,705.9 L1308.3,706.6 L1307.0,708.1 L1306.0,710.2 L1305.3,712.7 L1305.0,715.1 L1305.3,717.0 L1306.0,718.2 L1307.0,718.5 L1308.3,717.9 L1309.5,716.4 L1310.6,714.2 L1311.3,711.8Z" fill="#55ac5b"/>
<path d="M1312.8,708.9 L1312.6,707.0 L1311.9,705.8 L1310.8,705.4 L1309.6,706.1 L1308.3,707.6 L1307.3,709.7 L1306.6,712.2 L1306.3,714.6 L1306.6,716.5 L1307.3,717.7 L1308.3,718.0 L1309.6,717.4 L1310.8,715.9 L1311.9,713.7 L1312.6,711.3Z" fill="#286c2f" clip-path="url(#ts12)"/>
<path d="M1311.5,709.4 L1311.3,707.5 L1310.6,706.3 L1309.5,705.9 L1308.3,706.6 L1307.0,708.1 L1306.0,710.2 L1305.3,712.7 L1305.0,715.1 L1305.3,717.0 L1306.0,718.2 L1307.0,718.5 L1308.3,717.9 L1309.5,716.4 L1310.6,714.2 L1311.3,711.8Z" fill="none" stroke="#0f3513" stroke-width="1.5"/>
<clipPath id="tt13"><path d="M1299.6,658.9 L1301.5,659.8 L1302.6,660.9 L1302.8,662.2 L1302.0,663.4 L1300.3,664.3 L1298.0,664.9 L1295.5,665.0 L1293.1,664.6 L1291.2,663.7 L1290.0,662.6 L1289.9,661.3 L1290.7,660.1 L1292.4,659.2 L1294.6,658.6 L1297.2,658.5Z"/></clipPath>
<path d="M1299.6,658.9 L1301.5,659.8 L1302.6,660.9 L1302.8,662.2 L1302.0,663.4 L1300.3,664.3 L1298.0,664.9 L1295.5,665.0 L1293.1,664.6 L1291.2,663.7 L1290.0,662.6 L1289.9,661.3 L1290.7,660.1 L1292.4,659.2 L1294.6,658.6 L1297.2,658.5Z" fill="#5cb562"/>
<path d="M1299.6,657.2 L1301.5,658.1 L1302.6,659.2 L1302.8,660.5 L1302.0,661.7 L1300.3,662.6 L1298.0,663.2 L1295.5,663.3 L1293.1,662.9 L1291.2,662.0 L1290.0,660.9 L1289.9,659.6 L1290.7,658.4 L1292.4,657.5 L1294.6,656.9 L1297.2,656.8Z" fill="#286c2f" clip-path="url(#tt13)"/>
<path d="M1299.6,658.9 L1301.5,659.8 L1302.6,660.9 L1302.8,662.2 L1302.0,663.4 L1300.3,664.3 L1298.0,664.9 L1295.5,665.0 L1293.1,664.6 L1291.2,663.7 L1290.0,662.6 L1289.9,661.3 L1290.7,660.1 L1292.4,659.2 L1294.6,658.6 L1297.2,658.5Z" fill="none" stroke="#0f3513" stroke-width="1.5"/>
<clipPath id="ts13"><path d="M1327.8,695.3 L1327.6,693.4 L1326.9,692.1 L1325.8,691.8 L1324.6,692.5 L1323.3,694.0 L1322.3,696.1 L1321.6,698.6 L1321.3,700.9 L1321.6,702.9 L1322.3,704.1 L1323.3,704.4 L1324.6,703.8 L1325.8,702.3 L1326.9,700.1 L1327.6,697.7Z"/></clipPath>
<path d="M1327.8,695.3 L1327.6,693.4 L1326.9,692.1 L1325.8,691.8 L1324.6,692.5 L1323.3,694.0 L1322.3,696.1 L1321.6,698.6 L1321.3,700.9 L1321.6,702.9 L1322.3,704.1 L1323.3,704.4 L1324.6,703.8 L1325.8,702.3 L1326.9,700.1 L1327.6,697.7Z" fill="#55ac5b"/>
<path d="M1329.1,694.8 L1328.9,692.9 L1328.2,691.6 L1327.1,691.3 L1325.9,692.0 L1324.6,693.5 L1323.6,695.6 L1322.9,698.1 L1322.6,700.4 L1322.9,702.4 L1323.6,703.6 L1324.6,703.9 L1325.9,703.3 L1327.1,701.8 L1328.2,699.6 L1328.9,697.2Z" fill="#286c2f" clip-path="url(#ts13)"/>
<path d="M1327.8,695.3 L1327.6,693.4 L1326.9,692.1 L1325.8,691.8 L1324.6,692.5 L1323.3,694.0 L1322.3,696.1 L1321.6,698.6 L1321.3,700.9 L1321.6,702.9 L1322.3,704.1 L1323.3,704.4 L1324.6,703.8 L1325.8,702.3 L1326.9,700.1 L1327.6,697.7Z" fill="none" stroke="#0f3513" stroke-width="1.5"/>
<clipPath id="tt14"><path d="M1315.9,644.8 L1317.8,645.6 L1318.9,646.8 L1319.1,648.1 L1318.3,649.3 L1316.6,650.2 L1314.3,650.8 L1311.8,650.9 L1309.4,650.5 L1307.5,649.6 L1306.3,648.5 L1306.2,647.2 L1307.0,646.0 L1308.7,645.0 L1310.9,644.5 L1313.5,644.4Z"/></clipPath>
<path d="M1315.9,644.8 L1317.8,645.6 L1318.9,646.8 L1319.1,648.1 L1318.3,649.3 L1316.6,650.2 L1314.3,650.8 L1311.8,650.9 L1309.4,650.5 L1307.5,649.6 L1306.3,648.5 L1306.2,647.2 L1307.0,646.0 L1308.7,645.0 L1310.9,644.5 L1313.5,644.4Z" fill="#5cb562"/>
<path d="M1315.9,643.1 L1317.8,643.9 L1318.9,645.1 L1319.1,646.4 L1318.3,647.6 L1316.6,648.5 L1314.3,649.1 L1311.8,649.2 L1309.4,648.8 L1307.5,647.9 L1306.3,646.8 L1306.2,645.5 L1307.0,644.3 L1308.7,643.3 L1310.9,642.8 L1313.5,642.7Z" fill="#286c2f" clip-path="url(#tt14)"/>
<path d="M1315.9,644.8 L1317.8,645.6 L1318.9,646.8 L1319.1,648.1 L1318.3,649.3 L1316.6,650.2 L1314.3,650.8 L1311.8,650.9 L1309.4,650.5 L1307.5,649.6 L1306.3,648.5 L1306.2,647.2 L1307.0,646.0 L1308.7,645.0 L1310.9,644.5 L1313.5,644.4Z" fill="none" stroke="#0f3513" stroke-width="1.5"/>
<clipPath id="ts14"><path d="M1344.1,681.2 L1343.9,679.2 L1343.2,678.0 L1342.1,677.7 L1340.9,678.4 L1339.6,679.9 L1338.6,682.0 L1337.9,684.5 L1337.6,686.8 L1337.9,688.8 L1338.6,690.0 L1339.6,690.3 L1340.9,689.7 L1342.1,688.1 L1343.2,686.0 L1343.9,683.6Z"/></clipPath>
<path d="M1344.1,681.2 L1343.9,679.2 L1343.2,678.0 L1342.1,677.7 L1340.9,678.4 L1339.6,679.9 L1338.6,682.0 L1337.9,684.5 L1337.6,686.8 L1337.9,688.8 L1338.6,690.0 L1339.6,690.3 L1340.9,689.7 L1342.1,688.1 L1343.2,686.0 L1343.9,683.6Z" fill="#55ac5b"/>
<path d="M1345.4,680.7 L1345.2,678.7 L1344.5,677.5 L1343.4,677.2 L1342.2,677.9 L1340.9,679.4 L1339.9,681.5 L1339.2,684.0 L1338.9,686.3 L1339.2,688.3 L1339.9,689.5 L1340.9,689.8 L1342.2,689.2 L1343.4,687.6 L1344.5,685.5 L1345.2,683.1Z" fill="#286c2f" clip-path="url(#ts14)"/>
<path d="M1344.1,681.2 L1343.9,679.2 L1343.2,678.0 L1342.1,677.7 L1340.9,678.4 L1339.6,679.9 L1338.6,682.0 L1337.9,684.5 L1337.6,686.8 L1337.9,688.8 L1338.6,690.0 L1339.6,690.3 L1340.9,689.7 L1342.1,688.1 L1343.2,686.0 L1343.9,683.6Z" fill="none" stroke="#0f3513" stroke-width="1.5"/>
<clipPath id="tt15"><path d="M1332.2,630.7 L1334.1,631.5 L1335.2,632.7 L1335.4,633.9 L1334.6,635.1 L1332.9,636.1 L1330.6,636.7 L1328.1,636.7 L1325.7,636.3 L1323.8,635.5 L1322.6,634.4 L1322.5,633.1 L1323.3,631.9 L1325.0,630.9 L1327.2,630.4 L1329.8,630.3Z"/></clipPath>
<path d="M1332.2,630.7 L1334.1,631.5 L1335.2,632.7 L1335.4,633.9 L1334.6,635.1 L1332.9,636.1 L1330.6,636.7 L1328.1,636.7 L1325.7,636.3 L1323.8,635.5 L1322.6,634.4 L1322.5,633.1 L1323.3,631.9 L1325.0,630.9 L1327.2,630.4 L1329.8,630.3Z" fill="#5cb562"/>
<path d="M1332.2,629.0 L1334.1,629.8 L1335.2,631.0 L1335.4,632.2 L1334.6,633.4 L1332.9,634.4 L1330.6,635.0 L1328.1,635.0 L1325.7,634.6 L1323.8,633.8 L1322.6,632.7 L1322.5,631.4 L1323.3,630.2 L1325.0,629.2 L1327.2,628.7 L1329.8,628.6Z" fill="#286c2f" clip-path="url(#tt15)"/>
<path d="M1332.2,630.7 L1334.1,631.5 L1335.2,632.7 L1335.4,633.9 L1334.6,635.1 L1332.9,636.1 L1330.6,636.7 L1328.1,636.7 L1325.7,636.3 L1323.8,635.5 L1322.6,634.4 L1322.5,633.1 L1323.3,631.9 L1325.0,630.9 L1327.2,630.4 L1329.8,630.3Z" fill="none" stroke="#0f3513" stroke-width="1.5"/>
<clipPath id="ts15"><path d="M1360.4,667.1 L1360.2,665.1 L1359.5,663.9 L1358.4,663.6 L1357.2,664.2 L1355.9,665.8 L1354.9,667.9 L1354.2,670.3 L1353.9,672.7 L1354.2,674.7 L1354.9,675.9 L1355.9,676.2 L1357.2,675.5 L1358.4,674.0 L1359.5,671.9 L1360.2,669.4Z"/></clipPath>
<path d="M1360.4,667.1 L1360.2,665.1 L1359.5,663.9 L1358.4,663.6 L1357.2,664.2 L1355.9,665.8 L1354.9,667.9 L1354.2,670.3 L1353.9,672.7 L1354.2,674.7 L1354.9,675.9 L1355.9,676.2 L1357.2,675.5 L1358.4,674.0 L1359.5,671.9 L1360.2,669.4Z" fill="#55ac5b"/>
<path d="M1361.7,666.6 L1361.5,664.6 L1360.8,663.4 L1359.7,663.1 L1358.5,663.7 L1357.2,665.3 L1356.2,667.4 L1355.5,669.8 L1355.2,672.2 L1355.5,674.2 L1356.2,675.4 L1357.2,675.7 L1358.5,675.0 L1359.7,673.5 L1360.8,671.4 L1361.5,668.9Z" fill="#286c2f" clip-path="url(#ts15)"/>
<path d="M1360.4,667.1 L1360.2,665.1 L1359.5,663.9 L1358.4,663.6 L1357.2,664.2 L1355.9,665.8 L1354.9,667.9 L1354.2,670.3 L1353.9,672.7 L1354.2,674.7 L1354.9,675.9 L1355.9,676.2 L1357.2,675.5 L1358.4,674.0 L1359.5,671.9 L1360.2,669.4Z" fill="none" stroke="#0f3513" stroke-width="1.5"/>
<clipPath id="tt16"><path d="M1348.5,616.6 L1350.4,617.4 L1351.5,618.6 L1351.7,619.8 L1350.9,621.0 L1349.2,622.0 L1346.9,622.5 L1344.4,622.6 L1342.0,622.2 L1340.1,621.4 L1338.9,620.2 L1338.8,619.0 L1339.6,617.8 L1341.3,616.8 L1343.5,616.2 L1346.1,616.2Z"/></clipPath>
<path d="M1348.5,616.6 L1350.4,617.4 L1351.5,618.6 L1351.7,619.8 L1350.9,621.0 L1349.2,622.0 L1346.9,622.5 L1344.4,622.6 L1342.0,622.2 L1340.1,621.4 L1338.9,620.2 L1338.8,619.0 L1339.6,617.8 L1341.3,616.8 L1343.5,616.2 L1346.1,616.2Z" fill="#5cb562"/>
<path d="M1348.5,614.9 L1350.4,615.7 L1351.5,616.9 L1351.7,618.1 L1350.9,619.3 L1349.2,620.3 L1346.9,620.8 L1344.4,620.9 L1342.0,620.5 L1340.1,619.7 L1338.9,618.5 L1338.8,617.3 L1339.6,616.1 L1341.3,615.1 L1343.5,614.5 L1346.1,614.5Z" fill="#286c2f" clip-path="url(#tt16)"/>
<path d="M1348.5,616.6 L1350.4,617.4 L1351.5,618.6 L1351.7,619.8 L1350.9,621.0 L1349.2,622.0 L1346.9,622.5 L1344.4,622.6 L1342.0,622.2 L1340.1,621.4 L1338.9,620.2 L1338.8,619.0 L1339.6,617.8 L1341.3,616.8 L1343.5,616.2 L1346.1,616.2Z" fill="none" stroke="#0f3513" stroke-width="1.5"/>
<clipPath id="ts16"><path d="M1376.7,653.0 L1376.5,651.0 L1375.8,649.8 L1374.7,649.5 L1373.5,650.1 L1372.2,651.6 L1371.2,653.8 L1370.5,656.2 L1370.2,658.6 L1370.5,660.5 L1371.2,661.8 L1372.2,662.1 L1373.5,661.4 L1374.7,659.9 L1375.8,657.8 L1376.5,655.3Z"/></clipPath>
<path d="M1376.7,653.0 L1376.5,651.0 L1375.8,649.8 L1374.7,649.5 L1373.5,650.1 L1372.2,651.6 L1371.2,653.8 L1370.5,656.2 L1370.2,658.6 L1370.5,660.5 L1371.2,661.8 L1372.2,662.1 L1373.5,661.4 L1374.7,659.9 L1375.8,657.8 L1376.5,655.3Z" fill="#55ac5b"/>
<path d="M1378.0,652.5 L1377.8,650.5 L1377.1,649.3 L1376.0,649.0 L1374.8,649.6 L1373.5,651.1 L1372.5,653.3 L1371.8,655.7 L1371.5,658.1 L1371.8,660.0 L1372.5,661.3 L1373.5,661.6 L1374.8,660.9 L1376.0,659.4 L1377.1,657.3 L1377.8,654.8Z" fill="#286c2f" clip-path="url(#ts16)"/>
<path d="M1376.7,653.0 L1376.5,651.0 L1375.8,649.8 L1374.7,649.5 L1373.5,650.1 L1372.2,651.6 L1371.2,653.8 L1370.5,656.2 L1370.2,658.6 L1370.5,660.5 L1371.2,661.8 L1372.2,662.1 L1373.5,661.4 L1374.7,659.9 L1375.8,657.8 L1376.5,655.3Z" fill="none" stroke="#0f3513" stroke-width="1.5"/>
<clipPath id="tt17"><path d="M1364.8,602.5 L1366.7,603.3 L1367.8,604.4 L1368.0,605.7 L1367.2,606.9 L1365.5,607.9 L1363.2,608.4 L1360.7,608.5 L1358.3,608.1 L1356.4,607.3 L1355.2,606.1 L1355.1,604.9 L1355.9,603.7 L1357.6,602.7 L1359.8,602.1 L1362.4,602.0Z"/></clipPath>
<path d="M1364.8,602.5 L1366.7,603.3 L1367.8,604.4 L1368.0,605.7 L1367.2,606.9 L1365.5,607.9 L1363.2,608.4 L1360.7,608.5 L1358.3,608.1 L1356.4,607.3 L1355.2,606.1 L1355.1,604.9 L1355.9,603.7 L1357.6,602.7 L1359.8,602.1 L1362.4,602.0Z" fill="#5cb562"/>
<path d="M1364.8,600.8 L1366.7,601.6 L1367.8,602.7 L1368.0,604.0 L1367.2,605.2 L1365.5,606.2 L1363.2,606.7 L1360.7,606.8 L1358.3,606.4 L1356.4,605.6 L1355.2,604.4 L1355.1,603.2 L1355.9,602.0 L1357.6,601.0 L1359.8,600.4 L1362.4,600.3Z" fill="#286c2f" clip-path="url(#tt17)"/>
<path d="M1364.8,602.5 L1366.7,603.3 L1367.8,604.4 L1368.0,605.7 L1367.2,606.9 L1365.5,607.9 L1363.2,608.4 L1360.7,608.5 L1358.3,608.1 L1356.4,607.3 L1355.2,606.1 L1355.1,604.9 L1355.9,603.7 L1357.6,602.7 L1359.8,602.1 L1362.4,602.0Z" fill="none" stroke="#0f3513" stroke-width="1.5"/>
<clipPath id="ts17"><path d="M1393.0,638.8 L1392.8,636.9 L1392.1,635.7 L1391.0,635.4 L1389.8,636.0 L1388.5,637.5 L1387.5,639.7 L1386.8,642.1 L1386.5,644.5 L1386.8,646.4 L1387.5,647.7 L1388.5,648.0 L1389.8,647.3 L1391.0,645.8 L1392.1,643.7 L1392.8,641.2Z"/></clipPath>
<path d="M1393.0,638.8 L1392.8,636.9 L1392.1,635.7 L1391.0,635.4 L1389.8,636.0 L1388.5,637.5 L1387.5,639.7 L1386.8,642.1 L1386.5,644.5 L1386.8,646.4 L1387.5,647.7 L1388.5,648.0 L1389.8,647.3 L1391.0,645.8 L1392.1,643.7 L1392.8,641.2Z" fill="#55ac5b"/>
<path d="M1394.3,638.3 L1394.1,636.4 L1393.4,635.2 L1392.3,634.9 L1391.1,635.5 L1389.8,637.0 L1388.8,639.2 L1388.1,641.6 L1387.8,644.0 L1388.1,645.9 L1388.8,647.2 L1389.8,647.5 L1391.1,646.8 L1392.3,645.3 L1393.4,643.2 L1394.1,640.7Z" fill="#286c2f" clip-path="url(#ts17)"/>
<path d="M1393.0,638.8 L1392.8,636.9 L1392.1,635.7 L1391.0,635.4 L1389.8,636.0 L1388.5,637.5 L1387.5,639.7 L1386.8,642.1 L1386.5,644.5 L1386.8,646.4 L1387.5,647.7 L1388.5,648.0 L1389.8,647.3 L1391.0,645.8 L1392.1,643.7 L1392.8,641.2Z" fill="none" stroke="#0f3513" stroke-width="1.5"/>
<clipPath id="tt18"><path d="M1381.1,588.3 L1383.0,589.2 L1384.1,590.3 L1384.3,591.6 L1383.5,592.8 L1381.8,593.8 L1379.5,594.3 L1377.0,594.4 L1374.6,594.0 L1372.7,593.2 L1371.5,592.0 L1371.4,590.7 L1372.2,589.5 L1373.9,588.6 L1376.1,588.0 L1378.7,587.9Z"/></clipPath>
<path d="M1381.1,588.3 L1383.0,589.2 L1384.1,590.3 L1384.3,591.6 L1383.5,592.8 L1381.8,593.8 L1379.5,594.3 L1377.0,594.4 L1374.6,594.0 L1372.7,593.2 L1371.5,592.0 L1371.4,590.7 L1372.2,589.5 L1373.9,588.6 L1376.1,588.0 L1378.7,587.9Z" fill="#5cb562"/>
<path d="M1381.1,586.6 L1383.0,587.5 L1384.1,588.6 L1384.3,589.9 L1383.5,591.1 L1381.8,592.1 L1379.5,592.6 L1377.0,592.7 L1374.6,592.3 L1372.7,591.5 L1371.5,590.3 L1371.4,589.0 L1372.2,587.8 L1373.9,586.9 L1376.1,586.3 L1378.7,586.2Z" fill="#286c2f" clip-path="url(#tt18)"/>
<path d="M1381.1,588.3 L1383.0,589.2 L1384.1,590.3 L1384.3,591.6 L1383.5,592.8 L1381.8,593.8 L1379.5,594.3 L1377.0,594.4 L1374.6,594.0 L1372.7,593.2 L1371.5,592.0 L1371.4,590.7 L1372.2,589.5 L1373.9,588.6 L1376.1,588.0 L1378.7,587.9Z" fill="none" stroke="#0f3513" stroke-width="1.5"/>
<clipPath id="ts18"><path d="M1409.3,624.7 L1409.1,622.8 L1408.4,621.6 L1407.3,621.3 L1406.1,621.9 L1404.8,623.4 L1403.8,625.6 L1403.1,628.0 L1402.8,630.4 L1403.1,632.3 L1403.8,633.5 L1404.8,633.8 L1406.1,633.2 L1407.3,631.7 L1408.4,629.5 L1409.1,627.1Z"/></clipPath>
<path d="M1409.3,624.7 L1409.1,622.8 L1408.4,621.6 L1407.3,621.3 L1406.1,621.9 L1404.8,623.4 L1403.8,625.6 L1403.1,628.0 L1402.8,630.4 L1403.1,632.3 L1403.8,633.5 L1404.8,633.8 L1406.1,633.2 L1407.3,631.7 L1408.4,629.5 L1409.1,627.1Z" fill="#55ac5b"/>
<path d="M1410.6,624.2 L1410.4,622.3 L1409.7,621.1 L1408.6,620.8 L1407.4,621.4 L1406.1,622.9 L1405.1,625.1 L1404.4,627.5 L1404.1,629.9 L1404.4,631.8 L1405.1,633.0 L1406.1,633.3 L1407.4,632.7 L1408.6,631.2 L1409.7,629.0 L1410.4,626.6Z" fill="#286c2f" clip-path="url(#ts18)"/>
<path d="M1409.3,624.7 L1409.1,622.8 L1408.4,621.6 L1407.3,621.3 L1406.1,621.9 L1404.8,623.4 L1403.8,625.6 L1403.1,628.0 L1402.8,630.4 L1403.1,632.3 L1403.8,633.5 L1404.8,633.8 L1406.1,633.2 L1407.3,631.7 L1408.4,629.5 L1409.1,627.1Z" fill="none" stroke="#0f3513" stroke-width="1.5"/>
<clipPath id="tt19"><path d="M1397.4,574.2 L1399.3,575.1 L1400.4,576.2 L1400.6,577.5 L1399.8,578.7 L1398.1,579.6 L1395.8,580.2 L1393.3,580.3 L1390.9,579.9 L1389.0,579.0 L1387.8,577.9 L1387.7,576.6 L1388.5,575.4 L1390.2,574.5 L1392.4,573.9 L1395.0,573.8Z"/></clipPath>
<path d="M1397.4,574.2 L1399.3,575.1 L1400.4,576.2 L1400.6,577.5 L1399.8,578.7 L1398.1,579.6 L1395.8,580.2 L1393.3,580.3 L1390.9,579.9 L1389.0,579.0 L1387.8,577.9 L1387.7,576.6 L1388.5,575.4 L1390.2,574.5 L1392.4,573.9 L1395.0,573.8Z" fill="#5cb562"/>
<path d="M1397.4,572.5 L1399.3,573.4 L1400.4,574.5 L1400.6,575.8 L1399.8,577.0 L1398.1,577.9 L1395.8,578.5 L1393.3,578.6 L1390.9,578.2 L1389.0,577.3 L1387.8,576.2 L1387.7,574.9 L1388.5,573.7 L1390.2,572.8 L1392.4,572.2 L1395.0,572.1Z" fill="#286c2f" clip-path="url(#tt19)"/>
<path d="M1397.4,574.2 L1399.3,575.1 L1400.4,576.2 L1400.6,577.5 L1399.8,578.7 L1398.1,579.6 L1395.8,580.2 L1393.3,580.3 L1390.9,579.9 L1389.0,579.0 L1387.8,577.9 L1387.7,576.6 L1388.5,575.4 L1390.2,574.5 L1392.4,573.9 L1395.0,573.8Z" fill="none" stroke="#0f3513" stroke-width="1.5"/>
<clipPath id="ts19"><path d="M1425.6,610.6 L1425.4,608.7 L1424.7,607.4 L1423.6,607.1 L1422.4,607.8 L1421.1,609.3 L1420.1,611.4 L1419.4,613.9 L1419.1,616.3 L1419.4,618.2 L1420.1,619.4 L1421.1,619.7 L1422.4,619.1 L1423.6,617.6 L1424.7,615.4 L1425.4,613.0Z"/></clipPath>
<path d="M1425.6,610.6 L1425.4,608.7 L1424.7,607.4 L1423.6,607.1 L1422.4,607.8 L1421.1,609.3 L1420.1,611.4 L1419.4,613.9 L1419.1,616.3 L1419.4,618.2 L1420.1,619.4 L1421.1,619.7 L1422.4,619.1 L1423.6,617.6 L1424.7,615.4 L1425.4,613.0Z" fill="#55ac5b"/>
<path d="M1426.9,610.1 L1426.7,608.2 L1426.0,606.9 L1424.9,606.6 L1423.7,607.3 L1422.4,608.8 L1421.4,610.9 L1420.7,613.4 L1420.4,615.8 L1420.7,617.7 L1421.4,618.9 L1422.4,619.2 L1423.7,618.6 L1424.9,617.1 L1426.0,614.9 L1426.7,612.5Z" fill="#286c2f" clip-path="url(#ts19)"/>
<path d="M1425.6,610.6 L1425.4,608.7 L1424.7,607.4 L1423.6,607.1 L1422.4,607.8 L1421.1,609.3 L1420.1,611.4 L1419.4,613.9 L1419.1,616.3 L1419.4,618.2 L1420.1,619.4 L1421.1,619.7 L1422.4,619.1 L1423.6,617.6 L1424.7,615.4 L1425.4,613.0Z" fill="none" stroke="#0f3513" stroke-width="1.5"/>
<clipPath id="tt20"><path d="M1413.7,560.1 L1415.6,560.9 L1416.7,562.1 L1416.9,563.4 L1416.1,564.6 L1414.4,565.5 L1412.1,566.1 L1409.6,566.2 L1407.2,565.8 L1405.3,564.9 L1404.1,563.8 L1404.0,562.5 L1404.8,561.3 L1406.5,560.3 L1408.7,559.8 L1411.3,559.7Z"/></clipPath>
<path d="M1413.7,560.1 L1415.6,560.9 L1416.7,562.1 L1416.9,563.4 L1416.1,564.6 L1414.4,565.5 L1412.1,566.1 L1409.6,566.2 L1407.2,565.8 L1405.3,564.9 L1404.1,563.8 L1404.0,562.5 L1404.8,561.3 L1406.5,560.3 L1408.7,559.8 L1411.3,559.7Z" fill="#5cb562"/>
<path d="M1413.7,558.4 L1415.6,559.2 L1416.7,560.4 L1416.9,561.7 L1416.1,562.9 L1414.4,563.8 L1412.1,564.4 L1409.6,564.5 L1407.2,564.1 L1405.3,563.2 L1404.1,562.1 L1404.0,560.8 L1404.8,559.6 L1406.5,558.6 L1408.7,558.1 L1411.3,558.0Z" fill="#286c2f" clip-path="url(#tt20)"/>
<path d="M1413.7,560.1 L1415.6,560.9 L1416.7,562.1 L1416.9,563.4 L1416.1,564.6 L1414.4,565.5 L1412.1,566.1 L1409.6,566.2 L1407.2,565.8 L1405.3,564.9 L1404.1,563.8 L1404.0,562.5 L1404.8,561.3 L1406.5,560.3 L1408.7,559.8 L1411.3,559.7Z" fill="none" stroke="#0f3513" stroke-width="1.5"/>
<clipPath id="ts20"><path d="M1441.9,596.5 L1441.7,594.5 L1441.0,593.3 L1439.9,593.0 L1438.7,593.7 L1437.4,595.2 L1436.4,597.3 L1435.7,599.8 L1435.4,602.1 L1435.7,604.1 L1436.4,605.3 L1437.4,605.6 L1438.7,605.0 L1439.9,603.5 L1441.0,601.3 L1441.7,598.9Z"/></clipPath>
<path d="M1441.9,596.5 L1441.7,594.5 L1441.0,593.3 L1439.9,593.0 L1438.7,593.7 L1437.4,595.2 L1436.4,597.3 L1435.7,599.8 L1435.4,602.1 L1435.7,604.1 L1436.4,605.3 L1437.4,605.6 L1438.7,605.0 L1439.9,603.5 L1441.0,601.3 L1441.7,598.9Z" fill="#55ac5b"/>
<path d="M1443.2,596.0 L1443.0,594.0 L1442.3,592.8 L1441.2,592.5 L1440.0,593.2 L1438.7,594.7 L1437.7,596.8 L1437.0,599.3 L1436.7,601.6 L1437.0,603.6 L1437.7,604.8 L1438.7,605.1 L1440.0,604.5 L1441.2,603.0 L1442.3,600.8 L1443.0,598.4Z" fill="#286c2f" clip-path="url(#ts20)"/>
<path d="M1441.9,596.5 L1441.7,594.5 L1441.0,593.3 L1439.9,593.0 L1438.7,593.7 L1437.4,595.2 L1436.4,597.3 L1435.7,599.8 L1435.4,602.1 L1435.7,604.1 L1436.4,605.3 L1437.4,605.6 L1438.7,605.0 L1439.9,603.5 L1441.0,601.3 L1441.7,598.9Z" fill="none" stroke="#0f3513" stroke-width="1.5"/>
<clipPath id="tt21"><path d="M1430.0,546.0 L1431.9,546.8 L1433.0,548.0 L1433.2,549.2 L1432.4,550.4 L1430.7,551.4 L1428.4,552.0 L1425.9,552.1 L1423.5,551.6 L1421.6,550.8 L1420.4,549.7 L1420.3,548.4 L1421.1,547.2 L1422.8,546.2 L1425.0,545.7 L1427.6,545.6Z"/></clipPath>
<path d="M1430.0,546.0 L1431.9,546.8 L1433.0,548.0 L1433.2,549.2 L1432.4,550.4 L1430.7,551.4 L1428.4,552.0 L1425.9,552.1 L1423.5,551.6 L1421.6,550.8 L1420.4,549.7 L1420.3,548.4 L1421.1,547.2 L1422.8,546.2 L1425.0,545.7 L1427.6,545.6Z" fill="#5cb562"/>
<path d="M1430.0,544.3 L1431.9,545.1 L1433.0,546.3 L1433.2,547.5 L1432.4,548.7 L1430.7,549.7 L1428.4,550.3 L1425.9,550.4 L1423.5,549.9 L1421.6,549.1 L1420.4,548.0 L1420.3,546.7 L1421.1,545.5 L1422.8,544.5 L1425.0,544.0 L1427.6,543.9Z" fill="#286c2f" clip-path="url(#tt21)"/>
<path d="M1430.0,546.0 L1431.9,546.8 L1433.0,548.0 L1433.2,549.2 L1432.4,550.4 L1430.7,551.4 L1428.4,552.0 L1425.9,552.1 L1423.5,551.6 L1421.6,550.8 L1420.4,549.7 L1420.3,548.4 L1421.1,547.2 L1422.8,546.2 L1425.0,545.7 L1427.6,545.6Z" fill="none" stroke="#0f3513" stroke-width="1.5"/>
<clipPath id="ts21"><path d="M1458.2,582.4 L1458.0,580.4 L1457.3,579.2 L1456.2,578.9 L1455.0,579.6 L1453.7,581.1 L1452.7,583.2 L1452.0,585.6 L1451.7,588.0 L1452.0,590.0 L1452.7,591.2 L1453.7,591.5 L1455.0,590.8 L1456.2,589.3 L1457.3,587.2 L1458.0,584.8Z"/></clipPath>
<path d="M1458.2,582.4 L1458.0,580.4 L1457.3,579.2 L1456.2,578.9 L1455.0,579.6 L1453.7,581.1 L1452.7,583.2 L1452.0,585.6 L1451.7,588.0 L1452.0,590.0 L1452.7,591.2 L1453.7,591.5 L1455.0,590.8 L1456.2,589.3 L1457.3,587.2 L1458.0,584.8Z" fill="#55ac5b"/>
<path d="M1459.5,581.9 L1459.3,579.9 L1458.6,578.7 L1457.5,578.4 L1456.3,579.1 L1455.0,580.6 L1454.0,582.7 L1453.3,585.1 L1453.0,587.5 L1453.3,589.5 L1454.0,590.7 L1455.0,591.0 L1456.3,590.3 L1457.5,588.8 L1458.6,586.7 L1459.3,584.3Z" fill="#286c2f" clip-path="url(#ts21)"/>
<path d="M1458.2,582.4 L1458.0,580.4 L1457.3,579.2 L1456.2,578.9 L1455.0,579.6 L1453.7,581.1 L1452.7,583.2 L1452.0,585.6 L1451.7,588.0 L1452.0,590.0 L1452.7,591.2 L1453.7,591.5 L1455.0,590.8 L1456.2,589.3 L1457.3,587.2 L1458.0,584.8Z" fill="none" stroke="#0f3513" stroke-width="1.5"/>
<clipPath id="tt22"><path d="M1446.3,531.9 L1448.2,532.7 L1449.3,533.9 L1449.5,535.1 L1448.7,536.3 L1447.0,537.3 L1444.7,537.9 L1442.2,537.9 L1439.8,537.5 L1437.9,536.7 L1436.7,535.5 L1436.6,534.3 L1437.4,533.1 L1439.1,532.1 L1441.3,531.6 L1443.9,531.5Z"/></clipPath>
<path d="M1446.3,531.9 L1448.2,532.7 L1449.3,533.9 L1449.5,535.1 L1448.7,536.3 L1447.0,537.3 L1444.7,537.9 L1442.2,537.9 L1439.8,537.5 L1437.9,536.7 L1436.7,535.5 L1436.6,534.3 L1437.4,533.1 L1439.1,532.1 L1441.3,531.6 L1443.9,531.5Z" fill="#5cb562"/>
<path d="M1446.3,530.2 L1448.2,531.0 L1449.3,532.2 L1449.5,533.4 L1448.7,534.6 L1447.0,535.6 L1444.7,536.2 L1442.2,536.2 L1439.8,535.8 L1437.9,535.0 L1436.7,533.8 L1436.6,532.6 L1437.4,531.4 L1439.1,530.4 L1441.3,529.9 L1443.9,529.8Z" fill="#286c2f" clip-path="url(#tt22)"/>
<path d="M1446.3,531.9 L1448.2,532.7 L1449.3,533.9 L1449.5,535.1 L1448.7,536.3 L1447.0,537.3 L1444.7,537.9 L1442.2,537.9 L1439.8,537.5 L1437.9,536.7 L1436.7,535.5 L1436.6,534.3 L1437.4,533.1 L1439.1,532.1 L1441.3,531.6 L1443.9,531.5Z" fill="none" stroke="#0f3513" stroke-width="1.5"/>
<clipPath id="ts22"><path d="M1474.5,568.3 L1474.3,566.3 L1473.6,565.1 L1472.5,564.8 L1471.3,565.4 L1470.0,566.9 L1469.0,569.1 L1468.3,571.5 L1468.0,573.9 L1468.3,575.9 L1469.0,577.1 L1470.0,577.4 L1471.3,576.7 L1472.5,575.2 L1473.6,573.1 L1474.3,570.6Z"/></clipPath>
<path d="M1474.5,568.3 L1474.3,566.3 L1473.6,565.1 L1472.5,564.8 L1471.3,565.4 L1470.0,566.9 L1469.0,569.1 L1468.3,571.5 L1468.0,573.9 L1468.3,575.9 L1469.0,577.1 L1470.0,577.4 L1471.3,576.7 L1472.5,575.2 L1473.6,573.1 L1474.3,570.6Z" fill="#55ac5b"/>
<path d="M1475.8,567.8 L1475.6,565.8 L1474.9,564.6 L1473.8,564.3 L1472.6,564.9 L1471.3,566.4 L1470.3,568.6 L1469.6,571.0 L1469.3,573.4 L1469.6,575.4 L1470.3,576.6 L1471.3,576.9 L1472.6,576.2 L1473.8,574.7 L1474.9,572.6 L1475.6,570.1Z" fill="#286c2f" clip-path="url(#ts22)"/>
<path d="M1474.5,568.3 L1474.3,566.3 L1473.6,565.1 L1472.5,564.8 L1471.3,565.4 L1470.0,566.9 L1469.0,569.1 L1468.3,571.5 L1468.0,573.9 L1468.3,575.9 L1469.0,577.1 L1470.0,577.4 L1471.3,576.7 L1472.5,575.2 L1473.6,573.1 L1474.3,570.6Z" fill="none" stroke="#0f3513" stroke-width="1.5"/>
<clipPath id="tt23"><path d="M1462.6,517.8 L1464.5,518.6 L1465.6,519.7 L1465.8,521.0 L1465.0,522.2 L1463.3,523.2 L1461.0,523.7 L1458.5,523.8 L1456.1,523.4 L1454.2,522.6 L1453.0,521.4 L1452.9,520.2 L1453.7,519.0 L1455.4,518.0 L1457.6,517.4 L1460.2,517.4Z"/></clipPath>
<path d="M1462.6,517.8 L1464.5,518.6 L1465.6,519.7 L1465.8,521.0 L1465.0,522.2 L1463.3,523.2 L1461.0,523.7 L1458.5,523.8 L1456.1,523.4 L1454.2,522.6 L1453.0,521.4 L1452.9,520.2 L1453.7,519.0 L1455.4,518.0 L1457.6,517.4 L1460.2,517.4Z" fill="#f4f8f4"/>
<path d="M1462.6,516.1 L1464.5,516.9 L1465.6,518.0 L1465.8,519.3 L1465.0,520.5 L1463.3,521.5 L1461.0,522.0 L1458.5,522.1 L1456.1,521.7 L1454.2,520.9 L1453.0,519.7 L1452.9,518.5 L1453.7,517.3 L1455.4,516.3 L1457.6,515.7 L1460.2,515.7Z" fill="#286c2f" clip-path="url(#tt23)"/>
<path d="M1462.6,517.8 L1464.5,518.6 L1465.6,519.7 L1465.8,521.0 L1465.0,522.2 L1463.3,523.2 L1461.0,523.7 L1458.5,523.8 L1456.1,523.4 L1454.2,522.6 L1453.0,521.4 L1452.9,520.2 L1453.7,519.0 L1455.4,518.0 L1457.6,517.4 L1460.2,517.4Z" fill="none" stroke="#0f3513" stroke-width="1.5"/>
<clipPath id="ts23"><path d="M1490.8,554.1 L1490.6,552.2 L1489.9,551.0 L1488.8,550.7 L1487.6,551.3 L1486.3,552.8 L1485.3,555.0 L1484.6,557.4 L1484.3,559.8 L1484.6,561.7 L1485.3,563.0 L1486.3,563.3 L1487.6,562.6 L1488.8,561.1 L1489.9,559.0 L1490.6,556.5Z"/></clipPath>
<path d="M1490.8,554.1 L1490.6,552.2 L1489.9,551.0 L1488.8,550.7 L1487.6,551.3 L1486.3,552.8 L1485.3,555.0 L1484.6,557.4 L1484.3,559.8 L1484.6,561.7 L1485.3,563.0 L1486.3,563.3 L1487.6,562.6 L1488.8,561.1 L1489.9,559.0 L1490.6,556.5Z" fill="#e8f0e8"/>
<path d="M1492.1,553.6 L1491.9,551.7 L1491.2,550.5 L1490.1,550.2 L1488.9,550.8 L1487.6,552.3 L1486.6,554.5 L1485.9,556.9 L1485.6,559.3 L1485.9,561.2 L1486.6,562.5 L1487.6,562.8 L1488.9,562.1 L1490.1,560.6 L1491.2,558.5 L1491.9,556.0Z" fill="#286c2f" clip-path="url(#ts23)"/>
<path d="M1490.8,554.1 L1490.6,552.2 L1489.9,551.0 L1488.8,550.7 L1487.6,551.3 L1486.3,552.8 L1485.3,555.0 L1484.6,557.4 L1484.3,559.8 L1484.6,561.7 L1485.3,563.0 L1486.3,563.3 L1487.6,562.6 L1488.8,561.1 L1489.9,559.0 L1490.6,556.5Z" fill="none" stroke="#0f3513" stroke-width="1.5"/>
<path d="M1056.2,837.1 L1447.4,498.3" stroke="#143d18" stroke-width="1.5" stroke-linecap="round"/>
<path d="M1447.4,498.3 L1503.9,514.6" stroke="#143d18" stroke-width="1.5" stroke-linecap="round"/>
<path d="M1112.7,853.4 L1503.9,514.6" stroke="#143d18" stroke-width="1.5" stroke-linecap="round"/>
<path d="M1503.9,514.6 L1503.9,571.1" stroke="#143d18" stroke-width="1.5" stroke-linecap="round"/>
<path d="M1112.7,909.9 L1503.9,571.1" stroke="#143d18" stroke-width="1.5" stroke-linecap="round"/>
<path d="M1056.2,837.1 L1112.7,853.4" stroke="#143d18" stroke-width="1.5" stroke-linecap="round"/>
<path d="M1112.7,853.4 L1112.7,909.9" stroke="#143d18" stroke-width="1.5" stroke-linecap="round"/>
<path d="M1112.7,909.9 L1056.2,893.6" stroke="#143d18" stroke-width="1.5" stroke-linecap="round"/>
<path d="M1056.2,893.6 L1056.2,837.1" stroke="#143d18" stroke-width="1.5" stroke-linecap="round"/>
<path d="M1129.5,880.6 L1127.9,881.7 L1126.4,882.2 L1125.0,882.1 L1123.8,881.4 L1122.8,880.2 L1122.0,878.4 L1121.5,876.1 L1121.4,873.5 L1121.4,579.3 L1121.5,576.4 L1122.0,573.4 L1122.8,570.3 L1123.8,567.3 L1125.0,564.5 L1126.4,561.9 L1127.9,559.8 L1129.5,558.2 L1162.1,529.9 L1289.1,439.4 L1290.5,438.5 L1291.8,437.7 L1293.2,436.9 L1294.5,436.2 L1295.9,435.7 L1297.2,435.2 L1298.5,434.8 L1299.8,434.5 L1301.0,434.3 L1302.3,434.2 L1303.5,434.2 L1304.7,434.3 L1305.9,434.5 L1307.1,434.7 L1308.2,435.1 L1309.3,435.6 L1310.4,436.1 L1311.4,436.7 L1312.4,437.5 L1313.4,438.3 L1314.3,439.2 L1315.2,440.2 L1316.1,441.3 L1316.9,442.5 L1317.7,443.7 L1318.5,445.0 L1319.2,446.5 L1319.9,448.0 L1320.5,449.5 L1321.1,451.2 L1321.6,452.9 L1322.1,454.7 L1322.6,456.5 L1323.0,458.5 L1323.3,460.4 L1323.6,462.5 L1323.9,464.6 L1324.1,466.8 L1324.3,469.0 L1324.4,471.2 L1333.3,689.1 L1333.2,692.0 L1332.8,695.1 L1332.1,698.4 L1331.1,701.5 L1329.8,704.5 L1328.4,707.2 L1326.8,709.4 L1325.1,711.2ZM1312.1,486.5 L1312.0,482.1 L1311.6,478.0 L1311.0,474.2 L1310.1,470.7 L1309.0,467.6 L1307.6,464.9 L1306.1,462.6 L1304.4,460.8 L1302.4,459.5 L1300.4,458.6 L1298.1,458.2 L1295.8,458.3 L1293.4,458.9 L1290.8,460.0 L1288.3,461.6 L1285.7,463.6 L1283.1,466.0 L1280.5,468.9 L1278.0,472.2 L1275.6,475.8 L1273.2,479.8 L1271.0,484.0 L1268.9,488.5 L1267.0,493.2 L1265.3,498.0 L1263.7,502.9 L1262.4,507.9 L1261.3,512.9 L1260.4,517.9 L1259.8,522.8 L1259.4,527.6 L1259.3,532.2 L1259.4,536.6 L1259.8,540.7 L1260.4,544.5 L1261.3,548.0 L1262.4,551.0 L1263.7,553.7 L1265.3,556.0 L1267.0,557.8 L1268.9,559.2 L1271.0,560.1 L1273.2,560.4 L1275.6,560.3 L1278.0,559.7 L1280.5,558.6 L1283.1,557.1 L1285.7,555.1 L1288.3,552.6 L1290.8,549.7 L1293.4,546.4 L1295.8,542.8 L1298.1,538.9 L1300.4,534.6 L1302.4,530.2 L1304.4,525.5 L1306.1,520.7 L1307.6,515.7 L1309.0,510.7 L1310.1,505.7 L1311.0,500.7 L1311.6,495.8 L1312.0,491.0ZM1164.4,637.5 L1164.3,633.4 L1163.8,629.7 L1163.0,626.4 L1161.9,623.6 L1160.6,621.2 L1159.0,619.4 L1157.1,618.3 L1155.1,617.7 L1152.9,617.7 L1150.6,618.3 L1148.3,619.6 L1145.8,621.4 L1143.4,623.8 L1141.0,626.7 L1138.7,630.0 L1136.5,633.8 L1134.5,637.8 L1132.7,642.2 L1131.1,646.8 L1129.7,651.4 L1128.7,656.1 L1127.9,660.8 L1127.4,665.3 L1127.3,669.7 L1127.4,673.7 L1127.9,677.5 L1128.7,680.8 L1129.7,683.6 L1131.1,685.9 L1132.7,687.7 L1134.5,688.9 L1136.5,689.5 L1138.7,689.5 L1141.0,688.8 L1143.4,687.6 L1145.8,685.8 L1148.3,683.4 L1150.6,680.5 L1152.9,677.2 L1155.1,673.4 L1157.1,669.3 L1159.0,665.0 L1160.6,660.4 L1161.9,655.7 L1163.0,651.0 L1163.8,646.4 L1164.3,641.8Z" fill="rgb(129,129,129)" fill-rule="evenodd"/>
<path d="M1125.0,882.1 L1123.8,881.4 L1137.9,885.5 L1139.1,886.2Z" fill="rgb(147,147,147)" stroke="rgb(147,147,147)" stroke-width="0.6"/>
<path d="M1123.8,881.4 L1122.8,880.2 L1136.9,884.2 L1137.9,885.5Z" fill="rgb(140,140,140)" stroke="rgb(140,140,140)" stroke-width="0.6"/>
<path d="M1122.8,880.2 L1122.0,878.4 L1136.1,882.4 L1136.9,884.2Z" fill="rgb(134,134,134)" stroke="rgb(134,134,134)" stroke-width="0.6"/>
<path d="M1122.0,878.4 L1121.5,876.1 L1135.7,880.2 L1136.1,882.4Z" fill="rgb(131,131,131)" stroke="rgb(131,131,131)" stroke-width="0.6"/>
<path d="M1121.5,876.1 L1121.4,873.5 L1135.5,877.6 L1135.7,880.2Z" fill="rgb(129,129,129)" stroke="rgb(129,129,129)" stroke-width="0.6"/>
<path d="M1121.4,873.5 L1121.4,579.3 L1135.5,583.4 L1135.5,877.6Z" fill="rgb(129,129,129)" stroke="rgb(129,129,129)" stroke-width="0.6"/>
<path d="M1121.4,579.3 L1121.5,576.4 L1135.7,580.5 L1135.5,583.4Z" fill="rgb(134,134,134)" stroke="rgb(134,134,134)" stroke-width="0.6"/>
<path d="M1121.5,576.4 L1122.0,573.4 L1136.1,577.5 L1135.7,580.5Z" fill="rgb(147,147,147)" stroke="rgb(147,147,147)" stroke-width="0.6"/>
<path d="M1122.0,573.4 L1122.8,570.3 L1136.9,574.4 L1136.1,577.5Z" fill="rgb(161,161,161)" stroke="rgb(161,161,161)" stroke-width="0.6"/>
<path d="M1122.8,570.3 L1123.8,567.3 L1137.9,571.4 L1136.9,574.4Z" fill="rgb(175,175,175)" stroke="rgb(175,175,175)" stroke-width="0.6"/>
<path d="M1123.8,567.3 L1125.0,564.5 L1139.1,568.5 L1137.9,571.4Z" fill="rgb(190,190,190)" stroke="rgb(190,190,190)" stroke-width="0.6"/>
<path d="M1125.0,564.5 L1126.4,561.9 L1140.5,566.0 L1139.1,568.5Z" fill="rgb(204,204,204)" stroke="rgb(204,204,204)" stroke-width="0.6"/>
<path d="M1126.4,561.9 L1127.9,559.8 L1142.1,563.9 L1140.5,566.0Z" fill="rgb(217,217,217)" stroke="rgb(217,217,217)" stroke-width="0.6"/>
<path d="M1127.9,559.8 L1129.5,558.2 L1143.7,562.2 L1142.1,563.9Z" fill="rgb(229,229,229)" stroke="rgb(229,229,229)" stroke-width="0.6"/>
<path d="M1129.5,558.2 L1162.1,529.9 L1176.2,534.0 L1143.7,562.2Z" fill="rgb(234,234,234)" stroke="rgb(234,234,234)" stroke-width="0.6"/>
<path d="M1162.1,529.9 L1289.1,439.4 L1303.2,443.5 L1176.2,534.0Z" fill="rgb(233,233,233)" stroke="rgb(233,233,233)" stroke-width="0.6"/>
<path d="M1289.1,439.4 L1290.5,438.5 L1304.6,442.6 L1303.2,443.5Z" fill="rgb(233,233,233)" stroke="rgb(233,233,233)" stroke-width="0.6"/>
<path d="M1290.5,438.5 L1291.8,437.7 L1305.9,441.7 L1304.6,442.6Z" fill="rgb(232,232,232)" stroke="rgb(232,232,232)" stroke-width="0.6"/>
<path d="M1291.8,437.7 L1293.2,436.9 L1307.3,441.0 L1305.9,441.7Z" fill="rgb(231,231,231)" stroke="rgb(231,231,231)" stroke-width="0.6"/>
<path d="M1293.2,436.9 L1294.5,436.2 L1308.6,440.3 L1307.3,441.0Z" fill="rgb(230,230,230)" stroke="rgb(230,230,230)" stroke-width="0.6"/>
<path d="M1294.5,436.2 L1295.9,435.7 L1310.0,439.8 L1308.6,440.3Z" fill="rgb(230,230,230)" stroke="rgb(230,230,230)" stroke-width="0.6"/>
<path d="M1295.9,435.7 L1297.2,435.2 L1311.3,439.3 L1310.0,439.8Z" fill="rgb(229,229,229)" stroke="rgb(229,229,229)" stroke-width="0.6"/>
<path d="M1297.2,435.2 L1298.5,434.8 L1312.6,438.9 L1311.3,439.3Z" fill="rgb(228,228,228)" stroke="rgb(228,228,228)" stroke-width="0.6"/>
<path d="M1298.5,434.8 L1299.8,434.5 L1313.9,438.6 L1312.6,438.9Z" fill="rgb(227,227,227)" stroke="rgb(227,227,227)" stroke-width="0.6"/>
<path d="M1299.8,434.5 L1301.0,434.3 L1315.1,438.4 L1313.9,438.6Z" fill="rgb(225,225,225)" stroke="rgb(225,225,225)" stroke-width="0.6"/>
<path d="M1301.0,434.3 L1302.3,434.2 L1316.4,438.3 L1315.1,438.4Z" fill="rgb(224,224,224)" stroke="rgb(224,224,224)" stroke-width="0.6"/>
<path d="M1302.3,434.2 L1303.5,434.2 L1317.6,438.3 L1316.4,438.3Z" fill="rgb(223,223,223)" stroke="rgb(223,223,223)" stroke-width="0.6"/>
<path d="M1303.5,434.2 L1304.7,434.3 L1318.8,438.4 L1317.6,438.3Z" fill="rgb(222,222,222)" stroke="rgb(222,222,222)" stroke-width="0.6"/>
<path d="M1304.7,434.3 L1305.9,434.5 L1320.0,438.5 L1318.8,438.4Z" fill="rgb(220,220,220)" stroke="rgb(220,220,220)" stroke-width="0.6"/>
<path d="M1305.9,434.5 L1307.1,434.7 L1321.2,438.8 L1320.0,438.5Z" fill="rgb(219,219,219)" stroke="rgb(219,219,219)" stroke-width="0.6"/>
<clipPath id="gpc0"><path d="M1326.2,490.5 L1326.1,486.2 L1325.7,482.0 L1325.1,478.2 L1324.2,474.8 L1323.1,471.7 L1321.8,469.0 L1320.2,466.7 L1318.5,464.9 L1316.6,463.5 L1314.5,462.7 L1312.3,462.3 L1309.9,462.4 L1307.5,463.0 L1305.0,464.1 L1302.4,465.6 L1299.8,467.7 L1297.2,470.1 L1294.7,473.0 L1292.1,476.3 L1289.7,479.9 L1287.4,483.8 L1285.1,488.1 L1283.1,492.5 L1281.1,497.2 L1279.4,502.1 L1277.8,507.0 L1276.5,512.0 L1275.4,517.0 L1274.5,522.0 L1273.9,526.9 L1273.5,531.7 L1273.4,536.3 L1273.5,540.6 L1273.9,544.7 L1274.5,548.6 L1275.4,552.0 L1276.5,555.1 L1277.8,557.8 L1279.4,560.1 L1281.1,561.9 L1283.1,563.3 L1285.1,564.1 L1287.4,564.5 L1289.7,564.4 L1292.1,563.8 L1294.7,562.7 L1297.2,561.2 L1299.8,559.1 L1302.4,556.7 L1305.0,553.8 L1307.5,550.5 L1309.9,546.9 L1312.3,543.0 L1314.5,538.7 L1316.6,534.2 L1318.5,529.6 L1320.2,524.7 L1321.8,519.8 L1323.1,514.8 L1324.2,509.8 L1325.1,504.8 L1325.7,499.9 L1326.1,495.1Z"/></clipPath>
<linearGradient id="gpc0g" x1="0" y1="462.3" x2="0" y2="564.5" gradientUnits="userSpaceOnUse"><stop offset="0" stop-color="rgb(131,131,131)"/><stop offset="0.45" stop-color="rgb(169,169,169)"/><stop offset="1" stop-color="rgb(222,222,222)"/></linearGradient>
<path d="M1326.2,490.5 L1326.1,486.2 L1325.7,482.0 L1325.1,478.2 L1324.2,474.8 L1323.1,471.7 L1321.8,469.0 L1320.2,466.7 L1318.5,464.9 L1316.6,463.5 L1314.5,462.7 L1312.3,462.3 L1309.9,462.4 L1307.5,463.0 L1305.0,464.1 L1302.4,465.6 L1299.8,467.7 L1297.2,470.1 L1294.7,473.0 L1292.1,476.3 L1289.7,479.9 L1287.4,483.8 L1285.1,488.1 L1283.1,492.5 L1281.1,497.2 L1279.4,502.1 L1277.8,507.0 L1276.5,512.0 L1275.4,517.0 L1274.5,522.0 L1273.9,526.9 L1273.5,531.7 L1273.4,536.3 L1273.5,540.6 L1273.9,544.7 L1274.5,548.6 L1275.4,552.0 L1276.5,555.1 L1277.8,557.8 L1279.4,560.1 L1281.1,561.9 L1283.1,563.3 L1285.1,564.1 L1287.4,564.5 L1289.7,564.4 L1292.1,563.8 L1294.7,562.7 L1297.2,561.2 L1299.8,559.1 L1302.4,556.7 L1305.0,553.8 L1307.5,550.5 L1309.9,546.9 L1312.3,543.0 L1314.5,538.7 L1316.6,534.2 L1318.5,529.6 L1320.2,524.7 L1321.8,519.8 L1323.1,514.8 L1324.2,509.8 L1325.1,504.8 L1325.7,499.9 L1326.1,495.1ZM1312.1,486.5 L1312.0,482.1 L1311.6,478.0 L1311.0,474.2 L1310.1,470.7 L1309.0,467.6 L1307.6,464.9 L1306.1,462.6 L1304.4,460.8 L1302.4,459.5 L1300.4,458.6 L1298.1,458.2 L1295.8,458.3 L1293.4,458.9 L1290.8,460.0 L1288.3,461.6 L1285.7,463.6 L1283.1,466.0 L1280.5,468.9 L1278.0,472.2 L1275.6,475.8 L1273.2,479.8 L1271.0,484.0 L1268.9,488.5 L1267.0,493.2 L1265.3,498.0 L1263.7,502.9 L1262.4,507.9 L1261.3,512.9 L1260.4,517.9 L1259.8,522.8 L1259.4,527.6 L1259.3,532.2 L1259.4,536.6 L1259.8,540.7 L1260.4,544.5 L1261.3,548.0 L1262.4,551.0 L1263.7,553.7 L1265.3,556.0 L1267.0,557.8 L1268.9,559.2 L1271.0,560.1 L1273.2,560.4 L1275.6,560.3 L1278.0,559.7 L1280.5,558.6 L1283.1,557.1 L1285.7,555.1 L1288.3,552.6 L1290.8,549.7 L1293.4,546.4 L1295.8,542.8 L1298.1,538.9 L1300.4,534.6 L1302.4,530.2 L1304.4,525.5 L1306.1,520.7 L1307.6,515.7 L1309.0,510.7 L1310.1,505.7 L1311.0,500.7 L1311.6,495.8 L1312.0,491.0Z" fill="url(#gpc0g)" fill-rule="evenodd" clip-path="url(#gpc0)"/>
<clipPath id="gpc1"><path d="M1178.5,641.6 L1178.4,637.5 L1177.9,633.8 L1177.1,630.5 L1176.0,627.6 L1174.7,625.3 L1173.1,623.5 L1171.3,622.3 L1169.2,621.7 L1167.1,621.8 L1164.8,622.4 L1162.4,623.7 L1160.0,625.5 L1157.5,627.9 L1155.1,630.7 L1152.8,634.1 L1150.7,637.8 L1148.6,641.9 L1146.8,646.3 L1145.2,650.8 L1143.9,655.5 L1142.8,660.2 L1142.0,664.9 L1141.5,669.4 L1141.4,673.8 L1141.5,677.8 L1142.0,681.5 L1142.8,684.8 L1143.9,687.7 L1145.2,690.0 L1146.8,691.8 L1148.6,693.0 L1150.7,693.6 L1152.8,693.6 L1155.1,692.9 L1157.5,691.7 L1160.0,689.8 L1162.4,687.5 L1164.8,684.6 L1167.1,681.2 L1169.2,677.5 L1171.3,673.4 L1173.1,669.0 L1174.7,664.5 L1176.0,659.8 L1177.1,655.1 L1177.9,650.4 L1178.4,645.9Z"/></clipPath>
<linearGradient id="gpc1g" x1="0" y1="621.7" x2="0" y2="693.6" gradientUnits="userSpaceOnUse"><stop offset="0" stop-color="rgb(131,131,131)"/><stop offset="0.45" stop-color="rgb(169,169,169)"/><stop offset="1" stop-color="rgb(222,222,222)"/></linearGradient>
<path d="M1178.5,641.6 L1178.4,637.5 L1177.9,633.8 L1177.1,630.5 L1176.0,627.6 L1174.7,625.3 L1173.1,623.5 L1171.3,622.3 L1169.2,621.7 L1167.1,621.8 L1164.8,622.4 L1162.4,623.7 L1160.0,625.5 L1157.5,627.9 L1155.1,630.7 L1152.8,634.1 L1150.7,637.8 L1148.6,641.9 L1146.8,646.3 L1145.2,650.8 L1143.9,655.5 L1142.8,660.2 L1142.0,664.9 L1141.5,669.4 L1141.4,673.8 L1141.5,677.8 L1142.0,681.5 L1142.8,684.8 L1143.9,687.7 L1145.2,690.0 L1146.8,691.8 L1148.6,693.0 L1150.7,693.6 L1152.8,693.6 L1155.1,692.9 L1157.5,691.7 L1160.0,689.8 L1162.4,687.5 L1164.8,684.6 L1167.1,681.2 L1169.2,677.5 L1171.3,673.4 L1173.1,669.0 L1174.7,664.5 L1176.0,659.8 L1177.1,655.1 L1177.9,650.4 L1178.4,645.9ZM1164.4,637.5 L1164.3,633.4 L1163.8,629.7 L1163.0,626.4 L1161.9,623.6 L1160.6,621.2 L1159.0,619.4 L1157.1,618.3 L1155.1,617.7 L1152.9,617.7 L1150.6,618.3 L1148.3,619.6 L1145.8,621.4 L1143.4,623.8 L1141.0,626.7 L1138.7,630.0 L1136.5,633.8 L1134.5,637.8 L1132.7,642.2 L1131.1,646.8 L1129.7,651.4 L1128.7,656.1 L1127.9,660.8 L1127.4,665.3 L1127.3,669.7 L1127.4,673.7 L1127.9,677.5 L1128.7,680.8 L1129.7,683.6 L1131.1,685.9 L1132.7,687.7 L1134.5,688.9 L1136.5,689.5 L1138.7,689.5 L1141.0,688.8 L1143.4,687.6 L1145.8,685.8 L1148.3,683.4 L1150.6,680.5 L1152.9,677.2 L1155.1,673.4 L1157.1,669.3 L1159.0,665.0 L1160.6,660.4 L1161.9,655.7 L1163.0,651.0 L1163.8,646.4 L1164.3,641.8Z" fill="url(#gpc1g)" fill-rule="evenodd" clip-path="url(#gpc1)"/>
<path d="M1143.7,884.6 L1142.1,885.7 L1140.5,886.3 L1139.1,886.2 L1137.9,885.5 L1136.9,884.2 L1136.1,882.4 L1135.7,880.2 L1135.5,877.6 L1135.5,583.4 L1135.7,580.5 L1136.1,577.5 L1136.9,574.4 L1137.9,571.4 L1139.1,568.5 L1140.5,566.0 L1142.1,563.9 L1143.7,562.2 L1176.2,534.0 L1303.2,443.5 L1304.6,442.6 L1305.9,441.7 L1307.3,441.0 L1308.6,440.3 L1310.0,439.8 L1311.3,439.3 L1312.6,438.9 L1313.9,438.6 L1315.1,438.4 L1316.4,438.3 L1317.6,438.3 L1318.8,438.4 L1320.0,438.5 L1321.2,438.8 L1322.3,439.2 L1323.4,439.6 L1324.5,440.2 L1325.5,440.8 L1326.5,441.6 L1327.5,442.4 L1328.5,443.3 L1329.4,444.3 L1330.2,445.4 L1331.1,446.5 L1331.9,447.8 L1332.6,449.1 L1333.3,450.5 L1334.0,452.0 L1334.6,453.6 L1335.2,455.2 L1335.7,457.0 L1336.2,458.7 L1336.7,460.6 L1337.1,462.5 L1337.4,464.5 L1337.7,466.6 L1338.0,468.7 L1338.2,470.8 L1338.4,473.0 L1338.5,475.3 L1347.4,693.1 L1347.3,696.1 L1346.9,699.2 L1346.2,702.4 L1345.2,705.6 L1343.9,708.6 L1342.5,711.3 L1340.9,713.5 L1339.2,715.3ZM1326.2,490.5 L1326.1,486.2 L1325.7,482.0 L1325.1,478.2 L1324.2,474.8 L1323.1,471.7 L1321.8,469.0 L1320.2,466.7 L1318.5,464.9 L1316.6,463.5 L1314.5,462.7 L1312.3,462.3 L1309.9,462.4 L1307.5,463.0 L1305.0,464.1 L1302.4,465.6 L1299.8,467.7 L1297.2,470.1 L1294.7,473.0 L1292.1,476.3 L1289.7,479.9 L1287.4,483.8 L1285.1,488.1 L1283.1,492.5 L1281.1,497.2 L1279.4,502.1 L1277.8,507.0 L1276.5,512.0 L1275.4,517.0 L1274.5,522.0 L1273.9,526.9 L1273.5,531.7 L1273.4,536.3 L1273.5,540.6 L1273.9,544.7 L1274.5,548.6 L1275.4,552.0 L1276.5,555.1 L1277.8,557.8 L1279.4,560.1 L1281.1,561.9 L1283.1,563.3 L1285.1,564.1 L1287.4,564.5 L1289.7,564.4 L1292.1,563.8 L1294.7,562.7 L1297.2,561.2 L1299.8,559.1 L1302.4,556.7 L1305.0,553.8 L1307.5,550.5 L1309.9,546.9 L1312.3,543.0 L1314.5,538.7 L1316.6,534.2 L1318.5,529.6 L1320.2,524.7 L1321.8,519.8 L1323.1,514.8 L1324.2,509.8 L1325.1,504.8 L1325.7,499.9 L1326.1,495.1ZM1178.5,641.6 L1178.4,637.5 L1177.9,633.8 L1177.1,630.5 L1176.0,627.6 L1174.7,625.3 L1173.1,623.5 L1171.3,622.3 L1169.2,621.7 L1167.1,621.8 L1164.8,622.4 L1162.4,623.7 L1160.0,625.5 L1157.5,627.9 L1155.1,630.7 L1152.8,634.1 L1150.7,637.8 L1148.6,641.9 L1146.8,646.3 L1145.2,650.8 L1143.9,655.5 L1142.8,660.2 L1142.0,664.9 L1141.5,669.4 L1141.4,673.8 L1141.5,677.8 L1142.0,681.5 L1142.8,684.8 L1143.9,687.7 L1145.2,690.0 L1146.8,691.8 L1148.6,693.0 L1150.7,693.6 L1152.8,693.6 L1155.1,692.9 L1157.5,691.7 L1160.0,689.8 L1162.4,687.5 L1164.8,684.6 L1167.1,681.2 L1169.2,677.5 L1171.3,673.4 L1173.1,669.0 L1174.7,664.5 L1176.0,659.8 L1177.1,655.1 L1177.9,650.4 L1178.4,645.9Z" fill="rgb(205,205,205)" fill-rule="evenodd"/>
<linearGradient id="gpsh" x1="0" y1="0.7" x2="1" y2="0.3"><stop offset="0" stop-color="rgb(234,234,234)"/><stop offset="0.45" stop-color="rgb(186,186,186)"/><stop offset="1" stop-color="rgb(126,126,126)"/></linearGradient>
<path d="M1146.9,867.7 L1146.8,866.1 L1146.3,864.9 L1145.6,864.3 L1144.7,864.3 L1143.7,864.9 L1142.6,866.0 L1141.7,867.6 L1141.0,869.5 L1140.5,871.5 L1140.4,873.3 L1140.5,875.0 L1141.0,876.1 L1141.7,876.8 L1142.6,876.8 L1143.7,876.2 L1144.7,875.0 L1145.6,873.4 L1146.3,871.6 L1146.8,869.6Z" fill="url(#gpsh)" stroke="#1e1e1e" stroke-width="1.2"/>
<path d="M1212.1,811.2 L1212.0,809.6 L1211.5,808.5 L1210.8,807.8 L1209.9,807.8 L1208.8,808.4 L1207.8,809.6 L1206.9,811.2 L1206.2,813.0 L1205.7,815.0 L1205.6,816.9 L1205.7,818.5 L1206.2,819.7 L1206.9,820.3 L1207.8,820.3 L1208.8,819.7 L1209.9,818.6 L1210.8,817.0 L1211.5,815.1 L1212.0,813.1Z" fill="url(#gpsh)" stroke="#1e1e1e" stroke-width="1.2"/>
<path d="M1277.3,754.8 L1277.2,753.2 L1276.7,752.0 L1276.0,751.4 L1275.1,751.4 L1274.0,752.0 L1273.0,753.1 L1272.1,754.7 L1271.4,756.6 L1270.9,758.5 L1270.8,760.4 L1270.9,762.0 L1271.4,763.2 L1272.1,763.8 L1273.0,763.8 L1274.0,763.2 L1275.1,762.1 L1276.0,760.5 L1276.7,758.6 L1277.2,756.7Z" fill="url(#gpsh)" stroke="#1e1e1e" stroke-width="1.2"/>
<path d="M1342.5,698.3 L1342.4,696.7 L1341.9,695.5 L1341.2,694.9 L1340.3,694.9 L1339.2,695.5 L1338.2,696.6 L1337.3,698.2 L1336.6,700.1 L1336.1,702.1 L1336.0,704.0 L1336.1,705.6 L1336.6,706.7 L1337.3,707.4 L1338.2,707.4 L1339.2,706.8 L1340.3,705.6 L1341.2,704.0 L1341.9,702.2 L1342.4,700.2Z" fill="url(#gpsh)" stroke="#1e1e1e" stroke-width="1.2"/>
<path d="M1146.9,573.5 L1146.8,571.9 L1146.3,570.8 L1145.6,570.1 L1144.7,570.1 L1143.7,570.7 L1142.6,571.9 L1141.7,573.4 L1141.0,575.3 L1140.5,577.3 L1140.4,579.2 L1140.5,580.8 L1141.0,582.0 L1141.7,582.6 L1142.6,582.6 L1143.7,582.0 L1144.7,580.9 L1145.6,579.3 L1146.3,577.4 L1146.8,575.4Z" fill="url(#gpsh)" stroke="#1e1e1e" stroke-width="1.2"/>
<path d="M1179.5,545.3 L1179.4,543.7 L1178.9,542.5 L1178.2,541.9 L1177.3,541.9 L1176.2,542.5 L1175.2,543.6 L1174.3,545.2 L1173.6,547.1 L1173.1,549.1 L1173.0,550.9 L1173.1,552.6 L1173.6,553.7 L1174.3,554.3 L1175.2,554.4 L1176.2,553.8 L1177.3,552.6 L1178.2,551.0 L1178.9,549.2 L1179.4,547.2Z" fill="url(#gpsh)" stroke="#1e1e1e" stroke-width="1.2"/>
<path d="M1335.5,477.5 L1335.4,475.9 L1334.9,474.7 L1334.2,474.1 L1333.3,474.1 L1332.3,474.7 L1331.3,475.9 L1330.4,477.4 L1329.6,479.3 L1329.2,481.3 L1329.0,483.2 L1329.2,484.8 L1329.6,486.0 L1330.4,486.6 L1331.3,486.6 L1332.3,486.0 L1333.3,484.8 L1334.2,483.3 L1334.9,481.4 L1335.4,479.4Z" fill="url(#gpsh)" stroke="#1e1e1e" stroke-width="1.2"/>
<path d="M1300.2,456.8 L1300.1,455.2 L1299.6,454.0 L1298.9,453.4 L1298.0,453.4 L1297.0,454.0 L1296.0,455.1 L1295.0,456.7 L1294.3,458.6 L1293.9,460.5 L1293.7,462.4 L1293.9,464.0 L1294.3,465.2 L1295.0,465.8 L1296.0,465.9 L1297.0,465.3 L1298.0,464.1 L1298.9,462.5 L1299.6,460.6 L1300.1,458.7Z" fill="url(#gpsh)" stroke="#1e1e1e" stroke-width="1.2"/>
<path d="M1305.9,564.4 L1305.7,562.8 L1305.3,561.6 L1304.6,561.0 L1303.7,560.9 L1302.6,561.5 L1301.6,562.7 L1300.7,564.3 L1300.0,566.1 L1299.5,568.1 L1299.4,570.0 L1299.5,571.6 L1300.0,572.8 L1300.7,573.4 L1301.6,573.4 L1302.6,572.8 L1303.7,571.7 L1304.6,570.1 L1305.3,568.2 L1305.7,566.2Z" fill="url(#gpsh)" stroke="#1e1e1e" stroke-width="1.2"/>
<path d="M1139.1,886.2 L1137.9,885.5 L1136.9,884.2 L1136.1,882.4 L1135.7,880.2 L1135.5,877.6 L1135.5,583.4 L1135.7,580.5 L1136.1,577.5 L1136.9,574.4 L1137.9,571.4 L1139.1,568.5 L1140.5,566.0 L1142.1,563.9 L1143.7,562.2 L1176.2,534.0 L1303.2,443.5 L1304.6,442.6 L1305.9,441.7 L1307.3,441.0 L1308.6,440.3 L1310.0,439.8 L1311.3,439.3 L1312.6,438.9 L1313.9,438.6 L1315.1,438.4 L1316.4,438.3 L1317.6,438.3 L1318.8,438.4 L1320.0,438.5 L1321.2,438.8" fill="none" stroke="#1e1e1e" stroke-width="1.2" stroke-linejoin="round"/>
<path d="M1121.4,873.5 L1135.5,877.6" stroke="#1e1e1e" stroke-width="1.3"/>
<path d="M1121.4,579.3 L1135.5,583.4" stroke="#1e1e1e" stroke-width="1.3"/>
<path d="M1129.5,558.2 L1143.7,562.2" stroke="#1e1e1e" stroke-width="1.3"/>
<path d="M1162.1,529.9 L1176.2,534.0" stroke="#1e1e1e" stroke-width="1.3"/>
<path d="M1289.1,439.4 L1303.2,443.5" stroke="#1e1e1e" stroke-width="1.3"/>
<clipPath id="gpc0x"><path d="M0,0 H1919 V1079 H0Z M1312.1,486.5 L1312.0,482.1 L1311.6,478.0 L1311.0,474.2 L1310.1,470.7 L1309.0,467.6 L1307.6,464.9 L1306.1,462.6 L1304.4,460.8 L1302.4,459.5 L1300.4,458.6 L1298.1,458.2 L1295.8,458.3 L1293.4,458.9 L1290.8,460.0 L1288.3,461.6 L1285.7,463.6 L1283.1,466.0 L1280.5,468.9 L1278.0,472.2 L1275.6,475.8 L1273.2,479.8 L1271.0,484.0 L1268.9,488.5 L1267.0,493.2 L1265.3,498.0 L1263.7,502.9 L1262.4,507.9 L1261.3,512.9 L1260.4,517.9 L1259.8,522.8 L1259.4,527.6 L1259.3,532.2 L1259.4,536.6 L1259.8,540.7 L1260.4,544.5 L1261.3,548.0 L1262.4,551.0 L1263.7,553.7 L1265.3,556.0 L1267.0,557.8 L1268.9,559.2 L1271.0,560.1 L1273.2,560.4 L1275.6,560.3 L1278.0,559.7 L1280.5,558.6 L1283.1,557.1 L1285.7,555.1 L1288.3,552.6 L1290.8,549.7 L1293.4,546.4 L1295.8,542.8 L1298.1,538.9 L1300.4,534.6 L1302.4,530.2 L1304.4,525.5 L1306.1,520.7 L1307.6,515.7 L1309.0,510.7 L1310.1,505.7 L1311.0,500.7 L1311.6,495.8 L1312.0,491.0Z" clip-rule="evenodd"/></clipPath>
<path d="M1326.2,490.5 L1326.1,486.2 L1325.7,482.0 L1325.1,478.2 L1324.2,474.8 L1323.1,471.7 L1321.8,469.0 L1320.2,466.7 L1318.5,464.9 L1316.6,463.5 L1314.5,462.7 L1312.3,462.3 L1309.9,462.4 L1307.5,463.0 L1305.0,464.1 L1302.4,465.6 L1299.8,467.7 L1297.2,470.1 L1294.7,473.0 L1292.1,476.3 L1289.7,479.9 L1287.4,483.8 L1285.1,488.1 L1283.1,492.5 L1281.1,497.2 L1279.4,502.1 L1277.8,507.0 L1276.5,512.0 L1275.4,517.0 L1274.5,522.0 L1273.9,526.9 L1273.5,531.7 L1273.4,536.3 L1273.5,540.6 L1273.9,544.7 L1274.5,548.6 L1275.4,552.0 L1276.5,555.1 L1277.8,557.8 L1279.4,560.1 L1281.1,561.9 L1283.1,563.3 L1285.1,564.1 L1287.4,564.5 L1289.7,564.4 L1292.1,563.8 L1294.7,562.7 L1297.2,561.2 L1299.8,559.1 L1302.4,556.7 L1305.0,553.8 L1307.5,550.5 L1309.9,546.9 L1312.3,543.0 L1314.5,538.7 L1316.6,534.2 L1318.5,529.6 L1320.2,524.7 L1321.8,519.8 L1323.1,514.8 L1324.2,509.8 L1325.1,504.8 L1325.7,499.9 L1326.1,495.1Z" fill="none" stroke="#1e1e1e" stroke-width="1.2" clip-path="url(#gpc0x)"/>
<clipPath id="gpc1x"><path d="M0,0 H1919 V1079 H0Z M1164.4,637.5 L1164.3,633.4 L1163.8,629.7 L1163.0,626.4 L1161.9,623.6 L1160.6,621.2 L1159.0,619.4 L1157.1,618.3 L1155.1,617.7 L1152.9,617.7 L1150.6,618.3 L1148.3,619.6 L1145.8,621.4 L1143.4,623.8 L1141.0,626.7 L1138.7,630.0 L1136.5,633.8 L1134.5,637.8 L1132.7,642.2 L1131.1,646.8 L1129.7,651.4 L1128.7,656.1 L1127.9,660.8 L1127.4,665.3 L1127.3,669.7 L1127.4,673.7 L1127.9,677.5 L1128.7,680.8 L1129.7,683.6 L1131.1,685.9 L1132.7,687.7 L1134.5,688.9 L1136.5,689.5 L1138.7,689.5 L1141.0,688.8 L1143.4,687.6 L1145.8,685.8 L1148.3,683.4 L1150.6,680.5 L1152.9,677.2 L1155.1,673.4 L1157.1,669.3 L1159.0,665.0 L1160.6,660.4 L1161.9,655.7 L1163.0,651.0 L1163.8,646.4 L1164.3,641.8Z" clip-rule="evenodd"/></clipPath>
<path d="M1178.5,641.6 L1178.4,637.5 L1177.9,633.8 L1177.1,630.5 L1176.0,627.6 L1174.7,625.3 L1173.1,623.5 L1171.3,622.3 L1169.2,621.7 L1167.1,621.8 L1164.8,622.4 L1162.4,623.7 L1160.0,625.5 L1157.5,627.9 L1155.1,630.7 L1152.8,634.1 L1150.7,637.8 L1148.6,641.9 L1146.8,646.3 L1145.2,650.8 L1143.9,655.5 L1142.8,660.2 L1142.0,664.9 L1141.5,669.4 L1141.4,673.8 L1141.5,677.8 L1142.0,681.5 L1142.8,684.8 L1143.9,687.7 L1145.2,690.0 L1146.8,691.8 L1148.6,693.0 L1150.7,693.6 L1152.8,693.6 L1155.1,692.9 L1157.5,691.7 L1160.0,689.8 L1162.4,687.5 L1164.8,684.6 L1167.1,681.2 L1169.2,677.5 L1171.3,673.4 L1173.1,669.0 L1174.7,664.5 L1176.0,659.8 L1177.1,655.1 L1177.9,650.4 L1178.4,645.9Z" fill="none" stroke="#1e1e1e" stroke-width="1.2" clip-path="url(#gpc1x)"/>
<path d="M1125.0,882.1 L1123.8,881.4 L1122.8,880.2 L1122.0,878.4 L1121.5,876.1 L1121.4,873.5 L1121.4,579.3 L1121.5,576.4 L1122.0,573.4 L1122.8,570.3 L1123.8,567.3 L1125.0,564.5 L1126.4,561.9 L1127.9,559.8 L1129.5,558.2 L1162.1,529.9 L1289.1,439.4 L1290.5,438.5 L1291.8,437.7 L1293.2,436.9 L1294.5,436.2 L1295.9,435.7 L1297.2,435.2 L1298.5,434.8 L1299.8,434.5 L1301.0,434.3 L1302.3,434.2 L1303.5,434.2 L1304.7,434.3 L1305.9,434.5 L1307.1,434.7" fill="none" stroke="#1e1e1e" stroke-width="1.2" stroke-linejoin="round"/>
<path d="M1143.7,884.6 L1142.1,885.7 L1140.5,886.3 L1139.1,886.2" fill="none" stroke="#1e1e1e" stroke-width="1.2" stroke-linejoin="round"/>
<path d="M1321.2,438.8 L1322.3,439.2 L1323.4,439.6 L1324.5,440.2 L1325.5,440.8 L1326.5,441.6 L1327.5,442.4 L1328.5,443.3 L1329.4,444.3 L1330.2,445.4 L1331.1,446.5 L1331.9,447.8 L1332.6,449.1 L1333.3,450.5 L1334.0,452.0 L1334.6,453.6 L1335.2,455.2 L1335.7,457.0 L1336.2,458.7 L1336.7,460.6 L1337.1,462.5 L1337.4,464.5 L1337.7,466.6 L1338.0,468.7 L1338.2,470.8 L1338.4,473.0 L1338.5,475.3 L1347.4,693.1 L1347.3,696.1 L1346.9,699.2 L1346.2,702.4 L1345.2,705.6 L1343.9,708.6 L1342.5,711.3 L1340.9,713.5 L1339.2,715.3 L1143.7,884.6" fill="none" stroke="#1e1e1e" stroke-width="1.2" stroke-linejoin="round"/>
</svg>
<!-- dialog -->
<div class="a" style="left:241px;top:648px;width:220px;height:400px;background:#fff;box-shadow:0 1px 9px rgba(0,0,0,0.22)"></div>
<span class="t" style="left:247px;top:654.28px;font-size:14.2px;color:#333;font-weight:700;transform:scaleX(0.871);">Appearance</span>
<div class="a" style="left:404.5px;top:648px;width:28px;height:28px;background:#c8e6c9"></div>
<svg style="left:409px;top:654.5px" width="19" height="15" viewBox="0 0 19 15"><path d="M2.4 8 L7.2 12.6 L16.6 2.4" fill="none" stroke="#fff" stroke-opacity="0.88" stroke-width="3"/></svg>
<svg style="left:440.5px;top:656.5px" width="13" height="13" viewBox="0 0 13 13"><path d="M1.6 1.6 L11.4 11.4 M11.4 1.6 L1.6 11.4" stroke="#c1272d" stroke-width="2.8"/></svg>
<div class="a" style="left:241px;top:676px;width:220px;height:1px;background:#dedede"></div>
<span class="t" style="left:279px;top:681.8px;font-size:14.5px;color:#1b5faa;transform:scaleX(0.853);">Palette</span>
<span class="t" style="left:394px;top:681.8px;font-size:14.5px;color:#2a2a2a;transform:scaleX(0.804);">Mixer</span>
<div class="a" style="left:241px;top:702px;width:220px;height:1px;background:#e4e4e4"></div>
<div class="a" style="left:241px;top:700.5px;width:115px;height:2px;background:#1b5faa"></div>
<div class="a" style="left:246.8px;top:710px;width:16px;height:16px;background:#000000"></div>
<div class="a" style="left:264.8px;top:710px;width:16px;height:16px;background:#0000ff"></div>
<div class="a" style="left:282.8px;top:710px;width:16px;height:16px;background:#ff0000"></div>
<div class="a" style="left:311px;top:710px;width:16px;height:16px;background:#9dcdf0"></div>
<div class="a" style="left:329px;top:710px;width:16px;height:16px;background:#a8a8a8"></div>
<div class="a" style="left:347px;top:710px;width:16px;height:16px;background:#3b63b5"></div>
<div class="a" style="left:365px;top:710px;width:16px;height:16px;background:#ebebeb"></div>
<div class="a" style="left:383px;top:710px;width:16px;height:16px;background:#c9e1f3"></div>
<div class="a" style="left:401px;top:710px;width:16px;height:16px;background:#f58d0c"></div>
<div class="a" style="left:419px;top:710px;width:16px;height:16px;background:#7d7d7d"></div>
<div class="a" style="left:437px;top:710px;width:16px;height:16px;background:#fdb813"></div>
<div class="a" style="left:246.8px;top:737px;width:16px;height:16px;background:#e6e6e6"></div>
<div class="a" style="left:264.8px;top:737px;width:16px;height:16px;background:#e6e1d3"></div>
<div class="a" style="left:282.8px;top:737px;width:16px;height:16px;background:#d3dde8"></div>
<div class="a" style="left:311.8px;top:737px;width:16px;height:16px;background:#eab3a2"></div>
<div class="a" style="left:329.8px;top:737px;width:16px;height:16px;background:#f0cfa6"></div>
<div class="a" style="left:347.8px;top:737px;width:16px;height:16px;background:#f0dfad"></div>
<div class="a" style="left:365.8px;top:737px;width:16px;height:16px;background:#c9e2b3"></div>
<div class="a" style="left:383.8px;top:737px;width:16px;height:16px;background:#b5e5d8"></div>
<div class="a" style="left:401.8px;top:737px;width:16px;height:16px;background:#c6d8ee"></div>
<div class="a" style="left:419.8px;top:737px;width:16px;height:16px;background:#cfc6ea"></div>
<div class="a" style="left:437.8px;top:737px;width:16px;height:16px;background:#dcc3e0"></div>
<div class="a" style="left:246.8px;top:755px;width:16px;height:16px;background:#cfcfcf"></div>
<div class="a" style="left:264.8px;top:755px;width:16px;height:16px;background:#cfc9b8"></div>
<div class="a" style="left:282.8px;top:755px;width:16px;height:16px;background:#b8c6d4"></div>
<div class="a" style="left:311.8px;top:755px;width:16px;height:16px;background:#e89679"></div>
<div class="a" style="left:329.8px;top:755px;width:16px;height:16px;background:#efbe7d"></div>
<div class="a" style="left:347.8px;top:755px;width:16px;height:16px;background:#f2d685"></div>
<div class="a" style="left:365.8px;top:755px;width:16px;height:16px;background:#a9d48e"></div>
<div class="a" style="left:383.8px;top:755px;width:16px;height:16px;background:#8ed6c7"></div>
<div class="a" style="left:401.8px;top:755px;width:16px;height:16px;background:#92b3dc"></div>
<div class="a" style="left:419.8px;top:755px;width:16px;height:16px;background:#ab9fdb"></div>
<div class="a" style="left:437.8px;top:755px;width:16px;height:16px;background:#c48bcc"></div>
<div class="a" style="left:246.8px;top:773px;width:16px;height:16px;background:#b5b5b5"></div>
<div class="a" style="left:264.8px;top:773px;width:16px;height:16px;background:#b3ae9f"></div>
<div class="a" style="left:282.8px;top:773px;width:16px;height:16px;background:#9dacba"></div>
<div class="a" style="left:311.8px;top:773px;width:16px;height:16px;background:#e57853"></div>
<div class="a" style="left:329.8px;top:773px;width:16px;height:16px;background:#efae57"></div>
<div class="a" style="left:347.8px;top:773px;width:16px;height:16px;background:#f5cf56"></div>
<div class="a" style="left:365.8px;top:773px;width:16px;height:16px;background:#89c46c"></div>
<div class="a" style="left:383.8px;top:773px;width:16px;height:16px;background:#63c7b6"></div>
<div class="a" style="left:401.8px;top:773px;width:16px;height:16px;background:#5b8dcb"></div>
<div class="a" style="left:419.8px;top:773px;width:16px;height:16px;background:#8a77cb"></div>
<div class="a" style="left:437.8px;top:773px;width:16px;height:16px;background:#ae57ba"></div>
<div class="a" style="left:246.8px;top:791px;width:16px;height:16px;background:#9c9c9c"></div>
<div class="a" style="left:264.8px;top:791px;width:16px;height:16px;background:#9a9588"></div>
<div class="a" style="left:282.8px;top:791px;width:16px;height:16px;background:#8594a1"></div>
<div class="a" style="left:311.8px;top:791px;width:16px;height:16px;background:#e0552d"></div>
<div class="a" style="left:329.8px;top:791px;width:16px;height:16px;background:#ee9b2c"></div>
<div class="a" style="left:347.8px;top:791px;width:16px;height:16px;background:#fdc41f"></div>
<div class="a" style="left:365.8px;top:791px;width:16px;height:16px;background:#63b044"></div>
<div class="a" style="left:383.8px;top:791px;width:16px;height:16px;background:#29b5a0"></div>
<div class="a" style="left:401.8px;top:791px;width:16px;height:16px;background:#1f5fb7"></div>
<div class="a" style="left:419.8px;top:791px;width:16px;height:16px;background:#6246b4"></div>
<div class="a" style="left:437.8px;top:791px;width:16px;height:16px;background:#9b22ac"></div>
<div class="a" style="left:246.8px;top:809px;width:16px;height:16px;background:#828282"></div>
<div class="a" style="left:264.8px;top:809px;width:16px;height:16px;background:#807c70"></div>
<div class="a" style="left:282.8px;top:809px;width:16px;height:16px;background:#6d7a87"></div>
<div class="a" style="left:311.8px;top:809px;width:16px;height:16px;background:#c3461f"></div>
<div class="a" style="left:329.8px;top:809px;width:16px;height:16px;background:#cf8224"></div>
<div class="a" style="left:347.8px;top:809px;width:16px;height:16px;background:#d9a816"></div>
<div class="a" style="left:365.8px;top:809px;width:16px;height:16px;background:#4f9635"></div>
<div class="a" style="left:383.8px;top:809px;width:16px;height:16px;background:#1f9a88"></div>
<div class="a" style="left:401.8px;top:809px;width:16px;height:16px;background:#1c559e"></div>
<div class="a" style="left:419.8px;top:809px;width:16px;height:16px;background:#50359c"></div>
<div class="a" style="left:437.8px;top:809px;width:16px;height:16px;background:#851b95"></div>
<div class="a" style="left:246.8px;top:827px;width:16px;height:16px;background:#696969"></div>
<div class="a" style="left:264.8px;top:827px;width:16px;height:16px;background:#67645a"></div>
<div class="a" style="left:282.8px;top:827px;width:16px;height:16px;background:#57626d"></div>
<div class="a" style="left:311.8px;top:827px;width:16px;height:16px;background:#a5371a"></div>
<div class="a" style="left:329.8px;top:827px;width:16px;height:16px;background:#ad691b"></div>
<div class="a" style="left:347.8px;top:827px;width:16px;height:16px;background:#b38a12"></div>
<div class="a" style="left:365.8px;top:827px;width:16px;height:16px;background:#3f7f2a"></div>
<div class="a" style="left:383.8px;top:827px;width:16px;height:16px;background:#19826f"></div>
<div class="a" style="left:401.8px;top:827px;width:16px;height:16px;background:#174781"></div>
<div class="a" style="left:419.8px;top:827px;width:16px;height:16px;background:#40297f"></div>
<div class="a" style="left:437.8px;top:827px;width:16px;height:16px;background:#6d147a"></div>
<div class="a" style="left:246.8px;top:845px;width:16px;height:16px;background:#4f4f4f"></div>
<div class="a" style="left:264.8px;top:845px;width:16px;height:16px;background:#4e4b44"></div>
<div class="a" style="left:282.8px;top:845px;width:16px;height:16px;background:#424a52"></div>
<div class="a" style="left:311.8px;top:845px;width:16px;height:16px;background:#7d2407"></div>
<div class="a" style="left:329.8px;top:845px;width:16px;height:16px;background:#7c4a0d"></div>
<div class="a" style="left:347.8px;top:845px;width:16px;height:16px;background:#80620b"></div>
<div class="a" style="left:365.8px;top:845px;width:16px;height:16px;background:#215c0e"></div>
<div class="a" style="left:383.8px;top:845px;width:16px;height:16px;background:#085e50"></div>
<div class="a" style="left:401.8px;top:845px;width:16px;height:16px;background:#0f3a6a"></div>
<div class="a" style="left:419.8px;top:845px;width:16px;height:16px;background:#2a1566"></div>
<div class="a" style="left:437.8px;top:845px;width:16px;height:16px;background:#4c0b5c"></div>
<div class="a" style="left:347px;top:736.4px;width:17px;height:17px;box-sizing:border-box;border:1px solid #cfc6a8;border-radius:2px"></div>
<svg style="left:348.5px;top:739px" width="14" height="13" viewBox="0 0 14 13"><path d="M1.6 7 L5 11.2 L12.4 1.6" fill="none" stroke="#fff" stroke-width="1.5"/></svg>
<div class="a" style="left:247px;top:868.5px;width:66px;height:21.5px;background:#f0dfad;box-sizing:border-box;border:1px solid #d9cca2"></div>
<div class="a" style="left:323.4px;top:879px;width:80px;height:1.8px;background:#7a7a7a"></div>
<div class="a" style="left:401.3px;top:874.6px;width:10.4px;height:10.4px;border-radius:6px;background:#fff;border:1.2px solid #888;box-sizing:border-box"></div>
<span class="t" style="left:415px;top:870.5px;font-size:13.5px;color:#777;transform:scaleX(0.833);">A</span>
<span class="t" style="left:425px;top:870.2px;font-size:14px;color:#222;transform:scaleX(0.918);">1.00</span>
<div class="a" style="left:422px;top:891.4px;width:30px;height:1px;background:#d0d0d0"></div>
<span class="t" style="left:246px;top:897.3px;font-size:13.5px;color:#777;transform:scaleX(0.932);">#</span>
<div class="a" style="left:256px;top:896px;width:48px;height:17.6px;background:#0a64cc"></div>
<span class="t" style="left:256.6px;top:897px;font-size:14px;color:#fff;transform:scaleX(0.868);">F0DFAD</span>
<div class="a" style="left:253px;top:917.4px;width:60px;height:1.8px;background:#1b5faa"></div>
<span class="t" style="left:322px;top:897.3px;font-size:13.5px;color:#777;transform:scaleX(0.769);">R</span>
<span class="t" style="left:332.7px;top:897px;font-size:14px;color:#222;transform:scaleX(0.920);">240</span>
<div class="a" style="left:329px;top:918px;width:29.5px;height:1px;background:#d4d4d4"></div>
<span class="t" style="left:368px;top:897.3px;font-size:13.5px;color:#777;transform:scaleX(0.762);">G</span>
<span class="t" style="left:378.5px;top:897px;font-size:14px;color:#222;transform:scaleX(0.908);">223</span>
<div class="a" style="left:375px;top:918px;width:30px;height:1px;background:#d4d4d4"></div>
<span class="t" style="left:414.6px;top:897.3px;font-size:13.5px;color:#777;transform:scaleX(0.777);">B</span>
<span class="t" style="left:424px;top:897px;font-size:14px;color:#222;transform:scaleX(0.882);">173</span>
<div class="a" style="left:421px;top:918px;width:30px;height:1px;background:#d4d4d4"></div>
<span class="t" style="left:246px;top:924.6px;font-size:13.5px;color:#5a5a5a;transform:scaleX(0.887);">Custom colors</span>
<div class="a" style="left:247.8px;top:950.2px;width:16px;height:16px;background:#4caf50"></div>
<div class="a" style="left:265.9px;top:950.2px;width:16px;height:16px;background:#4285f4"></div>
<div class="a" style="left:284px;top:950.2px;width:16px;height:16px;background:#cc0000"></div>
<div class="a" style="left:302.1px;top:950.2px;width:16px;height:16px;background:#3c3c3c"></div>
<div class="a" style="left:322px;top:952px;width:13px;height:13px;box-sizing:border-box;border:1px solid #a8a8a8;border-radius:1.5px"></div>
<svg style="left:324.5px;top:954.5px" width="8" height="8" viewBox="0 0 8 8"><path d="M4 0.4 V7.6 M0.4 4 H7.6" stroke="#8a8a8a" stroke-width="1"/></svg>
<span class="t" style="left:246px;top:979.3px;font-size:13.5px;color:#2a2a2a;transform:scaleX(0.909);">Tessellation quality</span>
<span class="t" style="left:361px;top:979px;font-size:14px;color:#222;transform:scaleX(0.920);">Auto</span>
<div class="a" style="left:437px;top:984.8px;border:4px solid transparent;border-top:5px solid #666;border-bottom:0"></div>
<div class="a" style="left:354px;top:999.4px;width:97px;height:1px;background:#cfcfcf"></div>
<span class="t" style="left:246px;top:1004.4px;font-size:13.5px;color:#2a2a2a;transform:scaleX(0.883);">1 fine part</span>
<div class="a" style="left:443.6px;top:1030.6px;width:12.6px;height:12.6px;border-radius:7px;background:#a8a8a8"></div>
<span class="t" style="left:447.3px;top:1030.8px;font-size:10.5px;color:#fff;font-weight:700;transform:scaleX(0.873);">?</span>
<!-- bottom -->
<div class="a" style="left:40.4px;top:1050px;width:1879px;height:29px;background:#d7d7d7"></div>
<svg style="left:10.5px;top:1058px" width="19" height="16" viewBox="0 0 19 16"><path d="M0.6 1 H17.6 V8.4 H0.6Z" fill="#2a2a2a"/><circle cx="10" cy="8" r="4.4" fill="#fafafa" stroke="#2a2a2a" stroke-width="1.7"/><path d="M13.2 11.2 L17.6 15.4" stroke="#2a2a2a" stroke-width="2.2"/></svg>
<div class="a" style="left:41px;top:1050px;width:32.5px;height:29px;background:#dedede;border-right:1px solid #c9c9c9"></div>
<svg style="left:49px;top:1057px" width="15.5" height="15.5" viewBox="0 0 15.5 15.5"><path d="M7.7 0.4 V15 M0.4 7.7 H15" stroke="#444" stroke-width="2.5"/></svg>
<svg style="left:74px;top:1050px" width="175" height="29" viewBox="0 0 175 29"><path d="M0 29 V4 Q0 1 3 1 H32 L40 14.5 L32 29Z" fill="#ededed" stroke="#cfcfcf" stroke-width="0.8"/><path d="M33.6 1 H162 L171 14.5 L162 28.2 H33.6 L41.6 14.5Z" fill="#fdfdfd" stroke="#d2d2d2" stroke-width="0.8"/><path d="M8.6 12.4 L17.8 3.6 L21 6.6 V4.4 H24.2 V9.6 L27 12.4 H24.6 V21 H19.8 V15 H15.8 V21 H11 V12.4Z" fill="#555"/></svg>
<span class="t" style="left:130.4px;top:1053.9px;font-size:15.5px;color:#555;transform:scaleX(0.873);">Exercise 1: Flat</span>
<div class="a" style="left:247px;top:1051px;width:201px;height:28px;background:#e4e4e4;border-left:1px solid #cdcdcd;box-sizing:border-box;border-radius:0 4px 0 0"></div>
<svg style="left:259.5px;top:1056px" width="14" height="14" viewBox="0 0 14 14"><circle cx="7" cy="7" r="6.6" fill="#5b9bd5"/><circle cx="7" cy="7" r="2.6" fill="#fff"/><rect x="6" y="0.8" width="2" height="2.6" fill="#fff"/><rect x="6" y="10.6" width="2" height="2.6" fill="#fff"/></svg>
<svg style="left:277.5px;top:1054px" width="19" height="18" viewBox="0 0 19 18"><path d="M1 1 H14.4 L18 4.2 V17 H4.6 L1 13.8Z" fill="#fff" stroke="#222" stroke-width="1.2" stroke-linejoin="round"/><path d="M1.4 1.4 H12.6 V12.6 H1.4Z" fill="#8c8c8c"/><path d="M1.4 1.4 L3.4 3.2 V12.6 H1.4Z" fill="#555"/><path d="M1.4 1.4 H12.6 L12.6 3.2 H3.4Z" fill="#6a6a6a"/><path d="M14.4 1 L12.6 3 M4.6 17 V13.4 L1 13.8 M4.6 13.4 H12.8 V3.2" fill="none" stroke="#222" stroke-width="0.9"/></svg>
<span class="t" style="left:300px;top:1054.5px;font-size:15.5px;color:#666;transform:scaleX(0.892);">Exercise 1 Assembly</span>
<div class="a" style="left:449px;top:1050px;width:199px;height:29px;background:#fff;border-radius:2px 2px 0 0"></div>
<div class="a" style="left:450.5px;top:1076px;width:196px;height:2.2px;background:#1b5faa;border-radius:1px"></div>
<svg style="left:460px;top:1054.5px" width="19" height="18" viewBox="0 0 19 18"><path d="M1 6.6 L3 5 H7.4 L8.6 6.4 V17 H3 L1 15.6Z" fill="#fff" stroke="#222" stroke-width="1.2" stroke-linejoin="round"/><path d="M3 6.6 V17" stroke="#222" stroke-width="0.9"/><path d="M9.6 2.4 L11.4 0.8 H15.6 L17.4 2.6 V17 H11.4 L9.6 15.6Z" fill="#fff" stroke="#222" stroke-width="1.2" stroke-linejoin="round"/><path d="M11.4 2.6 V17 M9.6 2.4 L11.4 2.6 H15.4" fill="none" stroke="#222" stroke-width="0.9"/></svg>
<span class="t" style="left:482px;top:1054.5px;font-size:15.5px;color:#222;transform:scaleX(0.877);">Exercise 1 Part Studio</span>
</body></html>
